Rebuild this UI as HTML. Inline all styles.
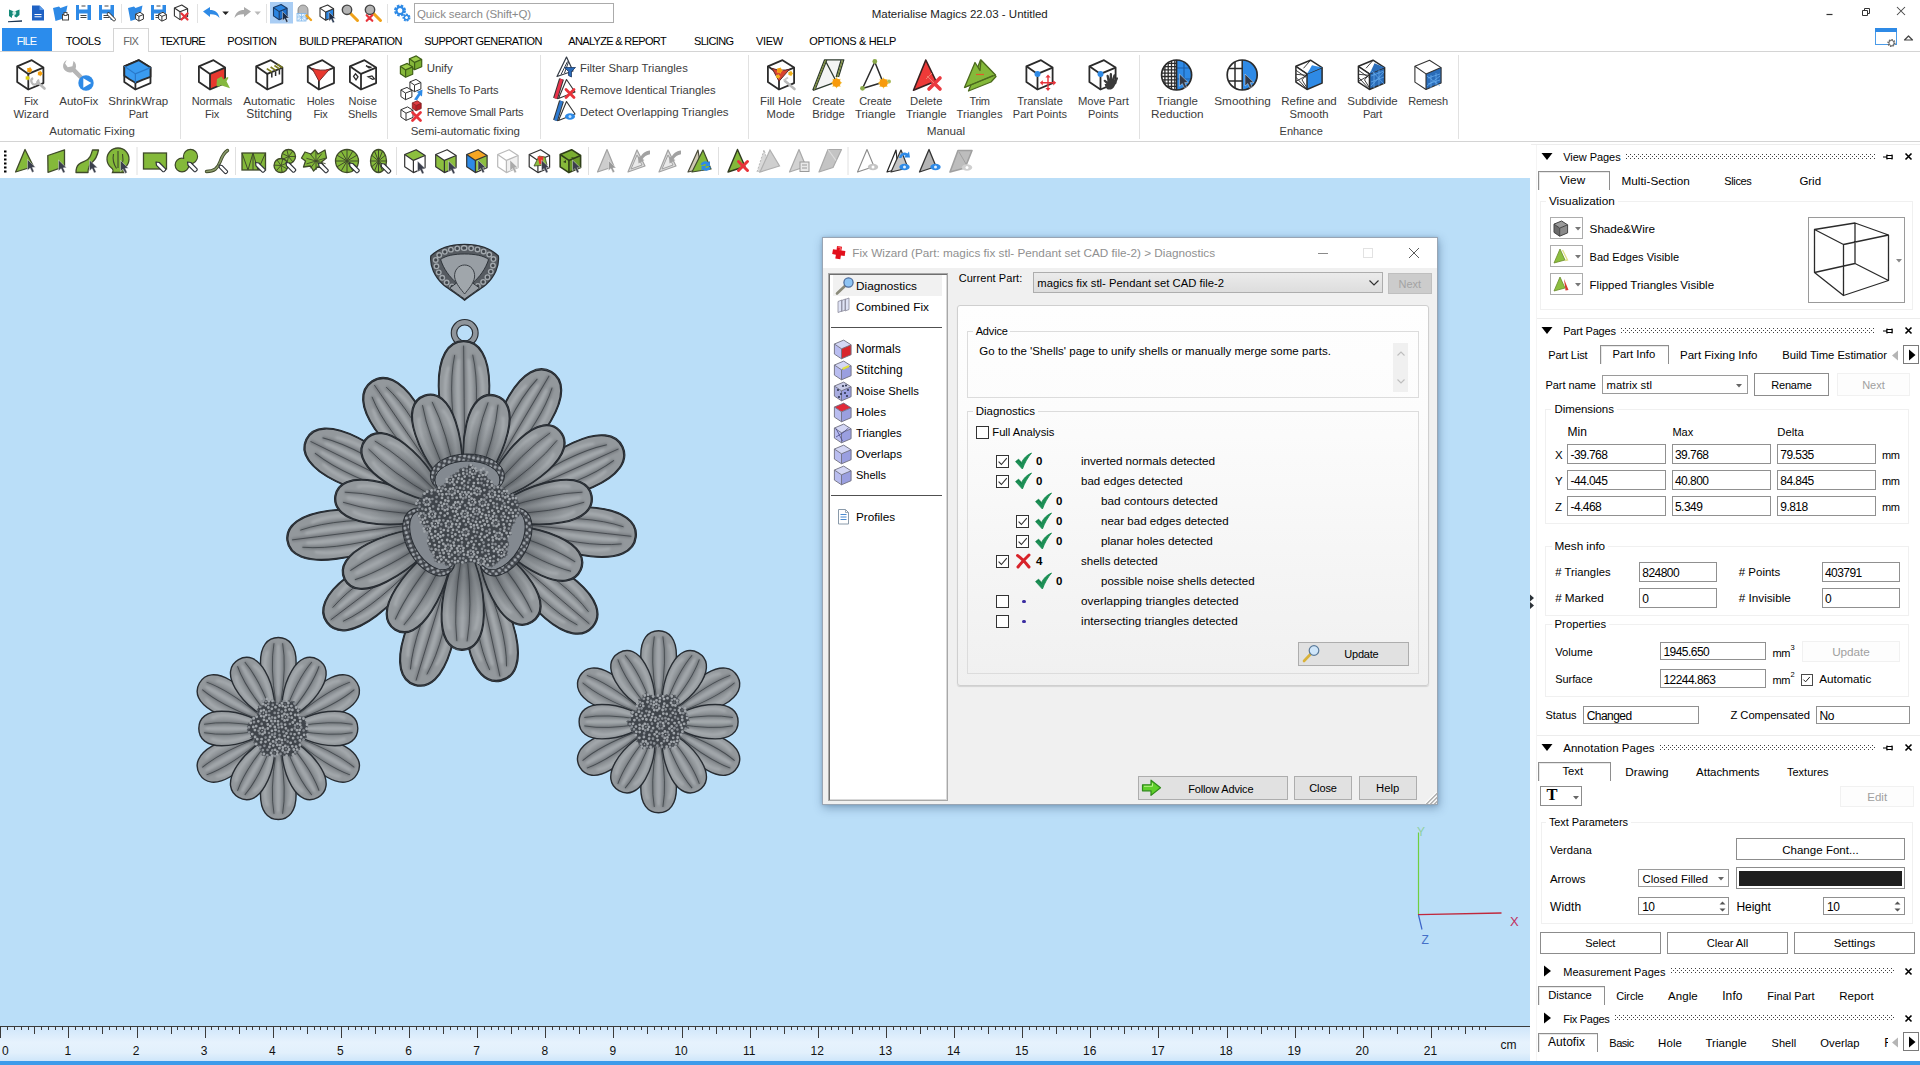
<!DOCTYPE html>
<html><head><meta charset="utf-8"><title>Materialise Magics 22.03 - Untitled</title>
<style>
html,body{margin:0;padding:0;}
body{width:1920px;height:1065px;position:relative;overflow:hidden;background:#fff;font-family:"Liberation Sans",sans-serif;font-size:11.5px;color:#000;}
.b{position:absolute;box-sizing:border-box;}
.t{position:absolute;white-space:nowrap;line-height:16px;height:16px;}
svg{overflow:visible}
</style></head><body>
<div class="b " style="left:0px;top:178px;width:1530px;height:883px;background:#badef8;"></div>
<div class="b " style="left:0px;top:1027px;width:1530px;height:34px;background:linear-gradient(#cfe6fa,#e6f2fd 45%,#e2f0fc 75%,#cfe6fa);"></div>
<div class="b " style="left:0px;top:1061px;width:1920px;height:4px;background:#3d9bea;"></div>
<svg class="b" style="left:0px;top:178px;" width="1530" height="850" viewBox="0 178 1530 850"><defs><filter id="bl" filterUnits="userSpaceOnUse" x="0" y="-40" width="200" height="80"><feGaussianBlur stdDeviation="0.9"/></filter><radialGradient id="cs"><stop offset="0" stop-color="#30353a" stop-opacity=".4"/><stop offset=".6" stop-color="#30353a" stop-opacity=".32"/><stop offset="1" stop-color="#30353a" stop-opacity="0"/></radialGradient><pattern id="st1" width="5.4" height="5.4" patternUnits="userSpaceOnUse" patternTransform="rotate(17)"><rect width="5.4" height="5.4" fill="#3a3f45"/><circle cx="1.4" cy="1.4" r="1.25" fill="#9ba0a6"/><circle cx="4.1" cy="4.1" r="1.25" fill="#92979d"/><circle cx="4.1" cy="1.3" r="1.0" fill="#a5aaaf"/><circle cx="1.3" cy="4.1" r="0.9" fill="#84898f"/></pattern><pattern id="st2" width="13" height="13" patternUnits="userSpaceOnUse" patternTransform="rotate(-31)"><circle cx="4" cy="4" r="2.4" fill="#7d8288" fill-opacity=".5" stroke="#1f2328" stroke-width=".9" stroke-opacity=".75"/><circle cx="10" cy="9" r="2" fill="none" stroke="#1f2328" stroke-width=".8" stroke-opacity=".6"/><circle cx="4" cy="4" r=".8" fill="#c8ccd0"/></pattern><pattern id="bead" width="4.6" height="4.6" patternUnits="userSpaceOnUse" patternTransform="rotate(12)"><rect width="4.6" height="4.6" fill="#3f444a"/><circle cx="2.3" cy="2.3" r="1.95" fill="#9da3a9" stroke="#22262b" stroke-width=".4"/></pattern></defs><g transform="translate(464.6 244)"><path d="M0 0.3C14 0.3 26 4 33.8 12C35 22 30 33 21 41C13 47 5 52 0 56.3C-5 52 -13 47 -21 41C-30 33 -35 22 -33.8 12C-26 4 -14 0.3 0 0.3Z" fill="#565b61" stroke="#272c32" stroke-width="1.2"/><path d="M0 0.3C14 0.3 26 4 33.8 12C35 22 30 33 21 41C13 47 5 52 0 56.3C-5 52 -13 47 -21 41C-30 33 -35 22 -33.8 12C-26 4 -14 0.3 0 0.3Z" transform="translate(0 25) scale(.85) translate(0 -25)" fill="none" stroke="#a2a8ad" stroke-width="7" stroke-dasharray="0 7.6" stroke-linecap="round"/><path d="M0 0.3C14 0.3 26 4 33.8 12C35 22 30 33 21 41C13 47 5 52 0 56.3C-5 52 -13 47 -21 41C-30 33 -35 22 -33.8 12C-26 4 -14 0.3 0 0.3Z" transform="translate(0 25) scale(.85) translate(0 -25)" fill="none" stroke="#41464c" stroke-width="3.8" stroke-dasharray="0 7.6" stroke-linecap="round"/><path d="M0 10C10 10 19 11.5 24 15.5C21 25 15 33 8 39L15 44C10 48 4 52 0 55C-4 52 -10 48 -15 44L-8 39C-15 33 -21 25 -24 15.5C-19 11.5 -10 10 0 10Z" fill="#989ea4" stroke="#272c32" stroke-width=".9"/><path d="M0 21C6 21 10.5 26 10 33C9 40 3 46 0 50C-3 46 -9 40 -10 33C-10.5 26 -6 21 0 21Z" fill="#a0a6ab" stroke="#3a3f45" stroke-width="1"/></g><circle cx="464.7" cy="333" r="10.7" fill="none" stroke="#272c32" stroke-width="6.6"/><circle cx="464.7" cy="333" r="10.7" fill="none" stroke="#8f959b" stroke-width="4.4"/><g transform="translate(465.4 518.0)"><g transform="rotate(-90.6)"><path d="M45.0 0C55.6 -12.9 95.3 -25.8 132.4 -25.8C161.6 -25.8 177.5 -16.0 177.5 0C177.5 16.0 161.6 25.8 132.4 25.8C95.3 25.8 55.6 12.9 45.0 0Z" fill="#50555b" stroke="#272c32" stroke-width="1"/><path d="M45.0 0C55.5 -12.5 94.9 -25.0 131.7 -25.0C160.5 -25.0 176.3 -15.5 176.3 0C176.3 15.5 160.5 25.0 131.7 25.0C94.9 25.0 55.5 12.5 45.0 0Z" fill="#93989c" stroke="#272c32" stroke-width="1.3"/><path d="M73.9 -9.8Q123.8 -24.4 150.3 -15.6M73.9 -3.1Q123.8 -7.8 157.3 -5.0M73.9 3.1Q123.8 7.8 157.3 5.0M73.9 9.8Q123.8 24.4 150.3 15.6" stroke="#abb0b4" stroke-opacity=".75" stroke-width="3.2" stroke-linecap="round" fill="none" filter="url(#bl)"/><path d="M58.1 -5.0Q123.8 -17.5 163.2 -9.0M58.1 0.0Q123.8 0.0 172.4 0.0M58.1 5.0Q123.8 17.5 163.2 9.0" stroke="#62676c" stroke-opacity=".6" stroke-width="3.4" fill="none" filter="url(#bl)"/><path d="M58.1 -5.0Q123.8 -17.5 163.2 -9.0M58.1 0.0Q123.8 0.0 172.4 0.0M58.1 5.0Q123.8 17.5 163.2 9.0" stroke="#33383d" stroke-opacity=".75" stroke-width=".9" fill="none"/></g><g transform="rotate(-59.5)"><path d="M45.0 0C55.0 -12.4 92.5 -24.8 127.5 -24.8C155.0 -24.8 170.0 -15.4 170.0 0C170.0 15.4 155.0 24.8 127.5 24.8C92.5 24.8 55.0 12.4 45.0 0Z" fill="#50555b" stroke="#272c32" stroke-width="1"/><path d="M45.0 0C54.9 -12.0 92.0 -24.0 126.7 -24.0C153.9 -24.0 168.8 -14.9 168.8 0C168.8 14.9 153.9 24.0 126.7 24.0C92.0 24.0 54.9 12.0 45.0 0Z" fill="#93989c" stroke="#272c32" stroke-width="1.3"/><path d="M72.2 -9.4Q119.3 -23.4 144.3 -15.0M72.2 -3.0Q119.3 -7.5 150.8 -4.8M72.2 3.0Q119.3 7.5 150.8 4.8M72.2 9.4Q119.3 23.4 144.3 15.0" stroke="#abb0b4" stroke-opacity=".75" stroke-width="3.2" stroke-linecap="round" fill="none" filter="url(#bl)"/><path d="M57.4 -4.8Q119.3 -16.8 156.4 -8.6M57.4 0.0Q119.3 0.0 165.1 0.0M57.4 4.8Q119.3 16.8 156.4 8.6" stroke="#62676c" stroke-opacity=".6" stroke-width="3.4" fill="none" filter="url(#bl)"/><path d="M57.4 -4.8Q119.3 -16.8 156.4 -8.6M57.4 0.0Q119.3 0.0 165.1 0.0M57.4 4.8Q119.3 16.8 156.4 8.6" stroke="#33383d" stroke-opacity=".75" stroke-width=".9" fill="none"/></g><g transform="rotate(-24.3)"><path d="M45.0 0C55.2 -12.4 93.6 -24.8 129.5 -24.8C157.6 -24.8 173.0 -15.4 173.0 0C173.0 15.4 157.6 24.8 129.5 24.8C93.6 24.8 55.2 12.4 45.0 0Z" fill="#50555b" stroke="#272c32" stroke-width="1"/><path d="M45.0 0C55.1 -12.0 93.2 -24.0 128.7 -24.0C156.6 -24.0 171.8 -14.9 171.8 0C171.8 14.9 156.6 24.0 128.7 24.0C93.2 24.0 55.1 12.0 45.0 0Z" fill="#93989c" stroke="#272c32" stroke-width="1.3"/><path d="M72.9 -9.4Q121.1 -23.4 146.7 -15.0M72.9 -3.0Q121.1 -7.5 153.4 -4.8M72.9 3.0Q121.1 7.5 153.4 4.8M72.9 9.4Q121.1 23.4 146.7 15.0" stroke="#abb0b4" stroke-opacity=".75" stroke-width="3.2" stroke-linecap="round" fill="none" filter="url(#bl)"/><path d="M57.7 -4.8Q121.1 -16.8 159.1 -8.6M57.7 0.0Q121.1 0.0 168.0 0.0M57.7 4.8Q121.1 16.8 159.1 8.6" stroke="#62676c" stroke-opacity=".6" stroke-width="3.4" fill="none" filter="url(#bl)"/><path d="M57.7 -4.8Q121.1 -16.8 159.1 -8.6M57.7 0.0Q121.1 0.0 168.0 0.0M57.7 4.8Q121.1 16.8 159.1 8.6" stroke="#33383d" stroke-opacity=".75" stroke-width=".9" fill="none"/></g><g transform="rotate(6.3)"><path d="M45.0 0C55.2 -12.4 93.3 -24.8 128.8 -24.8C156.8 -24.8 172.0 -15.4 172.0 0C172.0 15.4 156.8 24.8 128.8 24.8C93.3 24.8 55.2 12.4 45.0 0Z" fill="#50555b" stroke="#272c32" stroke-width="1"/><path d="M45.0 0C55.1 -12.0 92.8 -24.0 128.0 -24.0C155.7 -24.0 170.8 -14.9 170.8 0C170.8 14.9 155.7 24.0 128.0 24.0C92.8 24.0 55.1 12.0 45.0 0Z" fill="#93989c" stroke="#272c32" stroke-width="1.3"/><path d="M72.7 -9.4Q120.5 -23.4 145.9 -15.0M72.7 -3.0Q120.5 -7.5 152.6 -4.8M72.7 3.0Q120.5 7.5 152.6 4.8M72.7 9.4Q120.5 23.4 145.9 15.0" stroke="#abb0b4" stroke-opacity=".75" stroke-width="3.2" stroke-linecap="round" fill="none" filter="url(#bl)"/><path d="M57.6 -4.8Q120.5 -16.8 158.2 -8.6M57.6 0.0Q120.5 0.0 167.0 0.0M57.6 4.8Q120.5 16.8 158.2 8.6" stroke="#62676c" stroke-opacity=".6" stroke-width="3.4" fill="none" filter="url(#bl)"/><path d="M57.6 -4.8Q120.5 -16.8 158.2 -8.6M57.6 0.0Q120.5 0.0 167.0 0.0M57.6 4.8Q120.5 16.8 158.2 8.6" stroke="#33383d" stroke-opacity=".75" stroke-width=".9" fill="none"/></g><g transform="rotate(40.5)"><path d="M45.0 0C54.8 -12.4 91.7 -24.8 126.2 -24.8C153.2 -24.8 168.0 -15.4 168.0 0C168.0 15.4 153.2 24.8 126.2 24.8C91.7 24.8 54.8 12.4 45.0 0Z" fill="#50555b" stroke="#272c32" stroke-width="1"/><path d="M45.0 0C54.7 -12.0 91.3 -24.0 125.4 -24.0C152.2 -24.0 166.8 -14.9 166.8 0C166.8 14.9 152.2 24.0 125.4 24.0C91.3 24.0 54.7 12.0 45.0 0Z" fill="#93989c" stroke="#272c32" stroke-width="1.3"/><path d="M71.8 -9.4Q118.1 -23.4 142.7 -15.0M71.8 -3.0Q118.1 -7.5 149.1 -4.8M71.8 3.0Q118.1 7.5 149.1 4.8M71.8 9.4Q118.1 23.4 142.7 15.0" stroke="#abb0b4" stroke-opacity=".75" stroke-width="3.2" stroke-linecap="round" fill="none" filter="url(#bl)"/><path d="M57.2 -4.8Q118.1 -16.8 154.6 -8.6M57.2 0.0Q118.1 0.0 163.1 0.0M57.2 4.8Q118.1 16.8 154.6 8.6" stroke="#62676c" stroke-opacity=".6" stroke-width="3.4" fill="none" filter="url(#bl)"/><path d="M57.2 -4.8Q118.1 -16.8 154.6 -8.6M57.2 0.0Q118.1 0.0 163.1 0.0M57.2 4.8Q118.1 16.8 154.6 8.6" stroke="#33383d" stroke-opacity=".75" stroke-width=".9" fill="none"/></g><g transform="rotate(77.7)"><path d="M45.0 0C54.8 -12.4 91.4 -24.8 125.5 -24.8C152.4 -24.8 167.0 -15.4 167.0 0C167.0 15.4 152.4 24.8 125.5 24.8C91.4 24.8 54.8 12.4 45.0 0Z" fill="#50555b" stroke="#272c32" stroke-width="1"/><path d="M45.0 0C54.7 -12.0 90.9 -24.0 124.7 -24.0C151.3 -24.0 165.8 -14.9 165.8 0C165.8 14.9 151.3 24.0 124.7 24.0C90.9 24.0 54.7 12.0 45.0 0Z" fill="#93989c" stroke="#272c32" stroke-width="1.3"/><path d="M71.6 -9.4Q117.5 -23.4 141.9 -15.0M71.6 -3.0Q117.5 -7.5 148.3 -4.8M71.6 3.0Q117.5 7.5 148.3 4.8M71.6 9.4Q117.5 23.4 141.9 15.0" stroke="#abb0b4" stroke-opacity=".75" stroke-width="3.2" stroke-linecap="round" fill="none" filter="url(#bl)"/><path d="M57.1 -4.8Q117.5 -16.8 153.7 -8.6M57.1 0.0Q117.5 0.0 162.2 0.0M57.1 4.8Q117.5 16.8 153.7 8.6" stroke="#62676c" stroke-opacity=".6" stroke-width="3.4" fill="none" filter="url(#bl)"/><path d="M57.1 -4.8Q117.5 -16.8 153.7 -8.6M57.1 0.0Q117.5 0.0 162.2 0.0M57.1 4.8Q117.5 16.8 153.7 8.6" stroke="#33383d" stroke-opacity=".75" stroke-width=".9" fill="none"/></g><g transform="rotate(106.9)"><path d="M45.0 0C55.4 -12.4 94.4 -24.8 130.8 -24.8C159.4 -24.8 175.0 -15.4 175.0 0C175.0 15.4 159.4 24.8 130.8 24.8C94.4 24.8 55.4 12.4 45.0 0Z" fill="#50555b" stroke="#272c32" stroke-width="1"/><path d="M45.0 0C55.3 -12.0 93.9 -24.0 130.0 -24.0C158.3 -24.0 173.8 -14.9 173.8 0C173.8 14.9 158.3 24.0 130.0 24.0C93.9 24.0 55.3 12.0 45.0 0Z" fill="#93989c" stroke="#272c32" stroke-width="1.3"/><path d="M73.3 -9.4Q122.3 -23.4 148.3 -15.0M73.3 -3.0Q122.3 -7.5 155.1 -4.8M73.3 3.0Q122.3 7.5 155.1 4.8M73.3 9.4Q122.3 23.4 148.3 15.0" stroke="#abb0b4" stroke-opacity=".75" stroke-width="3.2" stroke-linecap="round" fill="none" filter="url(#bl)"/><path d="M57.9 -4.8Q122.3 -16.8 160.9 -8.6M57.9 0.0Q122.3 0.0 169.9 0.0M57.9 4.8Q122.3 16.8 160.9 8.6" stroke="#62676c" stroke-opacity=".6" stroke-width="3.4" fill="none" filter="url(#bl)"/><path d="M57.9 -4.8Q122.3 -16.8 160.9 -8.6M57.9 0.0Q122.3 0.0 169.9 0.0M57.9 4.8Q122.3 16.8 160.9 8.6" stroke="#33383d" stroke-opacity=".75" stroke-width=".9" fill="none"/></g><g transform="rotate(142.9)"><path d="M45.0 0C55.3 -12.4 94.0 -24.8 130.1 -24.8C158.5 -24.8 174.0 -15.4 174.0 0C174.0 15.4 158.5 24.8 130.1 24.8C94.0 24.8 55.3 12.4 45.0 0Z" fill="#50555b" stroke="#272c32" stroke-width="1"/><path d="M45.0 0C55.2 -12.0 93.6 -24.0 129.3 -24.0C157.5 -24.0 172.8 -14.9 172.8 0C172.8 14.9 157.5 24.0 129.3 24.0C93.6 24.0 55.2 12.0 45.0 0Z" fill="#93989c" stroke="#272c32" stroke-width="1.3"/><path d="M73.1 -9.4Q121.7 -23.4 147.5 -15.0M73.1 -3.0Q121.7 -7.5 154.3 -4.8M73.1 3.0Q121.7 7.5 154.3 4.8M73.1 9.4Q121.7 23.4 147.5 15.0" stroke="#abb0b4" stroke-opacity=".75" stroke-width="3.2" stroke-linecap="round" fill="none" filter="url(#bl)"/><path d="M57.8 -4.8Q121.7 -16.8 160.0 -8.6M57.8 0.0Q121.7 0.0 169.0 0.0M57.8 4.8Q121.7 16.8 160.0 8.6" stroke="#62676c" stroke-opacity=".6" stroke-width="3.4" fill="none" filter="url(#bl)"/><path d="M57.8 -4.8Q121.7 -16.8 160.0 -8.6M57.8 0.0Q121.7 0.0 169.0 0.0M57.8 4.8Q121.7 16.8 160.0 8.6" stroke="#33383d" stroke-opacity=".75" stroke-width=".9" fill="none"/></g><g transform="rotate(172.8)"><path d="M45.0 0C55.8 -12.4 96.3 -24.8 134.1 -24.8C163.8 -24.8 180.0 -15.4 180.0 0C180.0 15.4 163.8 24.8 134.1 24.8C96.3 24.8 55.8 12.4 45.0 0Z" fill="#50555b" stroke="#272c32" stroke-width="1"/><path d="M45.0 0C55.7 -12.0 95.8 -24.0 133.3 -24.0C162.7 -24.0 178.8 -14.9 178.8 0C178.8 14.9 162.7 24.0 133.3 24.0C95.8 24.0 55.7 12.0 45.0 0Z" fill="#93989c" stroke="#272c32" stroke-width="1.3"/><path d="M74.4 -9.4Q125.3 -23.4 152.3 -15.0M74.4 -3.0Q125.3 -7.5 159.4 -4.8M74.4 3.0Q125.3 7.5 159.4 4.8M74.4 9.4Q125.3 23.4 152.3 15.0" stroke="#abb0b4" stroke-opacity=".75" stroke-width="3.2" stroke-linecap="round" fill="none" filter="url(#bl)"/><path d="M58.4 -4.8Q125.3 -16.8 165.4 -8.6M58.4 0.0Q125.3 0.0 174.8 0.0M58.4 4.8Q125.3 16.8 165.4 8.6" stroke="#62676c" stroke-opacity=".6" stroke-width="3.4" fill="none" filter="url(#bl)"/><path d="M58.4 -4.8Q125.3 -16.8 165.4 -8.6M58.4 0.0Q125.3 0.0 174.8 0.0M58.4 4.8Q125.3 16.8 165.4 8.6" stroke="#33383d" stroke-opacity=".75" stroke-width=".9" fill="none"/></g><g transform="rotate(-153.7)"><path d="M45.0 0C55.6 -12.4 95.5 -24.8 132.8 -24.8C162.0 -24.8 178.0 -15.4 178.0 0C178.0 15.4 162.0 24.8 132.8 24.8C95.5 24.8 55.6 12.4 45.0 0Z" fill="#50555b" stroke="#272c32" stroke-width="1"/><path d="M45.0 0C55.5 -12.0 95.1 -24.0 132.0 -24.0C161.0 -24.0 176.8 -14.9 176.8 0C176.8 14.9 161.0 24.0 132.0 24.0C95.1 24.0 55.5 12.0 45.0 0Z" fill="#93989c" stroke="#272c32" stroke-width="1.3"/><path d="M74.0 -9.4Q124.1 -23.4 150.7 -15.0M74.0 -3.0Q124.1 -7.5 157.7 -4.8M74.0 3.0Q124.1 7.5 157.7 4.8M74.0 9.4Q124.1 23.4 150.7 15.0" stroke="#abb0b4" stroke-opacity=".75" stroke-width="3.2" stroke-linecap="round" fill="none" filter="url(#bl)"/><path d="M58.2 -4.8Q124.1 -16.8 163.6 -8.6M58.2 0.0Q124.1 0.0 172.8 0.0M58.2 4.8Q124.1 16.8 163.6 8.6" stroke="#62676c" stroke-opacity=".6" stroke-width="3.4" fill="none" filter="url(#bl)"/><path d="M58.2 -4.8Q124.1 -16.8 163.6 -8.6M58.2 0.0Q124.1 0.0 172.8 0.0M58.2 4.8Q124.1 16.8 163.6 8.6" stroke="#33383d" stroke-opacity=".75" stroke-width=".9" fill="none"/></g><g transform="rotate(-124.4)"><path d="M45.0 0C54.7 -12.4 91.0 -24.8 124.9 -24.8C151.5 -24.8 166.0 -15.4 166.0 0C166.0 15.4 151.5 24.8 124.9 24.8C91.0 24.8 54.7 12.4 45.0 0Z" fill="#50555b" stroke="#272c32" stroke-width="1"/><path d="M45.0 0C54.6 -12.0 90.5 -24.0 124.1 -24.0C150.4 -24.0 164.8 -14.9 164.8 0C164.8 14.9 150.4 24.0 124.1 24.0C90.5 24.0 54.6 12.0 45.0 0Z" fill="#93989c" stroke="#272c32" stroke-width="1.3"/><path d="M71.4 -9.4Q116.9 -23.4 141.1 -15.0M71.4 -3.0Q116.9 -7.5 147.4 -4.8M71.4 3.0Q116.9 7.5 147.4 4.8M71.4 9.4Q116.9 23.4 141.1 15.0" stroke="#abb0b4" stroke-opacity=".75" stroke-width="3.2" stroke-linecap="round" fill="none" filter="url(#bl)"/><path d="M57.0 -4.8Q116.9 -16.8 152.8 -8.6M57.0 0.0Q116.9 0.0 161.2 0.0M57.0 4.8Q116.9 16.8 152.8 8.6" stroke="#62676c" stroke-opacity=".6" stroke-width="3.4" fill="none" filter="url(#bl)"/><path d="M57.0 -4.8Q116.9 -16.8 152.8 -8.6M57.0 0.0Q116.9 0.0 161.2 0.0M57.0 4.8Q116.9 16.8 152.8 8.6" stroke="#33383d" stroke-opacity=".75" stroke-width=".9" fill="none"/></g><g transform="rotate(-108.4)"><path d="M28.0 0C36.1 -10.8 66.6 -21.6 95.1 -21.6C117.5 -21.6 129.7 -13.4 129.7 0C129.7 13.4 117.5 21.6 95.1 21.6C66.6 21.6 36.1 10.8 28.0 0Z" fill="#50555b" stroke="#272c32" stroke-width="1"/><path d="M28.0 0C36.0 -10.4 66.2 -20.8 94.3 -20.8C116.4 -20.8 128.5 -12.9 128.5 0C128.5 12.9 116.4 20.8 94.3 20.8C66.2 20.8 36.0 10.4 28.0 0Z" fill="#93989c" stroke="#272c32" stroke-width="1.3"/><path d="M50.1 -8.1Q88.3 -20.2 108.6 -12.9M50.1 0.0Q88.3 0.0 116.4 0.0M50.1 8.1Q88.3 20.2 108.6 12.9" stroke="#abb0b4" stroke-opacity=".75" stroke-width="3.2" stroke-linecap="round" fill="none" filter="url(#bl)"/><path d="M38.0 -2.8Q88.3 -9.9 120.7 -5.1M38.0 2.8Q88.3 9.9 120.7 5.1" stroke="#62676c" stroke-opacity=".6" stroke-width="3.4" fill="none" filter="url(#bl)"/><path d="M38.0 -2.8Q88.3 -9.9 120.7 -5.1M38.0 2.8Q88.3 9.9 120.7 5.1" stroke="#33383d" stroke-opacity=".75" stroke-width=".9" fill="none"/></g><g transform="rotate(-76.4)"><path d="M28.0 0C35.9 -10.8 65.5 -21.6 93.1 -21.6C114.8 -21.6 126.6 -13.4 126.6 0C126.6 13.4 114.8 21.6 93.1 21.6C65.5 21.6 35.9 10.8 28.0 0Z" fill="#50555b" stroke="#272c32" stroke-width="1"/><path d="M28.0 0C35.8 -10.4 65.0 -20.8 92.3 -20.8C113.7 -20.8 125.4 -12.9 125.4 0C125.4 12.9 113.7 20.8 92.3 20.8C65.0 20.8 35.8 10.4 28.0 0Z" fill="#93989c" stroke="#272c32" stroke-width="1.3"/><path d="M49.4 -8.1Q86.4 -20.2 106.1 -12.9M49.4 0.0Q86.4 0.0 113.7 0.0M49.4 8.1Q86.4 20.2 106.1 12.9" stroke="#abb0b4" stroke-opacity=".75" stroke-width="3.2" stroke-linecap="round" fill="none" filter="url(#bl)"/><path d="M37.7 -2.8Q86.4 -9.9 117.8 -5.1M37.7 2.8Q86.4 9.9 117.8 5.1" stroke="#62676c" stroke-opacity=".6" stroke-width="3.4" fill="none" filter="url(#bl)"/><path d="M37.7 -2.8Q86.4 -9.9 117.8 -5.1M37.7 2.8Q86.4 9.9 117.8 5.1" stroke="#33383d" stroke-opacity=".75" stroke-width=".9" fill="none"/></g><g transform="rotate(-42.7)"><path d="M28.0 0C36.1 -10.8 66.4 -21.6 94.7 -21.6C116.9 -21.6 129.0 -13.4 129.0 0C129.0 13.4 116.9 21.6 94.7 21.6C66.4 21.6 36.1 10.8 28.0 0Z" fill="#50555b" stroke="#272c32" stroke-width="1"/><path d="M28.0 0C36.0 -10.4 65.9 -20.8 93.9 -20.8C115.8 -20.8 127.8 -12.9 127.8 0C127.8 12.9 115.8 20.8 93.9 20.8C65.9 20.8 36.0 10.4 28.0 0Z" fill="#93989c" stroke="#272c32" stroke-width="1.3"/><path d="M50.0 -8.1Q87.9 -20.2 108.0 -12.9M50.0 0.0Q87.9 0.0 115.8 0.0M50.0 8.1Q87.9 20.2 108.0 12.9" stroke="#abb0b4" stroke-opacity=".75" stroke-width="3.2" stroke-linecap="round" fill="none" filter="url(#bl)"/><path d="M38.0 -2.8Q87.9 -9.9 120.1 -5.1M38.0 2.8Q87.9 9.9 120.1 5.1" stroke="#62676c" stroke-opacity=".6" stroke-width="3.4" fill="none" filter="url(#bl)"/><path d="M38.0 -2.8Q87.9 -9.9 120.1 -5.1M38.0 2.8Q87.9 9.9 120.1 5.1" stroke="#33383d" stroke-opacity=".75" stroke-width=".9" fill="none"/></g><g transform="rotate(-10.0)"><path d="M28.0 0C36.1 -10.8 66.3 -21.6 94.5 -21.6C116.6 -21.6 128.7 -13.4 128.7 0C128.7 13.4 116.6 21.6 94.5 21.6C66.3 21.6 36.1 10.8 28.0 0Z" fill="#50555b" stroke="#272c32" stroke-width="1"/><path d="M28.0 0C36.0 -10.4 65.8 -20.8 93.7 -20.8C115.6 -20.8 127.5 -12.9 127.5 0C127.5 12.9 115.6 20.8 93.7 20.8C65.8 20.8 36.0 10.4 28.0 0Z" fill="#93989c" stroke="#272c32" stroke-width="1.3"/><path d="M49.9 -8.1Q87.7 -20.2 107.8 -12.9M49.9 0.0Q87.7 0.0 115.6 0.0M49.9 8.1Q87.7 20.2 107.8 12.9" stroke="#abb0b4" stroke-opacity=".75" stroke-width="3.2" stroke-linecap="round" fill="none" filter="url(#bl)"/><path d="M38.0 -2.8Q87.7 -9.9 119.8 -5.1M38.0 2.8Q87.7 9.9 119.8 5.1" stroke="#62676c" stroke-opacity=".6" stroke-width="3.4" fill="none" filter="url(#bl)"/><path d="M38.0 -2.8Q87.7 -9.9 119.8 -5.1M38.0 2.8Q87.7 9.9 119.8 5.1" stroke="#33383d" stroke-opacity=".75" stroke-width=".9" fill="none"/></g><g transform="rotate(24.3)"><path d="M28.0 0C35.9 -10.8 65.6 -21.6 93.3 -21.6C115.1 -21.6 127.0 -13.4 127.0 0C127.0 13.4 115.1 21.6 93.3 21.6C65.6 21.6 35.9 10.8 28.0 0Z" fill="#50555b" stroke="#272c32" stroke-width="1"/><path d="M28.0 0C35.8 -10.4 65.2 -20.8 92.5 -20.8C114.1 -20.8 125.8 -12.9 125.8 0C125.8 12.9 114.1 20.8 92.5 20.8C65.2 20.8 35.8 10.4 28.0 0Z" fill="#93989c" stroke="#272c32" stroke-width="1.3"/><path d="M49.5 -8.1Q86.7 -20.2 106.4 -12.9M49.5 0.0Q86.7 0.0 114.1 0.0M49.5 8.1Q86.7 20.2 106.4 12.9" stroke="#abb0b4" stroke-opacity=".75" stroke-width="3.2" stroke-linecap="round" fill="none" filter="url(#bl)"/><path d="M37.8 -2.8Q86.7 -9.9 118.2 -5.1M37.8 2.8Q86.7 9.9 118.2 5.1" stroke="#62676c" stroke-opacity=".6" stroke-width="3.4" fill="none" filter="url(#bl)"/><path d="M37.8 -2.8Q86.7 -9.9 118.2 -5.1M37.8 2.8Q86.7 9.9 118.2 5.1" stroke="#33383d" stroke-opacity=".75" stroke-width=".9" fill="none"/></g><g transform="rotate(57.3)"><path d="M28.0 0C35.7 -10.8 64.5 -21.6 91.4 -21.6C112.5 -21.6 124.0 -13.4 124.0 0C124.0 13.4 112.5 21.6 91.4 21.6C64.5 21.6 35.7 10.8 28.0 0Z" fill="#50555b" stroke="#272c32" stroke-width="1"/><path d="M28.0 0C35.6 -10.4 64.0 -20.8 90.6 -20.8C111.4 -20.8 122.8 -12.9 122.8 0C122.8 12.9 111.4 20.8 90.6 20.8C64.0 20.8 35.6 10.4 28.0 0Z" fill="#93989c" stroke="#272c32" stroke-width="1.3"/><path d="M48.9 -8.1Q84.9 -20.2 104.0 -12.9M48.9 0.0Q84.9 0.0 111.4 0.0M48.9 8.1Q84.9 20.2 104.0 12.9" stroke="#abb0b4" stroke-opacity=".75" stroke-width="3.2" stroke-linecap="round" fill="none" filter="url(#bl)"/><path d="M37.5 -2.8Q84.9 -9.9 115.4 -5.1M37.5 2.8Q84.9 9.9 115.4 5.1" stroke="#62676c" stroke-opacity=".6" stroke-width="3.4" fill="none" filter="url(#bl)"/><path d="M37.5 -2.8Q84.9 -9.9 115.4 -5.1M37.5 2.8Q84.9 9.9 115.4 5.1" stroke="#33383d" stroke-opacity=".75" stroke-width=".9" fill="none"/></g><g transform="rotate(122.3)"><path d="M28.0 0C36.4 -10.8 67.7 -21.6 97.0 -21.6C120.0 -21.6 132.5 -13.4 132.5 0C132.5 13.4 120.0 21.6 97.0 21.6C67.7 21.6 36.4 10.8 28.0 0Z" fill="#50555b" stroke="#272c32" stroke-width="1"/><path d="M28.0 0C36.3 -10.4 67.3 -20.8 96.2 -20.8C118.9 -20.8 131.3 -12.9 131.3 0C131.3 12.9 118.9 20.8 96.2 20.8C67.3 20.8 36.3 10.4 28.0 0Z" fill="#93989c" stroke="#272c32" stroke-width="1.3"/><path d="M50.7 -8.1Q90.0 -20.2 110.8 -12.9M50.7 0.0Q90.0 0.0 118.9 0.0M50.7 8.1Q90.0 20.2 110.8 12.9" stroke="#abb0b4" stroke-opacity=".75" stroke-width="3.2" stroke-linecap="round" fill="none" filter="url(#bl)"/><path d="M38.3 -2.8Q90.0 -9.9 123.3 -5.1M38.3 2.8Q90.0 9.9 123.3 5.1" stroke="#62676c" stroke-opacity=".6" stroke-width="3.4" fill="none" filter="url(#bl)"/><path d="M38.3 -2.8Q90.0 -9.9 123.3 -5.1M38.3 2.8Q90.0 9.9 123.3 5.1" stroke="#33383d" stroke-opacity=".75" stroke-width=".9" fill="none"/></g><g transform="rotate(91.6)"><path d="M28.0 0C36.4 -10.8 67.7 -21.6 97.0 -21.6C120.0 -21.6 132.5 -13.4 132.5 0C132.5 13.4 120.0 21.6 97.0 21.6C67.7 21.6 36.4 10.8 28.0 0Z" fill="#50555b" stroke="#272c32" stroke-width="1"/><path d="M28.0 0C36.3 -10.4 67.3 -20.8 96.2 -20.8C118.9 -20.8 131.3 -12.9 131.3 0C131.3 12.9 118.9 20.8 96.2 20.8C67.3 20.8 36.3 10.4 28.0 0Z" fill="#93989c" stroke="#272c32" stroke-width="1.3"/><path d="M50.7 -8.1Q90.0 -20.2 110.8 -12.9M50.7 0.0Q90.0 0.0 118.9 0.0M50.7 8.1Q90.0 20.2 110.8 12.9" stroke="#abb0b4" stroke-opacity=".75" stroke-width="3.2" stroke-linecap="round" fill="none" filter="url(#bl)"/><path d="M38.3 -2.8Q90.0 -9.9 123.3 -5.1M38.3 2.8Q90.0 9.9 123.3 5.1" stroke="#62676c" stroke-opacity=".6" stroke-width="3.4" fill="none" filter="url(#bl)"/><path d="M38.3 -2.8Q90.0 -9.9 123.3 -5.1M38.3 2.8Q90.0 9.9 123.3 5.1" stroke="#33383d" stroke-opacity=".75" stroke-width=".9" fill="none"/></g><g transform="rotate(153.1)"><path d="M28.0 0C36.6 -10.8 69.0 -21.6 99.3 -21.6C123.0 -21.6 136.0 -13.4 136.0 0C136.0 13.4 123.0 21.6 99.3 21.6C69.0 21.6 36.6 10.8 28.0 0Z" fill="#50555b" stroke="#272c32" stroke-width="1"/><path d="M28.0 0C36.5 -10.4 68.6 -20.8 98.5 -20.8C122.0 -20.8 134.8 -12.9 134.8 0C134.8 12.9 122.0 20.8 98.5 20.8C68.6 20.8 36.5 10.4 28.0 0Z" fill="#93989c" stroke="#272c32" stroke-width="1.3"/><path d="M51.5 -8.1Q92.1 -20.2 113.7 -12.9M51.5 0.0Q92.1 0.0 122.0 0.0M51.5 8.1Q92.1 20.2 113.7 12.9" stroke="#abb0b4" stroke-opacity=".75" stroke-width="3.2" stroke-linecap="round" fill="none" filter="url(#bl)"/><path d="M38.7 -2.8Q92.1 -9.9 126.5 -5.1M38.7 2.8Q92.1 9.9 126.5 5.1" stroke="#62676c" stroke-opacity=".6" stroke-width="3.4" fill="none" filter="url(#bl)"/><path d="M38.7 -2.8Q92.1 -9.9 126.5 -5.1M38.7 2.8Q92.1 9.9 126.5 5.1" stroke="#33383d" stroke-opacity=".75" stroke-width=".9" fill="none"/></g><g transform="rotate(-170.3)"><path d="M28.0 0C36.4 -10.8 67.7 -21.6 97.0 -21.6C120.0 -21.6 132.5 -13.4 132.5 0C132.5 13.4 120.0 21.6 97.0 21.6C67.7 21.6 36.4 10.8 28.0 0Z" fill="#50555b" stroke="#272c32" stroke-width="1"/><path d="M28.0 0C36.3 -10.4 67.3 -20.8 96.2 -20.8C118.9 -20.8 131.3 -12.9 131.3 0C131.3 12.9 118.9 20.8 96.2 20.8C67.3 20.8 36.3 10.4 28.0 0Z" fill="#93989c" stroke="#272c32" stroke-width="1.3"/><path d="M50.7 -8.1Q90.0 -20.2 110.8 -12.9M50.7 0.0Q90.0 0.0 118.9 0.0M50.7 8.1Q90.0 20.2 110.8 12.9" stroke="#abb0b4" stroke-opacity=".75" stroke-width="3.2" stroke-linecap="round" fill="none" filter="url(#bl)"/><path d="M38.3 -2.8Q90.0 -9.9 123.3 -5.1M38.3 2.8Q90.0 9.9 123.3 5.1" stroke="#62676c" stroke-opacity=".6" stroke-width="3.4" fill="none" filter="url(#bl)"/><path d="M38.3 -2.8Q90.0 -9.9 123.3 -5.1M38.3 2.8Q90.0 9.9 123.3 5.1" stroke="#33383d" stroke-opacity=".75" stroke-width=".9" fill="none"/></g><g transform="rotate(-142.1)"><path d="M28.0 0C36.0 -10.8 65.8 -21.6 93.7 -21.6C115.6 -21.6 127.6 -13.4 127.6 0C127.6 13.4 115.6 21.6 93.7 21.6C65.8 21.6 36.0 10.8 28.0 0Z" fill="#50555b" stroke="#272c32" stroke-width="1"/><path d="M28.0 0C35.9 -10.4 65.4 -20.8 92.9 -20.8C114.6 -20.8 126.4 -12.9 126.4 0C126.4 12.9 114.6 20.8 92.9 20.8C65.4 20.8 35.9 10.4 28.0 0Z" fill="#93989c" stroke="#272c32" stroke-width="1.3"/><path d="M49.6 -8.1Q87.0 -20.2 106.9 -12.9M49.6 0.0Q87.0 0.0 114.6 0.0M49.6 8.1Q87.0 20.2 106.9 12.9" stroke="#abb0b4" stroke-opacity=".75" stroke-width="3.2" stroke-linecap="round" fill="none" filter="url(#bl)"/><path d="M37.8 -2.8Q87.0 -9.9 118.8 -5.1M37.8 2.8Q87.0 9.9 118.8 5.1" stroke="#62676c" stroke-opacity=".6" stroke-width="3.4" fill="none" filter="url(#bl)"/><path d="M37.8 -2.8Q87.0 -9.9 118.8 -5.1M37.8 2.8Q87.0 9.9 118.8 5.1" stroke="#33383d" stroke-opacity=".75" stroke-width=".9" fill="none"/></g><circle cx="2" cy="2" r="98" fill="url(#cs)"/><g transform="translate(2 2) rotate(-90)"><ellipse cx="44" cy="0" rx="22" ry="37" fill="url(#bead)" stroke="#272c32" stroke-width="1"/><ellipse cx="40" cy="0" rx="19" ry="32.5" fill="#838990" stroke="#272c32" stroke-width="1"/></g><g transform="translate(2 2) rotate(-210)"><ellipse cx="44" cy="0" rx="22" ry="37" fill="url(#bead)" stroke="#272c32" stroke-width="1"/><ellipse cx="40" cy="0" rx="19" ry="32.5" fill="#838990" stroke="#272c32" stroke-width="1"/></g><g transform="translate(2 2) rotate(-330)"><ellipse cx="44" cy="0" rx="22" ry="37" fill="url(#bead)" stroke="#272c32" stroke-width="1"/><ellipse cx="40" cy="0" rx="19" ry="32.5" fill="#838990" stroke="#272c32" stroke-width="1"/></g><path d="M49.5 1.0L53.9 -2.6L54.6 -6.3L53.1 -9.6L53.7 -13.5L52.4 -17.0L51.2 -20.5L49.1 -23.5L43.7 -24.4L40.3 -26.1L39.5 -29.7L35.1 -30.0L33.0 -32.4L28.4 -31.5L27.1 -34.7L25.4 -37.7L22.2 -38.4L21.0 -43.6L18.3 -46.2L14.6 -45.3L11.5 -47.4L8.5 -51.0L4.9 -53.5L1.2 -51.2L-2.3 -49.7L-5.8 -49.0L-8.6 -45.3L-11.5 -43.6L-14.3 -41.8L-16.7 -39.4L-18.4 -36.0L-20.6 -34.0L-22.9 -32.2L-26.2 -31.5L-28.7 -29.6L-31.0 -27.6L-36.9 -28.0L-39.3 -25.4L-42.6 -23.3L-43.5 -19.7L-48.4 -17.7L-49.1 -13.9L-46.5 -9.5L-46.9 -6.0L-47.4 -2.5L-45.8 1.0L-45.0 4.4L-41.2 7.2L-41.2 10.4L-39.3 13.1L-36.9 15.5L-37.4 19.0L-38.0 22.8L-37.5 26.3L-35.8 29.2L-35.3 33.1L-32.4 35.2L-31.2 39.0L-30.2 43.5L-26.3 44.4L-22.4 45.0L-19.5 47.1L-15.9 47.8L-12.0 47.3L-8.1 45.5L-4.8 45.0L-1.6 44.6L1.5 45.4L4.5 44.3L7.5 44.2L10.8 45.2L13.8 44.2L17.3 44.9L21.9 47.8L26.2 48.7L29.3 46.5L32.2 44.4L34.7 41.5L37.9 39.8L41.1 37.8L41.9 33.6L42.0 29.3L43.5 26.3L41.7 21.6L43.1 18.9L45.4 16.4L44.9 13.0L45.7 10.1L46.6 7.1L49.4 4.2Z" fill="#40454b" stroke="#5a5f65" stroke-width="1.6" stroke-dasharray="1.6 1.6"/><path d="M-12.2 -38.6h0M-13.0 -35.9h0M-18.2 -36.1h0M-18.7 -38.9h0M20.2 -43.3h0M17.3 -42.9h0M15.6 -47.8h0M18.1 -49.3h0M21.7 -45.7h0M9.8 -15.6h0M5.3 -13.0h0M3.4 -15.1h0M6.2 -19.4h0M8.9 -18.4h0M-40.3 0.2h0M-42.8 1.6h0M-46.3 -2.1h0M-44.7 -4.5h0M-8.3 30.4h0M-6.6 28.1h0M-1.9 30.1h0M-2.4 32.9h0M-7.5 33.2h0M18.0 45.9h0M13.0 44.7h0M13.1 41.8h0M18.1 40.8h0M19.3 43.4h0M38.7 -26.9h0M41.5 -26.8h0M42.4 -21.7h0M39.8 -20.6h0M-13.8 30.4h0M-15.5 32.8h0M-20.3 30.8h0M-19.8 28.0h0M-14.6 27.7h0M-33.6 5.4h0M-29.0 2.9h0M-27.1 5.0h0M-30.2 9.2h0M-32.8 8.1h0M19.6 -13.2h0M16.9 -12.1h0M14.0 -16.4h0M16.0 -18.5h0M9.9 -49.5h0M11.0 -46.9h0M6.9 -43.9h0M4.7 -45.7h0M7.1 -50.3h0M-17.6 3.2h0M-13.2 6.0h0M-14.1 8.7h0M-19.3 8.1h0M-19.6 5.3h0M-4.8 -21.0h0M-5.2 -23.8h0M-0.4 -25.7h0M1.2 -23.4h0M31.1 20.4h0M30.0 17.7h0M34.2 14.8h0M36.4 16.7h0M33.9 21.2h0M7.0 38.8h0M2.2 36.9h0M2.7 34.0h0M7.8 33.7h0M8.7 36.4h0M29.4 -25.7h0M29.7 -22.9h0M24.8 -21.3h0M23.3 -23.8h0M-36.5 -4.2h0M-34.8 -6.5h0M-30.1 -4.3h0M-30.7 -1.5h0M-35.8 -1.4h0M30.8 1.8h0M33.3 6.4h0M31.1 8.2h0M26.9 5.2h0M28.0 2.6h0M7.8 -6.3h0M8.6 -9.1h0M13.7 -8.8h0M14.2 -6.0h0M0.7 17.6h0M-2.1 16.8h0M-1.8 11.7h0M1.0 11.2h0M3.0 16.0h0M37.1 31.7h0M38.6 36.7h0M36.1 38.1h0M32.6 34.2h0M34.3 31.9h0M-17.9 -8.7h0M-20.6 -7.8h0M-23.3 -12.2h0M-21.2 -14.2h0M14.0 -29.3h0M15.3 -26.7h0M11.4 -23.4h0M9.1 -25.1h0M11.2 -29.8h0M-7.2 -15.8h0M-5.6 -10.9h0M-8.1 -9.4h0M-11.7 -13.1h0M-10.1 -15.5h0M-35.1 10.5h0M-35.7 13.3h0M-40.9 13.4h0M-41.6 10.6h0M-38.8 -19.6h0M-36.1 -18.5h0M-36.9 -13.5h0M-39.8 -13.3h0M-41.3 -18.2h0M-0.3 -0.8h0M-4.0 -4.3h0M-2.6 -6.8h0M2.3 -5.2h0M2.1 -2.4h0M-15.3 -29.2h0M-12.5 -29.5h0M-10.7 -24.7h0M-13.2 -23.1h0M-22.2 17.3h0M50.1 -7.8h0M-26.2 -30.3h0M38.1 -4.5h0M28.7 -4.6h0M-30.6 27.1h0M-7.4 43.2h0M26.1 -36.1h0M5.5 41.9h0M-23.0 -23.5h0M-12.4 -6.7h0M11.4 38.9h0M3.0 0.9h0M-3.4 -34.8h0M8.5 26.6h0M-38.1 3.8h0M45.6 -8.2h0M0.5 42.7h0M9.0 42.9h0M-33.1 19.7h0M-26.3 43.8h0M-7.8 -3.7h0M15.6 -1.1h0M-38.2 -26.3h0M22.3 -10.0h0M5.6 -29.1h0M35.9 -9.3h0M22.3 46.9h0M41.2 15.0h0M-19.8 -28.7h0M-17.0 -17.0h0M-49.0 -14.5h0M28.8 13.7h0M-8.7 -20.2h0M27.0 29.5h0M21.7 17.3h0M15.9 16.0h0M26.6 -32.5h0M-33.8 -27.5h0M-0.7 -41.4h0M42.9 18.4h0M-25.1 38.2h0M-19.4 42.1h0M-10.4 44.2h0M26.9 -7.4h0M-18.2 22.0h0M2.5 -31.0h0M-24.3 -27.1h0M-6.1 0.1h0M43.8 -5.1h0M-1.6 2.9h0M5.3 6.1h0M-14.0 -10.5h0M21.7 -33.2h0M-26.1 24.2h0M47.5 -19.8h0M-20.1 -17.6h0M-10.4 40.4h0M28.4 38.3h0M-24.8 -4.9h0M-15.3 46.6h0M28.5 33.0h0M-22.1 26.0h0M12.8 9.8h0M-8.1 2.7h0M-11.3 -33.3h0M-1.3 -36.9h0M-10.6 -1.9h0M47.0 -13.8h0M32.4 -30.8h0M-44.8 4.0h0M-5.5 6.0h0M-35.7 -9.5h0M-39.6 -8.3h0M32.7 41.6h0M-27.5 -26.6h0M33.7 -26.4h0M-11.7 24.6h0M41.3 26.4h0M-7.4 -26.5h0M23.0 32.9h0M-21.6 12.1h0M-3.7 20.5h0M23.2 21.8h0M50.9 -2.0h0M39.2 9.7h0M-13.1 18.5h0M1.9 27.9h0M23.2 26.9h0M6.1 23.6h0M-23.4 -20.1h0M-7.1 22.2h0M-5.4 -30.1h0M-30.1 13.4h0M7.0 19.8h0M-27.3 16.4h0M-26.4 28.4h0M-35.7 25.8h0M-12.4 11.8h0M7.8 -40.7h0M-17.8 -4.5h0M19.0 -27.9h0M14.0 26.3h0M20.3 37.8h0M17.0 11.5h0M-27.2 -9.0h0M3.2 -25.7h0M23.1 7.4h0M-6.3 -43.0h0M-31.9 34.5h0M-10.0 16.5h0M39.2 28.9h0M33.0 -6.5h0M42.7 -0.2h0M-30.3 18.1h0M31.7 -10.0h0M-16.1 38.8h0M34.6 -18.6h0M14.4 18.8h0M-29.8 31.5h0M-7.0 -39.5h0M12.3 34.5h0M4.9 -9.2h0M-17.4 12.7h0M-9.3 6.3h0M-47.8 -17.4h0M27.5 22.4h0M21.1 0.2h0M43.0 -10.5h0M16.3 8.1h0M38.3 6.4h0M25.1 -17.3h0M44.2 6.5h0M-6.3 13.8h0M27.1 19.3h0M23.0 -13.3h0M24.2 15.0h0M22.3 -36.7h0M-8.4 -36.0h0M-24.5 -15.4h0M-20.7 -2.4h0M27.6 -1.5h0M8.5 13.7h0M8.5 -34.9h0M17.9 2.6h0M39.4 -1.4h0M28.0 -14.8h0M5.5 9.1h0M-21.6 39.3h0M-2.1 -44.5h0M-3.2 -16.0h0M5.5 -2.7h0M12.8 -35.1h0M-25.9 2.3h0M-23.4 22.3h0M-22.9 32.1h0M-3.0 44.3h0M21.8 3.5h0M-27.9 39.3h0M5.8 -24.0h0M50.6 -19.8h0M24.6 43.1h0M-24.1 41.6h0M-6.8 8.9h0M19.3 6.5h0M-3.5 -39.1h0M-19.0 -23.9h0M33.6 28.4h0M30.9 31.0h0M33.3 -21.8h0M25.2 0.6h0M-9.8 -42.2h0M-16.8 35.8h0M45.3 2.8h0M12.3 -38.7h0M39.0 20.9h0M47.4 -5.1h0M42.8 -15.9h0M-37.6 22.7h0M10.5 3.8h0M38.8 12.7h0M20.4 -2.8h0M-10.5 34.5h0M14.7 4.1h0M3.8 -21.4h0M44.1 -18.9h0M23.5 -6.1h0M16.8 -4.2h0M3.0 25.0h0M-25.0 18.5h0M13.8 -42.1h0M-41.2 4.7h0M16.3 21.9h0M39.7 -11.2h0M-27.7 20.3h0M2.9 3.9h0M-21.7 35.0h0M37.4 1.9h0M-34.1 16.2h0M5.4 -53.1h0M-2.2 -48.1h0M8.5 7.4h0M24.8 39.8h0M-1.4 36.6h0M44.9 15.1h0M8.0 -31.8h0M7.7 29.7h0M19.3 19.0h0M-40.9 -24.3h0M-11.3 27.6h0M-9.3 -6.5h0M-24.4 14.2h0M47.6 -1.7h0M-16.9 43.8h0M11.7 7.0h0" stroke="#a0a5aa" stroke-width="2.8" stroke-linecap="round" fill="none"/><path d="M-13.9 -41.0h0M-15.6 -34.8h0M-16.8 -41.1h0M15.3 -45.0h0M20.8 -48.4h0M8.2 -13.3h0M3.8 -18.0h0M-39.9 -2.6h0M-45.4 0.6h0M-41.9 -4.7h0M-3.8 27.9h0M-4.9 34.3h0M15.2 46.5h0M15.3 40.1h0M36.8 -24.8h0M43.2 -24.5h0M37.3 -21.9h0M-18.3 32.9h0M-17.3 26.6h0M-31.9 3.0h0M-27.6 7.9h0M20.5 -15.9h0M14.4 -13.6h0M18.9 -18.3h0M9.7 -44.4h0M4.8 -48.6h0M-14.7 3.5h0M-16.8 9.6h0M-2.3 -19.6h0M-3.3 -25.9h0M0.4 -20.6h0M31.4 15.2h0M36.2 19.5h0M4.2 39.0h0M5.2 32.6h0M27.0 -27.3h0M27.6 -20.9h0M24.3 -26.4h0M-31.9 -6.5h0M-33.2 -0.2h0M33.1 3.5h0M28.3 7.7h0M9.5 -4.0h0M11.2 -10.2h0M12.3 -3.8h0M-3.2 14.2h0M3.1 13.1h0M39.1 33.8h0M33.5 37.0h0M-16.9 -11.4h0M-23.0 -9.3h0M-18.4 -13.8h0M14.2 -24.1h0M9.0 -28.0h0M-5.2 -13.8h0M-10.7 -10.4h0M-37.0 8.3h0M-38.3 14.6h0M-39.8 8.4h0M-35.3 -15.8h0M-41.7 -15.4h0M-3.0 -1.6h0M0.2 -7.2h0M-16.8 -26.8h0M-10.4 -27.5h0M-15.9 -24.1h0M50.0 -16.2h0M18.6 28.2h0M51.7 -13.0h0M-33.9 30.9h0M-24.1 6.4h0M-5.4 40.3h0M-15.3 -0.5h0M31.0 -1.6h0M23.4 36.0h0M19.4 -38.9h0M-28.8 -20.9h0M10.1 18.1h0M2.8 -35.3h0M24.2 11.5h0M-21.8 44.8h0M11.7 0.6h0M43.4 10.6h0M8.9 10.6h0M27.7 46.2h0M36.0 -1.5h0M1.3 -50.9h0M48.5 2.6h0M19.0 -22.7h0M28.7 -11.3h0M18.1 24.6h0M-8.8 -30.6h0M36.0 -29.9h0M-29.8 42.1h0M-29.1 -16.3h0M36.3 25.5h0M40.8 -7.6h0M18.5 -32.7h0M-6.9 36.7h0M-33.9 -24.5h0M-26.4 -12.6h0M30.1 26.2h0M27.0 25.9h0M41.5 3.2h0M11.7 14.3h0M17.9 -8.1h0M28.1 43.0h0M16.7 30.8h0M-45.9 -11.3h0M23.5 -2.6h0M-12.9 -20.1h0M10.5 23.0h0M31.6 -13.8h0M-5.5 17.8h0M34.9 11.3h0M37.4 -17.2h0M-31.7 37.5h0M19.9 32.4h0M36.8 -12.2h0M52.6 -4.9h0M1.4 -47.3h0M-0.8 -32.4h0M0.4 6.7h0M16.1 -38.9h0M-20.7 -32.4h0M-36.5 19.5h0M31.5 -18.9h0M-26.1 -1.1h0M-33.0 -19.0h0M4.1 -42.2h0M-17.3 17.1h0M-7.3 -46.8h0M16.1 -34.9h0M-22.0 2.3h0M-13.5 36.9h0M-31.6 22.7h0M-15.2 23.1h0M7.3 2.6h0M-24.8 10.8h0M21.2 -20.6h0M16.9 34.2h0M-43.1 -9.2h0M-13.4 43.0h0M-1.6 -29.3h0M10.6 30.9h0M-25.6 35.1h0M-0.3 -12.6h0M-11.0 1.4h0M-13.5 14.8h0M-26.2 -23.8h0M4.2 -38.0h0M21.1 13.2h0M-32.3 -11.6h0M-22.8 -29.7h0M21.9 41.2h0M-17.4 -20.3h0M1.0 21.2h0M-10.2 21.4h0M53.6 -8.5h0M-3.4 24.4h0M-30.4 -27.9h0M-2.1 40.3h0M28.8 -30.3h0M1.7 -9.9h0M47.1 -22.8h0M1.6 -44.1h0M41.3 31.3h0M-8.5 11.8h0M-26.7 32.2h0M-45.8 -14.9h0M8.0 -0.9h0M24.2 -30.6h0M39.0 -14.6h0" stroke="#898e94" stroke-width="2.7" stroke-linecap="round" fill="none"/><path d="M-15.5 -38.0h0M18.4 -46.1h0M6.5 -16.1h0M-43.1 -1.6h0M-5.0 31.0h0M16.0 43.3h0M40.0 -23.9h0M-17.1 29.9h0M-30.3 5.9h0M17.2 -15.4h0M7.7 -47.0h0M-16.5 6.3h0M-2.1 -22.8h0M33.3 17.9h0M5.4 35.9h0M26.6 -24.1h0M-33.3 -3.5h0M30.2 5.1h0M11.1 -6.9h0M0.1 14.4h0M35.9 34.8h0M-20.2 -11.0h0M12.0 -26.6h0M-8.4 -12.7h0M-38.3 11.3h0M-38.5 -16.3h0M-0.7 -4.0h0M-13.5 -26.4h0" stroke="#5d6268" stroke-width="2.2" stroke-linecap="round" fill="none"/><path d="M-15.2 -38.3h0M6.8 -16.4h0M-4.7 30.7h0M40.3 -24.2h0M-30.0 5.6h0M8.0 -47.3h0M-1.8 -23.1h0M5.7 35.6h0M-33.0 -3.8h0M11.4 -7.2h0M36.2 34.5h0M12.3 -26.9h0M-38.0 11.0h0M-0.4 -4.3h0" stroke="#d5d8db" stroke-width="1" stroke-linecap="round" fill="none"/></g><g transform="translate(278.3 728.5)"><g transform="rotate(-90.0)"><path d="M18.0 0C23.8 -8.9 45.7 -17.8 66.2 -17.8C82.2 -17.8 91.0 -11.0 91.0 0C91.0 11.0 82.2 17.8 66.2 17.8C45.7 17.8 23.8 8.9 18.0 0Z" fill="#93989c" stroke="#272c32" stroke-width="1.4"/><path d="M34.1 -6.9Q61.8 -17.3 76.5 -11.1M34.1 0.0Q61.8 0.0 82.2 0.0M34.1 6.9Q61.8 17.3 76.5 11.1" stroke="#abb0b4" stroke-opacity=".75" stroke-width="3.2" stroke-linecap="round" fill="none" filter="url(#bl)"/><path d="M25.3 -2.4Q61.8 -8.4 85.3 -4.3M25.3 2.4Q61.8 8.4 85.3 4.3" stroke="#62676c" stroke-opacity=".6" stroke-width="3.4" fill="none" filter="url(#bl)"/><path d="M25.3 -2.4Q61.8 -8.4 85.3 -4.3M25.3 2.4Q61.8 8.4 85.3 4.3" stroke="#33383d" stroke-opacity=".75" stroke-width=".9" fill="none"/></g><g transform="rotate(-150.0)"><path d="M18.0 0C23.8 -8.9 45.7 -17.8 66.2 -17.8C82.2 -17.8 91.0 -11.0 91.0 0C91.0 11.0 82.2 17.8 66.2 17.8C45.7 17.8 23.8 8.9 18.0 0Z" fill="#93989c" stroke="#272c32" stroke-width="1.4"/><path d="M34.1 -6.9Q61.8 -17.3 76.5 -11.1M34.1 0.0Q61.8 0.0 82.2 0.0M34.1 6.9Q61.8 17.3 76.5 11.1" stroke="#abb0b4" stroke-opacity=".75" stroke-width="3.2" stroke-linecap="round" fill="none" filter="url(#bl)"/><path d="M25.3 -2.4Q61.8 -8.4 85.3 -4.3M25.3 2.4Q61.8 8.4 85.3 4.3" stroke="#62676c" stroke-opacity=".6" stroke-width="3.4" fill="none" filter="url(#bl)"/><path d="M25.3 -2.4Q61.8 -8.4 85.3 -4.3M25.3 2.4Q61.8 8.4 85.3 4.3" stroke="#33383d" stroke-opacity=".75" stroke-width=".9" fill="none"/></g><g transform="rotate(-210.0)"><path d="M18.0 0C23.8 -8.9 45.7 -17.8 66.2 -17.8C82.2 -17.8 91.0 -11.0 91.0 0C91.0 11.0 82.2 17.8 66.2 17.8C45.7 17.8 23.8 8.9 18.0 0Z" fill="#93989c" stroke="#272c32" stroke-width="1.4"/><path d="M34.1 -6.9Q61.8 -17.3 76.5 -11.1M34.1 0.0Q61.8 0.0 82.2 0.0M34.1 6.9Q61.8 17.3 76.5 11.1" stroke="#abb0b4" stroke-opacity=".75" stroke-width="3.2" stroke-linecap="round" fill="none" filter="url(#bl)"/><path d="M25.3 -2.4Q61.8 -8.4 85.3 -4.3M25.3 2.4Q61.8 8.4 85.3 4.3" stroke="#62676c" stroke-opacity=".6" stroke-width="3.4" fill="none" filter="url(#bl)"/><path d="M25.3 -2.4Q61.8 -8.4 85.3 -4.3M25.3 2.4Q61.8 8.4 85.3 4.3" stroke="#33383d" stroke-opacity=".75" stroke-width=".9" fill="none"/></g><g transform="rotate(-270.0)"><path d="M18.0 0C23.8 -8.9 45.7 -17.8 66.2 -17.8C82.2 -17.8 91.0 -11.0 91.0 0C91.0 11.0 82.2 17.8 66.2 17.8C45.7 17.8 23.8 8.9 18.0 0Z" fill="#93989c" stroke="#272c32" stroke-width="1.4"/><path d="M34.1 -6.9Q61.8 -17.3 76.5 -11.1M34.1 0.0Q61.8 0.0 82.2 0.0M34.1 6.9Q61.8 17.3 76.5 11.1" stroke="#abb0b4" stroke-opacity=".75" stroke-width="3.2" stroke-linecap="round" fill="none" filter="url(#bl)"/><path d="M25.3 -2.4Q61.8 -8.4 85.3 -4.3M25.3 2.4Q61.8 8.4 85.3 4.3" stroke="#62676c" stroke-opacity=".6" stroke-width="3.4" fill="none" filter="url(#bl)"/><path d="M25.3 -2.4Q61.8 -8.4 85.3 -4.3M25.3 2.4Q61.8 8.4 85.3 4.3" stroke="#33383d" stroke-opacity=".75" stroke-width=".9" fill="none"/></g><g transform="rotate(-330.0)"><path d="M18.0 0C23.8 -8.9 45.7 -17.8 66.2 -17.8C82.2 -17.8 91.0 -11.0 91.0 0C91.0 11.0 82.2 17.8 66.2 17.8C45.7 17.8 23.8 8.9 18.0 0Z" fill="#93989c" stroke="#272c32" stroke-width="1.4"/><path d="M34.1 -6.9Q61.8 -17.3 76.5 -11.1M34.1 0.0Q61.8 0.0 82.2 0.0M34.1 6.9Q61.8 17.3 76.5 11.1" stroke="#abb0b4" stroke-opacity=".75" stroke-width="3.2" stroke-linecap="round" fill="none" filter="url(#bl)"/><path d="M25.3 -2.4Q61.8 -8.4 85.3 -4.3M25.3 2.4Q61.8 8.4 85.3 4.3" stroke="#62676c" stroke-opacity=".6" stroke-width="3.4" fill="none" filter="url(#bl)"/><path d="M25.3 -2.4Q61.8 -8.4 85.3 -4.3M25.3 2.4Q61.8 8.4 85.3 4.3" stroke="#33383d" stroke-opacity=".75" stroke-width=".9" fill="none"/></g><g transform="rotate(-390.0)"><path d="M18.0 0C23.8 -8.9 45.7 -17.8 66.2 -17.8C82.2 -17.8 91.0 -11.0 91.0 0C91.0 11.0 82.2 17.8 66.2 17.8C45.7 17.8 23.8 8.9 18.0 0Z" fill="#93989c" stroke="#272c32" stroke-width="1.4"/><path d="M34.1 -6.9Q61.8 -17.3 76.5 -11.1M34.1 0.0Q61.8 0.0 82.2 0.0M34.1 6.9Q61.8 17.3 76.5 11.1" stroke="#abb0b4" stroke-opacity=".75" stroke-width="3.2" stroke-linecap="round" fill="none" filter="url(#bl)"/><path d="M25.3 -2.4Q61.8 -8.4 85.3 -4.3M25.3 2.4Q61.8 8.4 85.3 4.3" stroke="#62676c" stroke-opacity=".6" stroke-width="3.4" fill="none" filter="url(#bl)"/><path d="M25.3 -2.4Q61.8 -8.4 85.3 -4.3M25.3 2.4Q61.8 8.4 85.3 4.3" stroke="#33383d" stroke-opacity=".75" stroke-width=".9" fill="none"/></g><g transform="rotate(-60.0)"><path d="M12.0 0C17.4 -8.6 37.6 -17.2 56.6 -17.2C71.4 -17.2 79.5 -10.7 79.5 0C79.5 10.7 71.4 17.2 56.6 17.2C37.6 17.2 17.4 8.6 12.0 0Z" fill="#93989c" stroke="#272c32" stroke-width="1.4"/><path d="M26.9 -6.7Q52.5 -16.8 66.1 -10.8M26.9 0.0Q52.5 0.0 71.4 0.0M26.9 6.7Q52.5 16.8 66.1 10.8" stroke="#abb0b4" stroke-opacity=".75" stroke-width="3.2" stroke-linecap="round" fill="none" filter="url(#bl)"/><path d="M18.8 -2.3Q52.5 -8.2 74.3 -4.2M18.8 2.3Q52.5 8.2 74.3 4.2" stroke="#62676c" stroke-opacity=".6" stroke-width="3.4" fill="none" filter="url(#bl)"/><path d="M18.8 -2.3Q52.5 -8.2 74.3 -4.2M18.8 2.3Q52.5 8.2 74.3 4.2" stroke="#33383d" stroke-opacity=".75" stroke-width=".9" fill="none"/></g><g transform="rotate(-120.0)"><path d="M12.0 0C17.4 -8.6 37.6 -17.2 56.6 -17.2C71.4 -17.2 79.5 -10.7 79.5 0C79.5 10.7 71.4 17.2 56.6 17.2C37.6 17.2 17.4 8.6 12.0 0Z" fill="#93989c" stroke="#272c32" stroke-width="1.4"/><path d="M26.9 -6.7Q52.5 -16.8 66.1 -10.8M26.9 0.0Q52.5 0.0 71.4 0.0M26.9 6.7Q52.5 16.8 66.1 10.8" stroke="#abb0b4" stroke-opacity=".75" stroke-width="3.2" stroke-linecap="round" fill="none" filter="url(#bl)"/><path d="M18.8 -2.3Q52.5 -8.2 74.3 -4.2M18.8 2.3Q52.5 8.2 74.3 4.2" stroke="#62676c" stroke-opacity=".6" stroke-width="3.4" fill="none" filter="url(#bl)"/><path d="M18.8 -2.3Q52.5 -8.2 74.3 -4.2M18.8 2.3Q52.5 8.2 74.3 4.2" stroke="#33383d" stroke-opacity=".75" stroke-width=".9" fill="none"/></g><g transform="rotate(-180.0)"><path d="M12.0 0C17.4 -8.6 37.6 -17.2 56.6 -17.2C71.4 -17.2 79.5 -10.7 79.5 0C79.5 10.7 71.4 17.2 56.6 17.2C37.6 17.2 17.4 8.6 12.0 0Z" fill="#93989c" stroke="#272c32" stroke-width="1.4"/><path d="M26.9 -6.7Q52.5 -16.8 66.1 -10.8M26.9 0.0Q52.5 0.0 71.4 0.0M26.9 6.7Q52.5 16.8 66.1 10.8" stroke="#abb0b4" stroke-opacity=".75" stroke-width="3.2" stroke-linecap="round" fill="none" filter="url(#bl)"/><path d="M18.8 -2.3Q52.5 -8.2 74.3 -4.2M18.8 2.3Q52.5 8.2 74.3 4.2" stroke="#62676c" stroke-opacity=".6" stroke-width="3.4" fill="none" filter="url(#bl)"/><path d="M18.8 -2.3Q52.5 -8.2 74.3 -4.2M18.8 2.3Q52.5 8.2 74.3 4.2" stroke="#33383d" stroke-opacity=".75" stroke-width=".9" fill="none"/></g><g transform="rotate(-240.0)"><path d="M12.0 0C17.4 -8.6 37.6 -17.2 56.6 -17.2C71.4 -17.2 79.5 -10.7 79.5 0C79.5 10.7 71.4 17.2 56.6 17.2C37.6 17.2 17.4 8.6 12.0 0Z" fill="#93989c" stroke="#272c32" stroke-width="1.4"/><path d="M26.9 -6.7Q52.5 -16.8 66.1 -10.8M26.9 0.0Q52.5 0.0 71.4 0.0M26.9 6.7Q52.5 16.8 66.1 10.8" stroke="#abb0b4" stroke-opacity=".75" stroke-width="3.2" stroke-linecap="round" fill="none" filter="url(#bl)"/><path d="M18.8 -2.3Q52.5 -8.2 74.3 -4.2M18.8 2.3Q52.5 8.2 74.3 4.2" stroke="#62676c" stroke-opacity=".6" stroke-width="3.4" fill="none" filter="url(#bl)"/><path d="M18.8 -2.3Q52.5 -8.2 74.3 -4.2M18.8 2.3Q52.5 8.2 74.3 4.2" stroke="#33383d" stroke-opacity=".75" stroke-width=".9" fill="none"/></g><g transform="rotate(-300.0)"><path d="M12.0 0C17.4 -8.6 37.6 -17.2 56.6 -17.2C71.4 -17.2 79.5 -10.7 79.5 0C79.5 10.7 71.4 17.2 56.6 17.2C37.6 17.2 17.4 8.6 12.0 0Z" fill="#93989c" stroke="#272c32" stroke-width="1.4"/><path d="M26.9 -6.7Q52.5 -16.8 66.1 -10.8M26.9 0.0Q52.5 0.0 71.4 0.0M26.9 6.7Q52.5 16.8 66.1 10.8" stroke="#abb0b4" stroke-opacity=".75" stroke-width="3.2" stroke-linecap="round" fill="none" filter="url(#bl)"/><path d="M18.8 -2.3Q52.5 -8.2 74.3 -4.2M18.8 2.3Q52.5 8.2 74.3 4.2" stroke="#62676c" stroke-opacity=".6" stroke-width="3.4" fill="none" filter="url(#bl)"/><path d="M18.8 -2.3Q52.5 -8.2 74.3 -4.2M18.8 2.3Q52.5 8.2 74.3 4.2" stroke="#33383d" stroke-opacity=".75" stroke-width=".9" fill="none"/></g><g transform="rotate(-360.0)"><path d="M12.0 0C17.4 -8.6 37.6 -17.2 56.6 -17.2C71.4 -17.2 79.5 -10.7 79.5 0C79.5 10.7 71.4 17.2 56.6 17.2C37.6 17.2 17.4 8.6 12.0 0Z" fill="#93989c" stroke="#272c32" stroke-width="1.4"/><path d="M26.9 -6.7Q52.5 -16.8 66.1 -10.8M26.9 0.0Q52.5 0.0 71.4 0.0M26.9 6.7Q52.5 16.8 66.1 10.8" stroke="#abb0b4" stroke-opacity=".75" stroke-width="3.2" stroke-linecap="round" fill="none" filter="url(#bl)"/><path d="M18.8 -2.3Q52.5 -8.2 74.3 -4.2M18.8 2.3Q52.5 8.2 74.3 4.2" stroke="#62676c" stroke-opacity=".6" stroke-width="3.4" fill="none" filter="url(#bl)"/><path d="M18.8 -2.3Q52.5 -8.2 74.3 -4.2M18.8 2.3Q52.5 8.2 74.3 4.2" stroke="#33383d" stroke-opacity=".75" stroke-width=".9" fill="none"/></g><path d="M28.7 0.0L29.4 -3.1L27.4 -5.8L26.5 -8.6L24.8 -11.0L21.4 -12.4L20.1 -14.6L21.3 -19.2L18.5 -20.6L16.7 -23.0L15.7 -27.2L11.9 -26.7L9.2 -28.3L5.7 -26.8L2.8 -27.0L0.0 -25.1L-2.8 -27.0L-6.0 -28.2L-8.8 -27.2L-12.3 -27.6L-15.1 -26.2L-16.3 -22.5L-19.7 -21.9L-20.7 -18.6L-21.0 -15.2L-21.3 -12.3L-25.5 -11.4L-26.0 -8.5L-28.7 -6.1L-30.6 -3.2L-30.5 -0.0L-30.7 3.2L-27.5 5.9L-27.2 8.8L-24.2 10.8L-24.2 13.9L-22.7 16.5L-19.3 17.4L-18.2 20.2L-16.7 22.9L-15.7 27.2L-11.8 26.6L-9.0 27.6L-5.6 26.2L-2.8 26.5L-0.0 25.9L2.7 26.0L5.8 27.2L8.9 27.4L12.5 28.2L15.2 26.3L18.2 25.0L19.9 22.1L21.7 19.6L22.1 16.0L21.7 12.6L25.5 11.4L27.7 9.0L29.3 6.2L29.4 3.1Z" fill="#40454b" stroke="#5a5f65" stroke-width="1.6" stroke-dasharray="1.6 1.6"/><path d="M-18.3 -0.2h0M-15.5 -0.7h0M-13.5 4.0h0M-15.8 5.7h0M4.4 -22.4h0M3.7 -25.2h0M8.2 -27.6h0M10.1 -25.5h0M7.1 -21.3h0M-17.1 -12.4h0M-17.3 -17.5h0M-14.5 -18.3h0M-12.1 -13.7h0M-14.2 -11.9h0M19.1 -4.7h0M21.9 -3.8h0M21.4 1.3h0M18.6 1.7h0M4.6 19.0h0M7.0 17.4h0M10.8 21.0h0M9.3 23.4h0M4.4 21.9h0M3.5 11.7h0M2.0 16.6h0M-0.9 16.4h0M-1.7 11.3h0M1.0 10.3h0M-11.1 -29.5h0M-9.4 -27.2h0M-12.6 -23.2h0M-15.2 -24.5h0M-1.0 23.1h0M-1.0 25.9h0M-6.0 27.1h0M-7.3 24.5h0M-3.2 21.3h0M9.0 -13.9h0M9.1 -8.7h0M6.3 -8.1h0M4.0 -12.7h0M6.2 -14.5h0M-21.6 -11.7h0M15.5 21.0h0M28.3 0.2h0M-26.1 5.6h0M21.5 -10.6h0M-8.0 -2.3h0M-0.2 -3.9h0M12.6 -14.9h0M6.3 7.4h0M-9.5 11.6h0M-11.5 -7.7h0M-8.0 15.3h0M13.5 -10.8h0M-24.6 -10.1h0M-23.4 1.6h0M19.7 -17.9h0M-9.9 -21.0h0M-14.4 -8.7h0M28.7 -3.8h0M-17.3 13.8h0M0.5 -12.0h0M14.1 -18.6h0M25.8 6.3h0M16.4 -8.4h0M17.8 18.2h0M8.2 4.8h0M-20.0 -7.2h0M6.8 -3.9h0M16.9 -13.5h0M-2.8 -21.3h0M-22.1 15.4h0M-7.0 -7.5h0M-21.0 10.7h0M14.8 9.7h0M-16.7 10.7h0M20.6 4.7h0M-9.0 -10.1h0M-5.2 12.9h0M9.9 8.6h0M14.7 26.0h0M7.2 -18.2h0M22.8 8.7h0M-3.2 -10.6h0M12.4 14.3h0M-6.4 2.3h0M14.0 17.8h0M25.2 -10.0h0M-22.1 -2.3h0M-27.6 -5.5h0M-25.0 -1.5h0M16.3 5.8h0M-10.5 -4.0h0M22.0 -7.3h0M-2.8 1.4h0M-14.4 25.3h0M18.8 21.1h0M21.6 16.5h0M-0.2 -7.2h0M21.5 11.9h0M-8.3 8.5h0M14.5 -6.0h0M1.1 19.7h0M-5.0 17.1h0M29.1 6.2h0M13.5 1.2h0M-5.8 -27.6h0M13.1 -22.4h0M-3.5 -1.6h0M3.6 -1.5h0M-3.7 8.3h0M-12.8 13.3h0M-6.5 -19.7h0M-23.2 8.5h0M-8.9 18.5h0M-3.4 -7.4h0M1.3 -23.0h0M11.1 -19.1h0M8.3 27.2h0M17.8 -21.0h0M7.6 -0.2h0M20.0 -13.5h0M-10.5 -0.0h0" stroke="#a0a5aa" stroke-width="2.8" stroke-linecap="round" fill="none"/><path d="M-19.7 2.3h0M-13.4 1.1h0M-18.6 4.9h0M5.4 -27.5h0M9.6 -22.6h0M-18.4 -14.9h0M-12.2 -16.6h0M16.8 -3.1h0M22.9 -1.1h0M16.5 -0.2h0M9.7 18.3h0M6.5 23.9h0M3.9 14.5h0M-2.5 14.1h0M-14.0 -29.5h0M-10.0 -24.4h0M-15.8 -27.3h0M-3.2 27.7h0M-6.0 21.9h0M10.3 -11.3h0M4.0 -9.8h0M-18.0 18.6h0M-10.8 21.4h0M-6.2 6.2h0M5.1 3.3h0M0.6 2.7h0M-3.3 5.2h0M-29.1 3.8h0M-3.6 -15.6h0M-13.9 17.3h0M-5.6 -4.6h0M19.6 9.1h0M-12.7 9.1h0M16.9 23.7h0M-9.0 -17.5h0M11.6 -4.5h0M9.4 13.1h0M-5.5 -23.6h0M0.4 -1.0h0M-29.3 -1.2h0M-9.3 4.5h0M9.8 2.0h0M12.6 5.4h0M-9.1 -13.3h0M3.5 -16.9h0M-1.2 -24.9h0M3.1 -4.6h0M25.3 2.0h0M0.5 -18.6h0M-24.3 -6.3h0M16.1 -24.9h0M1.3 6.7h0M16.9 13.1h0M-11.0 26.5h0M-15.4 21.6h0M25.3 11.1h0M-16.6 -4.6h0M6.8 11.2h0M-18.1 -21.5h0M-0.2 -15.4h0M-6.2 -11.1h0M2.2 25.4h0" stroke="#898e94" stroke-width="2.7" stroke-linecap="round" fill="none"/><path d="M-16.4 2.4h0M6.9 -24.6h0M-15.1 -15.1h0M19.6 -1.4h0M7.5 20.7h0M0.8 13.6h0M-12.6 -26.5h0M-4.0 24.5h0M7.0 -11.3h0" stroke="#5d6268" stroke-width="2.2" stroke-linecap="round" fill="none"/><path d="M-16.1 2.1h0M-14.8 -15.4h0M7.8 20.4h0M-12.3 -26.8h0M7.3 -11.6h0" stroke="#d5d8db" stroke-width="1" stroke-linecap="round" fill="none"/></g><g transform="translate(658.6 721.7)"><g transform="rotate(-90.0)"><path d="M18.0 0C23.8 -8.9 45.7 -17.8 66.2 -17.8C82.2 -17.8 91.0 -11.0 91.0 0C91.0 11.0 82.2 17.8 66.2 17.8C45.7 17.8 23.8 8.9 18.0 0Z" fill="#93989c" stroke="#272c32" stroke-width="1.4"/><path d="M34.1 -6.9Q61.8 -17.3 76.5 -11.1M34.1 0.0Q61.8 0.0 82.2 0.0M34.1 6.9Q61.8 17.3 76.5 11.1" stroke="#abb0b4" stroke-opacity=".75" stroke-width="3.2" stroke-linecap="round" fill="none" filter="url(#bl)"/><path d="M25.3 -2.4Q61.8 -8.4 85.3 -4.3M25.3 2.4Q61.8 8.4 85.3 4.3" stroke="#62676c" stroke-opacity=".6" stroke-width="3.4" fill="none" filter="url(#bl)"/><path d="M25.3 -2.4Q61.8 -8.4 85.3 -4.3M25.3 2.4Q61.8 8.4 85.3 4.3" stroke="#33383d" stroke-opacity=".75" stroke-width=".9" fill="none"/></g><g transform="rotate(-150.0)"><path d="M18.0 0C23.8 -8.9 45.7 -17.8 66.2 -17.8C82.2 -17.8 91.0 -11.0 91.0 0C91.0 11.0 82.2 17.8 66.2 17.8C45.7 17.8 23.8 8.9 18.0 0Z" fill="#93989c" stroke="#272c32" stroke-width="1.4"/><path d="M34.1 -6.9Q61.8 -17.3 76.5 -11.1M34.1 0.0Q61.8 0.0 82.2 0.0M34.1 6.9Q61.8 17.3 76.5 11.1" stroke="#abb0b4" stroke-opacity=".75" stroke-width="3.2" stroke-linecap="round" fill="none" filter="url(#bl)"/><path d="M25.3 -2.4Q61.8 -8.4 85.3 -4.3M25.3 2.4Q61.8 8.4 85.3 4.3" stroke="#62676c" stroke-opacity=".6" stroke-width="3.4" fill="none" filter="url(#bl)"/><path d="M25.3 -2.4Q61.8 -8.4 85.3 -4.3M25.3 2.4Q61.8 8.4 85.3 4.3" stroke="#33383d" stroke-opacity=".75" stroke-width=".9" fill="none"/></g><g transform="rotate(-210.0)"><path d="M18.0 0C23.8 -8.9 45.7 -17.8 66.2 -17.8C82.2 -17.8 91.0 -11.0 91.0 0C91.0 11.0 82.2 17.8 66.2 17.8C45.7 17.8 23.8 8.9 18.0 0Z" fill="#93989c" stroke="#272c32" stroke-width="1.4"/><path d="M34.1 -6.9Q61.8 -17.3 76.5 -11.1M34.1 0.0Q61.8 0.0 82.2 0.0M34.1 6.9Q61.8 17.3 76.5 11.1" stroke="#abb0b4" stroke-opacity=".75" stroke-width="3.2" stroke-linecap="round" fill="none" filter="url(#bl)"/><path d="M25.3 -2.4Q61.8 -8.4 85.3 -4.3M25.3 2.4Q61.8 8.4 85.3 4.3" stroke="#62676c" stroke-opacity=".6" stroke-width="3.4" fill="none" filter="url(#bl)"/><path d="M25.3 -2.4Q61.8 -8.4 85.3 -4.3M25.3 2.4Q61.8 8.4 85.3 4.3" stroke="#33383d" stroke-opacity=".75" stroke-width=".9" fill="none"/></g><g transform="rotate(-270.0)"><path d="M18.0 0C23.8 -8.9 45.7 -17.8 66.2 -17.8C82.2 -17.8 91.0 -11.0 91.0 0C91.0 11.0 82.2 17.8 66.2 17.8C45.7 17.8 23.8 8.9 18.0 0Z" fill="#93989c" stroke="#272c32" stroke-width="1.4"/><path d="M34.1 -6.9Q61.8 -17.3 76.5 -11.1M34.1 0.0Q61.8 0.0 82.2 0.0M34.1 6.9Q61.8 17.3 76.5 11.1" stroke="#abb0b4" stroke-opacity=".75" stroke-width="3.2" stroke-linecap="round" fill="none" filter="url(#bl)"/><path d="M25.3 -2.4Q61.8 -8.4 85.3 -4.3M25.3 2.4Q61.8 8.4 85.3 4.3" stroke="#62676c" stroke-opacity=".6" stroke-width="3.4" fill="none" filter="url(#bl)"/><path d="M25.3 -2.4Q61.8 -8.4 85.3 -4.3M25.3 2.4Q61.8 8.4 85.3 4.3" stroke="#33383d" stroke-opacity=".75" stroke-width=".9" fill="none"/></g><g transform="rotate(-330.0)"><path d="M18.0 0C23.8 -8.9 45.7 -17.8 66.2 -17.8C82.2 -17.8 91.0 -11.0 91.0 0C91.0 11.0 82.2 17.8 66.2 17.8C45.7 17.8 23.8 8.9 18.0 0Z" fill="#93989c" stroke="#272c32" stroke-width="1.4"/><path d="M34.1 -6.9Q61.8 -17.3 76.5 -11.1M34.1 0.0Q61.8 0.0 82.2 0.0M34.1 6.9Q61.8 17.3 76.5 11.1" stroke="#abb0b4" stroke-opacity=".75" stroke-width="3.2" stroke-linecap="round" fill="none" filter="url(#bl)"/><path d="M25.3 -2.4Q61.8 -8.4 85.3 -4.3M25.3 2.4Q61.8 8.4 85.3 4.3" stroke="#62676c" stroke-opacity=".6" stroke-width="3.4" fill="none" filter="url(#bl)"/><path d="M25.3 -2.4Q61.8 -8.4 85.3 -4.3M25.3 2.4Q61.8 8.4 85.3 4.3" stroke="#33383d" stroke-opacity=".75" stroke-width=".9" fill="none"/></g><g transform="rotate(-390.0)"><path d="M18.0 0C23.8 -8.9 45.7 -17.8 66.2 -17.8C82.2 -17.8 91.0 -11.0 91.0 0C91.0 11.0 82.2 17.8 66.2 17.8C45.7 17.8 23.8 8.9 18.0 0Z" fill="#93989c" stroke="#272c32" stroke-width="1.4"/><path d="M34.1 -6.9Q61.8 -17.3 76.5 -11.1M34.1 0.0Q61.8 0.0 82.2 0.0M34.1 6.9Q61.8 17.3 76.5 11.1" stroke="#abb0b4" stroke-opacity=".75" stroke-width="3.2" stroke-linecap="round" fill="none" filter="url(#bl)"/><path d="M25.3 -2.4Q61.8 -8.4 85.3 -4.3M25.3 2.4Q61.8 8.4 85.3 4.3" stroke="#62676c" stroke-opacity=".6" stroke-width="3.4" fill="none" filter="url(#bl)"/><path d="M25.3 -2.4Q61.8 -8.4 85.3 -4.3M25.3 2.4Q61.8 8.4 85.3 4.3" stroke="#33383d" stroke-opacity=".75" stroke-width=".9" fill="none"/></g><g transform="rotate(-60.0)"><path d="M12.0 0C17.4 -8.6 37.6 -17.2 56.6 -17.2C71.4 -17.2 79.5 -10.7 79.5 0C79.5 10.7 71.4 17.2 56.6 17.2C37.6 17.2 17.4 8.6 12.0 0Z" fill="#93989c" stroke="#272c32" stroke-width="1.4"/><path d="M26.9 -6.7Q52.5 -16.8 66.1 -10.8M26.9 0.0Q52.5 0.0 71.4 0.0M26.9 6.7Q52.5 16.8 66.1 10.8" stroke="#abb0b4" stroke-opacity=".75" stroke-width="3.2" stroke-linecap="round" fill="none" filter="url(#bl)"/><path d="M18.8 -2.3Q52.5 -8.2 74.3 -4.2M18.8 2.3Q52.5 8.2 74.3 4.2" stroke="#62676c" stroke-opacity=".6" stroke-width="3.4" fill="none" filter="url(#bl)"/><path d="M18.8 -2.3Q52.5 -8.2 74.3 -4.2M18.8 2.3Q52.5 8.2 74.3 4.2" stroke="#33383d" stroke-opacity=".75" stroke-width=".9" fill="none"/></g><g transform="rotate(-120.0)"><path d="M12.0 0C17.4 -8.6 37.6 -17.2 56.6 -17.2C71.4 -17.2 79.5 -10.7 79.5 0C79.5 10.7 71.4 17.2 56.6 17.2C37.6 17.2 17.4 8.6 12.0 0Z" fill="#93989c" stroke="#272c32" stroke-width="1.4"/><path d="M26.9 -6.7Q52.5 -16.8 66.1 -10.8M26.9 0.0Q52.5 0.0 71.4 0.0M26.9 6.7Q52.5 16.8 66.1 10.8" stroke="#abb0b4" stroke-opacity=".75" stroke-width="3.2" stroke-linecap="round" fill="none" filter="url(#bl)"/><path d="M18.8 -2.3Q52.5 -8.2 74.3 -4.2M18.8 2.3Q52.5 8.2 74.3 4.2" stroke="#62676c" stroke-opacity=".6" stroke-width="3.4" fill="none" filter="url(#bl)"/><path d="M18.8 -2.3Q52.5 -8.2 74.3 -4.2M18.8 2.3Q52.5 8.2 74.3 4.2" stroke="#33383d" stroke-opacity=".75" stroke-width=".9" fill="none"/></g><g transform="rotate(-180.0)"><path d="M12.0 0C17.4 -8.6 37.6 -17.2 56.6 -17.2C71.4 -17.2 79.5 -10.7 79.5 0C79.5 10.7 71.4 17.2 56.6 17.2C37.6 17.2 17.4 8.6 12.0 0Z" fill="#93989c" stroke="#272c32" stroke-width="1.4"/><path d="M26.9 -6.7Q52.5 -16.8 66.1 -10.8M26.9 0.0Q52.5 0.0 71.4 0.0M26.9 6.7Q52.5 16.8 66.1 10.8" stroke="#abb0b4" stroke-opacity=".75" stroke-width="3.2" stroke-linecap="round" fill="none" filter="url(#bl)"/><path d="M18.8 -2.3Q52.5 -8.2 74.3 -4.2M18.8 2.3Q52.5 8.2 74.3 4.2" stroke="#62676c" stroke-opacity=".6" stroke-width="3.4" fill="none" filter="url(#bl)"/><path d="M18.8 -2.3Q52.5 -8.2 74.3 -4.2M18.8 2.3Q52.5 8.2 74.3 4.2" stroke="#33383d" stroke-opacity=".75" stroke-width=".9" fill="none"/></g><g transform="rotate(-240.0)"><path d="M12.0 0C17.4 -8.6 37.6 -17.2 56.6 -17.2C71.4 -17.2 79.5 -10.7 79.5 0C79.5 10.7 71.4 17.2 56.6 17.2C37.6 17.2 17.4 8.6 12.0 0Z" fill="#93989c" stroke="#272c32" stroke-width="1.4"/><path d="M26.9 -6.7Q52.5 -16.8 66.1 -10.8M26.9 0.0Q52.5 0.0 71.4 0.0M26.9 6.7Q52.5 16.8 66.1 10.8" stroke="#abb0b4" stroke-opacity=".75" stroke-width="3.2" stroke-linecap="round" fill="none" filter="url(#bl)"/><path d="M18.8 -2.3Q52.5 -8.2 74.3 -4.2M18.8 2.3Q52.5 8.2 74.3 4.2" stroke="#62676c" stroke-opacity=".6" stroke-width="3.4" fill="none" filter="url(#bl)"/><path d="M18.8 -2.3Q52.5 -8.2 74.3 -4.2M18.8 2.3Q52.5 8.2 74.3 4.2" stroke="#33383d" stroke-opacity=".75" stroke-width=".9" fill="none"/></g><g transform="rotate(-300.0)"><path d="M12.0 0C17.4 -8.6 37.6 -17.2 56.6 -17.2C71.4 -17.2 79.5 -10.7 79.5 0C79.5 10.7 71.4 17.2 56.6 17.2C37.6 17.2 17.4 8.6 12.0 0Z" fill="#93989c" stroke="#272c32" stroke-width="1.4"/><path d="M26.9 -6.7Q52.5 -16.8 66.1 -10.8M26.9 0.0Q52.5 0.0 71.4 0.0M26.9 6.7Q52.5 16.8 66.1 10.8" stroke="#abb0b4" stroke-opacity=".75" stroke-width="3.2" stroke-linecap="round" fill="none" filter="url(#bl)"/><path d="M18.8 -2.3Q52.5 -8.2 74.3 -4.2M18.8 2.3Q52.5 8.2 74.3 4.2" stroke="#62676c" stroke-opacity=".6" stroke-width="3.4" fill="none" filter="url(#bl)"/><path d="M18.8 -2.3Q52.5 -8.2 74.3 -4.2M18.8 2.3Q52.5 8.2 74.3 4.2" stroke="#33383d" stroke-opacity=".75" stroke-width=".9" fill="none"/></g><g transform="rotate(-360.0)"><path d="M12.0 0C17.4 -8.6 37.6 -17.2 56.6 -17.2C71.4 -17.2 79.5 -10.7 79.5 0C79.5 10.7 71.4 17.2 56.6 17.2C37.6 17.2 17.4 8.6 12.0 0Z" fill="#93989c" stroke="#272c32" stroke-width="1.4"/><path d="M26.9 -6.7Q52.5 -16.8 66.1 -10.8M26.9 0.0Q52.5 0.0 71.4 0.0M26.9 6.7Q52.5 16.8 66.1 10.8" stroke="#abb0b4" stroke-opacity=".75" stroke-width="3.2" stroke-linecap="round" fill="none" filter="url(#bl)"/><path d="M18.8 -2.3Q52.5 -8.2 74.3 -4.2M18.8 2.3Q52.5 8.2 74.3 4.2" stroke="#62676c" stroke-opacity=".6" stroke-width="3.4" fill="none" filter="url(#bl)"/><path d="M18.8 -2.3Q52.5 -8.2 74.3 -4.2M18.8 2.3Q52.5 8.2 74.3 4.2" stroke="#33383d" stroke-opacity=".75" stroke-width=".9" fill="none"/></g><path d="M30.1 0.0L30.1 -3.2L28.9 -6.2L27.7 -9.0L25.1 -11.2L24.1 -13.9L20.2 -14.7L20.3 -18.3L20.2 -22.4L17.6 -24.2L15.6 -27.0L11.4 -25.5L8.8 -27.0L5.5 -26.0L2.8 -26.7L0.0 -26.6L-2.6 -24.8L-5.5 -25.9L-8.6 -26.4L-12.6 -28.2L-15.3 -26.5L-16.5 -22.8L-19.8 -22.0L-19.5 -17.5L-21.9 -15.9L-21.6 -12.5L-22.7 -10.1L-27.4 -8.9L-26.9 -5.7L-28.2 -3.0L-31.4 -0.0L-30.5 3.2L-27.2 5.8L-27.7 9.0L-24.5 10.9L-23.3 13.5L-20.7 15.0L-21.6 19.5L-19.5 21.7L-18.2 25.1L-15.5 26.9L-11.6 26.2L-8.7 26.6L-5.5 25.7L-2.7 25.2L-0.0 24.8L2.7 25.8L5.8 27.2L8.3 25.4L12.2 27.4L14.5 25.2L16.9 23.2L19.9 22.0L20.4 18.3L21.0 15.3L22.7 13.1L25.0 11.1L24.6 8.0L29.6 6.3L27.5 2.9Z" fill="#40454b" stroke="#5a5f65" stroke-width="1.6" stroke-dasharray="1.6 1.6"/><path d="M8.9 15.7h0M6.1 16.3h0M4.0 11.6h0M6.3 9.8h0M12.7 20.1h0M15.5 20.1h0M16.7 25.1h0M14.1 26.4h0M10.9 22.4h0M-4.3 -11.7h0M-4.9 -16.8h0M-2.2 -17.8h0M0.6 -13.4h0M-1.4 -11.4h0M-1.1 4.7h0M-0.7 1.9h0M4.5 1.5h0M5.3 4.2h0M-12.8 19.8h0M-11.0 22.0h0M-14.1 26.1h0M-16.8 24.9h0M-15.7 19.8h0M12.4 -18.9h0M16.0 -22.6h0M18.5 -21.1h0M16.8 -16.2h0M14.0 -16.5h0M-21.7 -15.4h0M-21.2 -18.2h0M-16.0 -18.4h0M-15.3 -15.6h0M20.3 -11.2h0M21.2 -13.9h0M26.4 -13.4h0M26.7 -10.5h0M21.8 -8.8h0M-13.8 2.2h0M-9.6 5.1h0M-10.7 7.8h0M-15.7 7.0h0M-15.9 4.1h0M14.6 16.1h0M25.5 2.1h0M-22.3 10.1h0M1.4 -5.6h0M-5.5 -25.1h0M-1.0 18.4h0M-4.7 -19.9h0M-3.5 -1.1h0M-13.5 -5.7h0M-22.4 -7.2h0M-10.6 -23.2h0M-14.7 15.3h0M-1.5 14.6h0M9.9 -2.5h0M-2.0 10.3h0M-5.5 6.5h0M8.6 -16.0h0M10.8 6.9h0M4.9 -15.0h0M-25.6 2.1h0M8.1 -7.7h0M-22.7 4.9h0M-8.0 25.2h0M-2.1 -21.4h0M-9.2 13.2h0M-15.9 -2.9h0M-11.1 -19.7h0M19.0 15.8h0M8.9 -23.5h0M13.2 -25.2h0M-10.0 -6.7h0M23.3 6.2h0M-26.6 -5.9h0M-12.2 -2.2h0M29.5 0.7h0M1.3 -23.5h0M2.8 21.6h0M-9.1 -9.8h0M-3.0 -4.1h0M-19.0 3.1h0M-19.2 16.1h0M-7.9 -1.7h0M9.8 1.6h0M15.3 11.5h0M23.8 10.0h0M5.7 -18.0h0M-24.2 -1.6h0M4.0 -11.7h0M-9.5 16.9h0M28.5 -3.6h0M-0.6 -26.1h0M-26.0 -9.2h0M8.0 25.0h0M4.4 -25.4h0M1.1 -20.4h0M-18.9 10.4h0M-18.1 -5.8h0M-19.7 -10.0h0M-6.5 -4.5h0M-4.0 12.6h0M-13.8 -26.2h0M14.2 -8.9h0M16.0 1.4h0M23.7 -1.7h0M-19.0 6.8h0M-5.7 -7.6h0M-22.9 13.4h0M23.5 -4.9h0M20.4 0.7h0M8.6 18.8h0M22.3 3.3h0M4.7 -8.1h0M-10.5 -27.0h0M22.5 12.9h0M5.4 -22.6h0M13.1 4.8h0M13.5 8.9h0M18.5 19.1h0" stroke="#a0a5aa" stroke-width="2.8" stroke-linecap="round" fill="none"/><path d="M10.2 13.1h0M3.9 14.4h0M9.0 10.5h0M17.3 22.3h0M11.5 25.2h0M-5.8 -14.1h0M0.2 -16.3h0M0.8 6.8h0M1.8 0.4h0M3.7 6.6h0M-11.6 24.8h0M-17.4 22.1h0M13.3 -21.6h0M18.8 -18.3h0M-19.8 -13.2h0M-18.6 -19.5h0M-17.0 -13.3h0M23.9 -14.9h0M24.7 -8.5h0M-11.0 2.6h0M-13.4 8.6h0M17.1 -7.8h0M-12.2 -10.6h0M19.4 -2.9h0M27.0 6.9h0M13.5 -1.6h0M7.2 -0.4h0M11.9 -12.6h0M18.8 7.8h0M-21.6 -3.7h0M-28.8 -2.0h0M-5.6 17.0h0M3.3 25.0h0M6.8 -3.5h0M16.5 -4.4h0M-1.3 24.0h0M-9.6 -15.1h0M-7.7 20.8h0M-28.7 2.3h0M5.4 19.4h0M19.5 12.2h0M-16.6 -8.6h0M11.9 -6.0h0M-14.5 11.6h0M-6.6 2.0h0M-14.7 -22.9h0M-24.6 7.6h0M-4.4 21.7h0M28.4 -6.8h0M15.8 6.5h0M3.6 -3.1h0M7.1 -12.4h0M0.8 12.0h0M-7.6 -20.9h0M18.0 3.9h0M-19.3 -1.5h0M16.2 -11.7h0M-7.1 9.2h0M-26.8 5.0h0M-0.2 -2.5h0M-7.8 -17.8h0" stroke="#898e94" stroke-width="2.7" stroke-linecap="round" fill="none"/><path d="M6.9 13.1h0M14.1 23.1h0M-2.6 -14.5h0M2.0 3.7h0M-14.2 22.8h0M15.7 -19.3h0M-18.5 -16.2h0M23.6 -11.6h0M-12.9 5.3h0" stroke="#5d6268" stroke-width="2.2" stroke-linecap="round" fill="none"/><path d="M7.2 12.8h0M-2.3 -14.8h0M-13.9 22.5h0M-18.2 -16.5h0M-12.6 5.0h0" stroke="#d5d8db" stroke-width="1" stroke-linecap="round" fill="none"/></g></svg>
<svg class="b" style="left:1400px;top:820px;" width="130" height="130" viewBox="0 0 130 130"><path d="M18.5 95V12.5" stroke="#6fcf3f" stroke-width="1.2" fill="none"/><path d="M18 94.6L101.5 93" stroke="#c0283c" stroke-width="1.3" fill="none"/><path d="M18.5 95l3.5 14.5" stroke="#3c64c8" stroke-width="1.2" fill="none"/><text x="17" y="16" font-size="12" fill="#8fd0a0" font-family="Liberation Sans, sans-serif">Y</text><text x="110" y="106" font-size="13" fill="#c03060" font-family="Liberation Sans, sans-serif">X</text><text x="21.5" y="124" font-size="12" fill="#4470c8" font-family="Liberation Sans, sans-serif">Z</text></svg>
<svg class="b" style="left:0px;top:1026px;" width="1530" height="14" viewBox="0 0 1530 14"><path d="M0 0.5H1530M0.5 0v12M7.5 0v4M14.5 0v4M21.5 0v4M28.5 0v4M34.5 0v8M41.5 0v4M48.5 0v4M55.5 0v4M62.5 0v4M68.5 0v12M75.5 0v4M82.5 0v4M89.5 0v4M96.5 0v4M102.5 0v8M109.5 0v4M116.5 0v4M123.5 0v4M130.5 0v4M137.5 0v12M143.5 0v4M150.5 0v4M157.5 0v4M164.5 0v4M171.5 0v8M177.5 0v4M184.5 0v4M191.5 0v4M198.5 0v4M205.5 0v12M211.5 0v4M218.5 0v4M225.5 0v4M232.5 0v4M239.5 0v8M246.5 0v4M252.5 0v4M259.5 0v4M266.5 0v4M273.5 0v12M280.5 0v4M286.5 0v4M293.5 0v4M300.5 0v4M307.5 0v8M314.5 0v4M320.5 0v4M327.5 0v4M334.5 0v4M341.5 0v12M348.5 0v4M355.5 0v4M361.5 0v4M368.5 0v4M375.5 0v8M382.5 0v4M389.5 0v4M395.5 0v4M402.5 0v4M409.5 0v12M416.5 0v4M423.5 0v4M429.5 0v4M436.5 0v4M443.5 0v8M450.5 0v4M457.5 0v4M464.5 0v4M470.5 0v4M477.5 0v12M484.5 0v4M491.5 0v4M498.5 0v4M504.5 0v4M511.5 0v8M518.5 0v4M525.5 0v4M532.5 0v4M538.5 0v4M545.5 0v12M552.5 0v4M559.5 0v4M566.5 0v4M573.5 0v4M579.5 0v8M586.5 0v4M593.5 0v4M600.5 0v4M607.5 0v4M613.5 0v12M620.5 0v4M627.5 0v4M634.5 0v4M641.5 0v4M647.5 0v8M654.5 0v4M661.5 0v4M668.5 0v4M675.5 0v4M682.5 0v12M688.5 0v4M695.5 0v4M702.5 0v4M709.5 0v4M716.5 0v8M722.5 0v4M729.5 0v4M736.5 0v4M743.5 0v4M750.5 0v12M756.5 0v4M763.5 0v4M770.5 0v4M777.5 0v4M784.5 0v8M791.5 0v4M797.5 0v4M804.5 0v4M811.5 0v4M818.5 0v12M825.5 0v4M831.5 0v4M838.5 0v4M845.5 0v4M852.5 0v8M859.5 0v4M865.5 0v4M872.5 0v4M879.5 0v4M886.5 0v12M893.5 0v4M900.5 0v4M906.5 0v4M913.5 0v4M920.5 0v8M927.5 0v4M934.5 0v4M940.5 0v4M947.5 0v4M954.5 0v12M961.5 0v4M968.5 0v4M974.5 0v4M981.5 0v4M988.5 0v8M995.5 0v4M1002.5 0v4M1009.5 0v4M1015.5 0v4M1022.5 0v12M1029.5 0v4M1036.5 0v4M1043.5 0v4M1049.5 0v4M1056.5 0v8M1063.5 0v4M1070.5 0v4M1077.5 0v4M1083.5 0v4M1090.5 0v12M1097.5 0v4M1104.5 0v4M1111.5 0v4M1118.5 0v4M1124.5 0v8M1131.5 0v4M1138.5 0v4M1145.5 0v4M1152.5 0v4M1158.5 0v12M1165.5 0v4M1172.5 0v4M1179.5 0v4M1186.5 0v4M1192.5 0v8M1199.5 0v4M1206.5 0v4M1213.5 0v4M1220.5 0v4M1227.5 0v12M1233.5 0v4M1240.5 0v4M1247.5 0v4M1254.5 0v4M1261.5 0v8M1267.5 0v4M1274.5 0v4M1281.5 0v4M1288.5 0v4M1295.5 0v12M1301.5 0v4M1308.5 0v4M1315.5 0v4M1322.5 0v4M1329.5 0v8M1336.5 0v4M1342.5 0v4M1349.5 0v4M1356.5 0v4M1363.5 0v12M1370.5 0v4M1376.5 0v4M1383.5 0v4M1390.5 0v4M1397.5 0v8M1404.5 0v4M1410.5 0v4M1417.5 0v4M1424.5 0v4M1431.5 0v12M1438.5 0v4M1445.5 0v4M1451.5 0v4M1458.5 0v4M1465.5 0v8M1472.5 0v4M1479.5 0v4M1485.5 0v4" stroke="#3a3a3a" stroke-width="1" fill="none" shape-rendering="crispEdges"/></svg>
<div class="t" style="left:2.0px;top:1043.0px;font-size:12px;color:#111;">0</div>
<div class="t" style="left:64.6px;top:1043.0px;font-size:12px;color:#111;">1</div>
<div class="t" style="left:132.7px;top:1043.0px;font-size:12px;color:#111;">2</div>
<div class="t" style="left:200.8px;top:1043.0px;font-size:12px;color:#111;">3</div>
<div class="t" style="left:269.0px;top:1043.0px;font-size:12px;color:#111;">4</div>
<div class="t" style="left:337.1px;top:1043.0px;font-size:12px;color:#111;">5</div>
<div class="t" style="left:405.2px;top:1043.0px;font-size:12px;color:#111;">6</div>
<div class="t" style="left:473.3px;top:1043.0px;font-size:12px;color:#111;">7</div>
<div class="t" style="left:541.5px;top:1043.0px;font-size:12px;color:#111;">8</div>
<div class="t" style="left:609.6px;top:1043.0px;font-size:12px;color:#111;">9</div>
<div class="t" style="left:674.4px;top:1043.0px;font-size:12px;color:#111;">10</div>
<div class="t" style="left:742.9px;top:1043.0px;font-size:12px;color:#111;">11</div>
<div class="t" style="left:810.6px;top:1043.0px;font-size:12px;color:#111;">12</div>
<div class="t" style="left:878.8px;top:1043.0px;font-size:12px;color:#111;">13</div>
<div class="t" style="left:946.9px;top:1043.0px;font-size:12px;color:#111;">14</div>
<div class="t" style="left:1015.0px;top:1043.0px;font-size:12px;color:#111;">15</div>
<div class="t" style="left:1083.1px;top:1043.0px;font-size:12px;color:#111;">16</div>
<div class="t" style="left:1151.3px;top:1043.0px;font-size:12px;color:#111;">17</div>
<div class="t" style="left:1219.4px;top:1043.0px;font-size:12px;color:#111;">18</div>
<div class="t" style="left:1287.5px;top:1043.0px;font-size:12px;color:#111;">19</div>
<div class="t" style="left:1355.6px;top:1043.0px;font-size:12px;color:#111;">20</div>
<div class="t" style="left:1423.8px;top:1043.0px;font-size:12px;color:#111;">21</div>
<div class="t" style="left:1500.5px;top:1036.5px;font-size:12px;color:#111;">cm</div>
<div class="b " style="left:414px;top:3px;width:200px;height:20px;background:#fff;border:1px solid #ababab;"></div>
<div class="t" style="left:417.0px;top:5.6px;letter-spacing:-0.12px;color:#8a8a8a;">Quick search (Shift+Q)</div>
<div class="t" style="left:871.7px;top:6.0px;letter-spacing:-0.01px;color:#222;">Materialise Magics 22.03 - Untitled</div>
<svg class="b" style="left:1822px;top:4px;" width="90" height="20" viewBox="0 0 90 20"><path d="M4.5 10.5h6" stroke="#333" stroke-width="1.2" fill="none"/><path d="M40.5 6.5h5v5h-5zM42.5 6.5v-2h5v5h-2" stroke="#333" stroke-width="1" fill="none"/><path d="M75 3l8 8M83 3l-8 8" stroke="#444" stroke-width="1.05" fill="none"/></svg>
<svg class="b" style="left:0px;top:0px;" width="414" height="28" viewBox="0 0 414 28"><path d="M9 9.5l5 2v3l-2 1.3v2.2l-3-2zM14.5 11.5l5-2v5.5l-3 2.5-2-1z" fill="#148a78"/><circle cx="14.3" cy="13" r="2" fill="#cfeee8"/><path d="M8 21.3l14-1v1.4l-14 .6z" fill="#1c3550"/><path d="M32 5.5h7.5l4.5 4.5v10.5h-12z" fill="#1f62c4"/><path d="M39.5 5.5l4.5 4.5h-4.500z" fill="#5a9ae8"/><path d="M34.5 14.5h7M34.5 16.800h7" stroke="#fff" stroke-width="1.1"/><path d="M53.0 8.0l6-1.5l1.5 1.5l7-2.5l-2.5 12.5l-9.5 3z" fill="#2e8ae6"/><rect x="62.5" y="14.5" width="6" height="5.5" fill="#fff" stroke="#444" stroke-width="1"/><rect x="64" y="12.5" width="3" height="3" fill="#fff" stroke="#444" stroke-width=".9"/><path d="M76.0 5.0h3v4.5h8.5v-4.5h3.5v15h-3.5v-6.5h-8.5v6.5h-3z" fill="#2e8ae6"/><path d="M81.5 6.0h4M80.5 15.5h6M80.5 17.5h6" stroke="#444" stroke-width="1"/><path d="M99.0 5.0h3v4.5h8.5v-4.5h3.5v15h-3.5v-6.5h-8.5v6.5h-3z" fill="#2e8ae6"/><path d="M104.5 6.0h4M103.5 15.5h6M103.5 17.5h6" stroke="#444" stroke-width="1"/><path d="M108.5 14l5.5 5.5" stroke="#333" stroke-width="3.6" stroke-linecap="round"/><path d="M108.5 14l5.5 5.5" stroke="#fff" stroke-width="2" stroke-linecap="round"/><path d="M128.0 8.0l6-1.5l1.5 1.5l7-2.5l-2.5 12.5l-9.5 3z" fill="#2e8ae6"/><circle cx="139.5" cy="16.5" r="4.3" fill="#fff"/><polygon points="135.6,14.1 140.0,12.3 143.4,14.5 138.9,16.4" fill="#fff"/><polygon points="135.6,14.1 138.9,16.4 138.9,21.1 135.6,18.8" fill="#fff"/><polygon points="138.9,16.4 143.4,14.5 143.4,19.1 138.9,21.1" fill="#fff"/><polygon points="135.6,14.1 140.0,12.3 143.4,14.5 143.4,19.1 138.9,21.1 135.6,18.8" fill="none" stroke="#333" stroke-width="1.00" stroke-linejoin="round"/><polyline points="135.6,14.1 138.9,16.4 143.4,14.5" fill="none" stroke="#333" stroke-width="1.00" stroke-linejoin="round"/><polyline points="138.9,16.4 138.9,21.1" fill="none" stroke="#333" stroke-width="1.00"/><path d="M151.0 5.0h3v4.5h8.5v-4.5h3.5v15h-3.5v-6.5h-8.5v6.5h-3z" fill="#2e8ae6"/><path d="M156.5 6.0h4M155.5 15.5h6M155.5 17.5h6" stroke="#444" stroke-width="1"/><circle cx="162.5" cy="16.5" r="4.3" fill="#fff"/><polygon points="158.6,14.1 163.0,12.3 166.4,14.5 161.9,16.4" fill="#fff"/><polygon points="158.6,14.1 161.9,16.4 161.9,21.1 158.6,18.8" fill="#fff"/><polygon points="161.9,16.4 166.4,14.5 166.4,19.1 161.9,21.1" fill="#fff"/><polygon points="158.6,14.1 163.0,12.3 166.4,14.5 166.4,19.1 161.9,21.1 158.6,18.8" fill="none" stroke="#333" stroke-width="1.00" stroke-linejoin="round"/><polyline points="158.6,14.1 161.9,16.4 166.4,14.5" fill="none" stroke="#333" stroke-width="1.00" stroke-linejoin="round"/><polyline points="161.9,16.4 161.9,21.1" fill="none" stroke="#333" stroke-width="1.00"/><polygon points="174.4,8.0 181.8,5.0 187.6,8.7 180.0,11.8" fill="#fff"/><polygon points="174.4,8.0 180.0,11.8 180.0,19.6 174.4,15.9" fill="#fff"/><polygon points="180.0,11.8 187.6,8.7 187.6,16.4 180.0,19.6" fill="#fff"/><polygon points="174.4,8.0 181.8,5.0 187.6,8.7 187.6,16.4 180.0,19.6 174.4,15.9" fill="none" stroke="#333" stroke-width="1.10" stroke-linejoin="round"/><polyline points="174.4,8.0 180.0,11.8 187.6,8.7" fill="none" stroke="#333" stroke-width="1.10" stroke-linejoin="round"/><polyline points="180.0,11.8 180.0,19.6" fill="none" stroke="#333" stroke-width="1.10"/><path d="M181.5 13.5L187.5 19.5M187.5 13.5L181.5 19.5" stroke="#e8333a" stroke-width="2.2" stroke-linecap="round" fill="none"/><path d="M121.5 4v19M197.5 4v19M266.5 4v19M387.5 4v19" stroke="#e2e2e2" stroke-width="1"/><path d="M203 11.500l7-4.500v3c5 0 8.5 2.5 9.5 8-2.5-3.2-5.5-4-9.5-3.800v2.800z" fill="#2e8ae6"/><path d="M222.3 11.500h6.600l-3.3 3.600z" fill="#222"/><path d="M251 11.500l-7-4.500v3c-5 0-8.5 2.5-9.5 8 2.5-3.2 5.5-4 9.5-3.800v2.800z" fill="#a9a9a9"/><path d="M254.5 11.500h6.400l-3.2 3.500z" fill="#b9b9b9"/><rect x="270" y="2" width="23" height="21.5" fill="#a9cdf4"/><polygon points="273.5,7.6 281.1,4.5 287.1,8.3 279.2,11.6" fill="#2a84e0"/><polygon points="273.5,7.6 279.2,11.6 279.2,19.7 273.5,15.9" fill="#2a84e0"/><polygon points="279.2,11.6 287.1,8.3 287.1,16.4 279.2,19.7" fill="#1f6fca"/><polygon points="273.5,7.6 281.1,4.5 287.1,8.3 287.1,16.4 279.2,19.7 273.5,15.9" fill="none" stroke="#1b3a63" stroke-width="1.10" stroke-linejoin="round"/><polyline points="273.5,7.6 279.2,11.6 287.1,8.3" fill="none" stroke="#1b3a63" stroke-width="1.10" stroke-linejoin="round"/><polyline points="279.2,11.6 279.2,19.7" fill="none" stroke="#1b3a63" stroke-width="1.10"/><polygon points="282.5,11.5 282.5,20.7 284.7,18.7 286.3,22.4 288.1,21.6 286.4,18.1 289.2,18.1" fill="#1c2c46" stroke="#fff" stroke-width=".4"/><path d="M298 10a5 5 0 0 1 10 0v9h-10z" fill="#b9b9b9" stroke="#777" stroke-width=".8"/><rect x="297" y="13.5" width="9" height="7.5" fill="#eaf4fd" stroke="#7ab4ea" stroke-width=".8"/><path d="M297 17h9M301.5 13.500v7.500M298 14.500l7 6M305 14.500l-7 6" stroke="#7ab4ea" stroke-width=".7"/><path d="M306.5 15.500l4.5 4.5" stroke="#f0a219" stroke-width="2.4" stroke-linecap="round"/><polygon points="320.0,8.1 327.6,5.0 333.6,8.8 325.7,12.1" fill="#fff"/><polygon points="320.0,8.1 325.7,12.1 325.7,20.2 320.0,16.4" fill="#fff"/><polygon points="325.7,12.1 333.6,8.8 333.6,16.9 325.7,20.2" fill="#2a84e0"/><polygon points="320.0,8.1 327.6,5.0 333.6,8.8 333.6,16.9 325.7,20.2 320.0,16.4" fill="none" stroke="#333" stroke-width="1.10" stroke-linejoin="round"/><polyline points="320.0,8.1 325.7,12.1 333.6,8.8" fill="none" stroke="#333" stroke-width="1.10" stroke-linejoin="round"/><polyline points="325.7,12.1 325.7,20.2" fill="none" stroke="#333" stroke-width="1.10"/><polygon points="329.0,12.0 329.0,21.2 331.2,19.2 332.8,22.9 334.6,22.1 332.9,18.6 335.7,18.6" fill="#1c2c46" stroke="#fff" stroke-width=".4"/><path d="M350.3 13.2L357.5 20.5" stroke="#f0a219" stroke-width="3.0" stroke-linecap="round"/><circle cx="347.0" cy="9.8" r="4.7" fill="#b4b4b4" stroke="#444" stroke-width="1.4"/><path d="M373.3 13.2L380.5 20.5" stroke="#f0a219" stroke-width="3.0" stroke-linecap="round"/><circle cx="370.0" cy="9.8" r="4.7" fill="#b4b4b4" stroke="#444" stroke-width="1.4"/><path d="M366.7 15.2L372.3 20.8M372.3 15.2L366.7 20.8" stroke="#e8333a" stroke-width="2.2" stroke-linecap="round" fill="none"/><circle cx="400" cy="10.5" r="4.3" fill="none" stroke="#2e8ae6" stroke-width="3.4" stroke-dasharray="2.2 1.2"/><circle cx="400" cy="10.5" r="3.5" fill="none" stroke="#2e8ae6" stroke-width="2"/><circle cx="406.5" cy="17.5" r="2.8" fill="none" stroke="#2e8ae6" stroke-width="2.4" stroke-dasharray="1.6 .9"/><circle cx="406.5" cy="17.5" r="2.2" fill="none" stroke="#2e8ae6" stroke-width="1.4"/></svg>
<div class="b" style="left:0px;top:51px;width:1920px;height:1px;background:#d4d4d4"></div>
<div class="b " style="left:2px;top:28px;width:50px;height:23px;background:#2b8cec;"></div>
<div class="t" style="left:16.7px;top:32.5px;letter-spacing:-0.98px;font-size:11px;color:#fff;">FILE</div>
<div class="b " style="left:113px;top:28px;width:36px;height:24px;background:#fff;border:1px solid #d4d4d4;border-bottom:none;"></div>
<div class="t" style="left:65.7px;top:32.7px;letter-spacing:-0.42px;font-size:11px;">TOOLS</div>
<div class="t" style="left:123.3px;top:32.7px;letter-spacing:-0.80px;font-size:11px;color:#666;">FIX</div>
<div class="t" style="left:160.0px;top:32.7px;letter-spacing:-0.95px;font-size:11px;">TEXTURE</div>
<div class="t" style="left:227.3px;top:32.7px;letter-spacing:-0.40px;font-size:11px;">POSITION</div>
<div class="t" style="left:299.3px;top:32.7px;letter-spacing:-0.60px;font-size:11px;">BUILD PREPARATION</div>
<div class="t" style="left:424.3px;top:32.7px;letter-spacing:-0.57px;font-size:11px;">SUPPORT GENERATION</div>
<div class="t" style="left:568.3px;top:32.7px;letter-spacing:-0.67px;font-size:11px;">ANALYZE &amp; REPORT</div>
<div class="t" style="left:694.0px;top:32.7px;letter-spacing:-0.67px;font-size:11px;">SLICING</div>
<div class="t" style="left:756.0px;top:32.7px;letter-spacing:-0.35px;font-size:11px;">VIEW</div>
<div class="t" style="left:809.3px;top:32.7px;letter-spacing:-0.36px;font-size:11px;">OPTIONS &amp; HELP</div>
<svg class="b" style="left:1875px;top:27.8px;" width="40" height="20" viewBox="0 0 40 20"><rect x="0.5" y="0.5" width="21" height="16" fill="#fff" stroke="#4a9be8" stroke-width="1"/><rect x="0" y="0" width="22" height="4" fill="#2e8ae6"/><circle cx="16.5" cy="15" r="3.3" fill="#fff" stroke="#666" stroke-width="1.6" stroke-dasharray="1.5 1"/><circle cx="16.5" cy="15" r="2.6" fill="#fff" stroke="#666" stroke-width="1"/><path d="M29.5 12l4-4 4 4z" fill="none" stroke="#444" stroke-width="1.2" stroke-linejoin="round"/></svg>
<div class="b" style="left:0px;top:141px;width:1920px;height:1px;background:#d4d4d4"></div>
<div class="b" style="left:180px;top:55px;width:1px;height:84px;background:#e1e1e1"></div>
<div class="b" style="left:387px;top:55px;width:1px;height:84px;background:#e1e1e1"></div>
<div class="b" style="left:540px;top:55px;width:1px;height:84px;background:#e1e1e1"></div>
<div class="b" style="left:748px;top:55px;width:1px;height:84px;background:#e1e1e1"></div>
<div class="b" style="left:1139px;top:55px;width:1px;height:84px;background:#e1e1e1"></div>
<div class="b" style="left:1458px;top:55px;width:1px;height:84px;background:#e1e1e1"></div>
<div class="t" style="left:24.0px;top:92.8px;letter-spacing:-0.22px;font-size:11px;color:#3c3c3c;">Fix</div>
<div class="t" style="left:13.4px;top:106.0px;letter-spacing:0.05px;font-size:11.25px;color:#3c3c3c;">Wizard</div>
<div class="t" style="left:59.3px;top:92.8px;color:#3c3c3c;">AutoFix</div>
<div class="t" style="left:108.3px;top:92.8px;letter-spacing:0.01px;color:#3c3c3c;">ShrinkWrap</div>
<div class="t" style="left:128.8px;top:106.0px;letter-spacing:-0.29px;font-size:11px;color:#3c3c3c;">Part</div>
<div class="t" style="left:191.7px;top:92.8px;letter-spacing:-0.05px;font-size:11px;color:#3c3c3c;">Normals</div>
<div class="t" style="left:205.0px;top:106.0px;letter-spacing:-0.22px;font-size:11px;color:#3c3c3c;">Fix</div>
<div class="t" style="left:243.3px;top:92.8px;letter-spacing:-0.06px;font-size:11.75px;color:#3c3c3c;">Automatic</div>
<div class="t" style="left:246.3px;top:106.0px;letter-spacing:-0.04px;font-size:12px;color:#3c3c3c;">Stitching</div>
<div class="t" style="left:306.7px;top:92.8px;letter-spacing:-0.10px;font-size:11px;color:#3c3c3c;">Holes</div>
<div class="t" style="left:313.5px;top:106.0px;letter-spacing:-0.22px;font-size:11px;color:#3c3c3c;">Fix</div>
<div class="t" style="left:348.4px;top:92.8px;letter-spacing:0.06px;font-size:11px;color:#3c3c3c;">Noise</div>
<div class="t" style="left:348.1px;top:106.0px;letter-spacing:-0.16px;font-size:11px;color:#3c3c3c;">Shells</div>
<div class="t" style="left:759.9px;top:92.8px;letter-spacing:0.02px;color:#3c3c3c;">Fill Hole</div>
<div class="t" style="left:766.6px;top:106.0px;letter-spacing:0.04px;font-size:11.25px;color:#3c3c3c;">Mode</div>
<div class="t" style="left:812.3px;top:92.8px;letter-spacing:-0.10px;font-size:11px;color:#3c3c3c;">Create</div>
<div class="t" style="left:812.3px;top:106.0px;letter-spacing:-0.02px;font-size:11.25px;color:#3c3c3c;">Bridge</div>
<div class="t" style="left:859.2px;top:92.8px;letter-spacing:-0.10px;font-size:11px;color:#3c3c3c;">Create</div>
<div class="t" style="left:855.0px;top:106.0px;letter-spacing:-0.05px;color:#3c3c3c;">Triangle</div>
<div class="t" style="left:910.1px;top:92.8px;letter-spacing:-0.04px;font-size:11.25px;color:#3c3c3c;">Delete</div>
<div class="t" style="left:905.9px;top:106.0px;letter-spacing:-0.05px;color:#3c3c3c;">Triangle</div>
<div class="t" style="left:969.4px;top:92.8px;letter-spacing:-0.32px;font-size:11px;color:#3c3c3c;">Trim</div>
<div class="t" style="left:956.5px;top:106.0px;letter-spacing:0.02px;font-size:11.25px;color:#3c3c3c;">Triangles</div>
<div class="t" style="left:1017.2px;top:92.8px;letter-spacing:0.02px;font-size:11px;color:#3c3c3c;">Translate</div>
<div class="t" style="left:1012.8px;top:106.0px;letter-spacing:0.05px;font-size:11px;color:#3c3c3c;">Part Points</div>
<div class="t" style="left:1078.0px;top:92.8px;letter-spacing:-0.06px;font-size:11.25px;color:#3c3c3c;">Move Part</div>
<div class="t" style="left:1088.0px;top:106.0px;font-size:11px;color:#3c3c3c;">Points</div>
<div class="t" style="left:1156.7px;top:92.8px;letter-spacing:0.01px;color:#3c3c3c;">Triangle</div>
<div class="t" style="left:1151.0px;top:106.0px;letter-spacing:-0.05px;font-size:11.75px;color:#3c3c3c;">Reduction</div>
<div class="t" style="left:1214.2px;top:92.8px;letter-spacing:0.05px;font-size:11.75px;color:#3c3c3c;">Smoothing</div>
<div class="t" style="left:1281.3px;top:92.8px;letter-spacing:-0.02px;color:#3c3c3c;">Refine and</div>
<div class="t" style="left:1289.5px;top:106.0px;letter-spacing:0.06px;font-size:11.25px;color:#3c3c3c;">Smooth</div>
<div class="t" style="left:1347.3px;top:92.8px;letter-spacing:-0.01px;color:#3c3c3c;">Subdivide</div>
<div class="t" style="left:1362.9px;top:106.0px;letter-spacing:-0.24px;font-size:11px;color:#3c3c3c;">Part</div>
<div class="t" style="left:1408.2px;top:92.8px;letter-spacing:-0.23px;font-size:11px;color:#3c3c3c;">Remesh</div>
<div class="t" style="left:49.3px;top:123.0px;letter-spacing:0.04px;color:#3c3c3c;">Automatic Fixing</div>
<div class="t" style="left:410.7px;top:123.0px;letter-spacing:-0.03px;color:#3c3c3c;">Semi-automatic fixing</div>
<div class="t" style="left:926.7px;top:123.0px;letter-spacing:-0.04px;font-size:11.75px;color:#3c3c3c;">Manual</div>
<div class="t" style="left:1279.6px;top:123.0px;letter-spacing:-0.02px;font-size:11px;color:#3c3c3c;">Enhance</div>
<div class="t" style="left:426.7px;top:60.0px;letter-spacing:-0.04px;color:#3c3c3c;">Unify</div>
<div class="t" style="left:426.7px;top:82.0px;letter-spacing:-0.10px;font-size:11px;color:#3c3c3c;">Shells To Parts</div>
<div class="t" style="left:426.7px;top:104.0px;letter-spacing:-0.20px;font-size:11px;color:#3c3c3c;">Remove Small Parts</div>
<div class="t" style="left:580.0px;top:60.0px;letter-spacing:0.04px;font-size:11.25px;color:#3c3c3c;">Filter Sharp Triangles</div>
<div class="t" style="left:580.0px;top:82.0px;font-size:11.25px;color:#3c3c3c;">Remove Identical Triangles</div>
<div class="t" style="left:580.0px;top:104.0px;letter-spacing:0.01px;color:#3c3c3c;">Detect Overlapping Triangles</div>
<svg class="b" style="left:0px;top:0px;" width="1460" height="142" viewBox="0 0 1460 142"><polygon points="17.2,66.3 31.8,60.2 43.4,67.6 28.3,73.9" fill="#fff"/><polygon points="17.2,66.3 28.3,73.9 28.3,89.5 17.2,82.1" fill="#fff"/><polygon points="28.3,73.9 43.4,67.6 43.4,83.1 28.3,89.5" fill="#fff"/><polygon points="17.2,66.3 31.8,60.2 43.4,67.6 43.4,83.1 28.3,89.5 17.2,82.1" fill="none" stroke="#2b2b2b" stroke-width="1.80" stroke-linejoin="round"/><polyline points="17.2,66.3 28.3,73.9 43.4,67.6" fill="none" stroke="#2b2b2b" stroke-width="1.80" stroke-linejoin="round"/><polyline points="28.3,73.9 28.3,89.5" fill="none" stroke="#2b2b2b" stroke-width="1.80"/><polygon points="32.7,70.0 31.1,71.2 30.5,73.0 28.9,71.9 26.9,71.9 27.5,70.0 26.9,68.1 28.9,68.1 30.5,67.0 31.1,68.8" fill="#f2c53d"/><circle cx="29.5" cy="70.0" r="2.2" fill="#f79a0c"/><polygon points="43.0,73.5 41.5,74.6 40.9,76.4 39.4,75.3 37.6,75.3 38.1,73.5 37.6,71.7 39.4,71.7 40.9,70.6 41.5,72.4" fill="#f2c53d"/><circle cx="40.0" cy="73.5" r="2.1" fill="#f79a0c"/><polygon points="30.1,78.0 28.8,78.9 28.3,80.5 27.0,79.5 25.4,79.5 25.9,78.0 25.4,76.5 27.0,76.5 28.3,75.5 28.8,77.1" fill="#f2c53d"/><circle cx="27.5" cy="78.0" r="1.8" fill="#d9d312"/><path d="M33 78a3.5 3.5 0 1 0 5 1.5" stroke="#b9b9b9" stroke-width="2.2" fill="none"/><path d="M37.5 82l7 6.5" stroke="#b9b9b9" stroke-width="2.6" stroke-linecap="round"/><g transform="translate(63.0 59.5) scale(1.05)"><path d="M3.5 0.500C0 2.5 -1 7 1.5 10c2 2.3 5 2.8 7.5 1.800L19 22l3-3L12 8.800c1-2.6 .3-5.5-2-7.300l-1 5-4.5 .8-2.5-3.500z" fill="#b5b5b5"/></g><circle cx="86" cy="83" r="7.7" fill="#2e8ae6"/><path d="M83.3 78.300v9.400l8-4.700z" fill="#fff"/><polygon points="124.3,66.3 138.9,60.2 150.5,67.6 135.4,73.9" fill="#fff"/><polygon points="124.3,66.3 135.4,73.9 135.4,89.5 124.3,82.1" fill="#fff"/><polygon points="135.4,73.9 150.5,67.6 150.5,83.1 135.4,89.5" fill="#fff"/><polygon points="124.3,66.3 138.9,60.2 150.5,67.6 150.5,83.1 135.4,89.5 124.3,82.1" fill="none" stroke="#2b2b2b" stroke-width="1.80" stroke-linejoin="round"/><polyline points="124.3,66.3 135.4,73.9 150.5,67.6" fill="none" stroke="#2b2b2b" stroke-width="1.80" stroke-linejoin="round"/><polyline points="135.4,73.9 135.4,89.5" fill="none" stroke="#2b2b2b" stroke-width="1.80"/><polygon points="124.3,66.3 138.9,60.2 150.5,67.6 150.5,76.8 142.4,79.8 135.4,82.8 129.4,79.3 124.3,75.8" fill="#3a9bf0" stroke="#2b2b2b" stroke-width="1.8" stroke-linejoin="round"/><polyline points="124.3,66.3 135.4,73.9 150.5,67.6" fill="none" stroke="#2a78c8" stroke-width="1.2"/><path d="M135.4 73.9v9" stroke="#2a78c8" stroke-width="1.2"/><polygon points="198.9,66.3 213.5,60.2 225.1,67.6 210.0,73.9" fill="#fff"/><polygon points="198.9,66.3 210.0,73.9 210.0,89.5 198.9,82.1" fill="#fff"/><polygon points="210.0,73.9 225.1,67.6 225.1,83.1 210.0,89.5" fill="#e8382f"/><polygon points="198.9,66.3 213.5,60.2 225.1,67.6 225.1,83.1 210.0,89.5 198.9,82.1" fill="none" stroke="#2b2b2b" stroke-width="1.80" stroke-linejoin="round"/><polyline points="198.9,66.3 210.0,73.9 225.1,67.6" fill="none" stroke="#2b2b2b" stroke-width="1.80" stroke-linejoin="round"/><polyline points="210.0,73.9 210.0,89.5" fill="none" stroke="#2b2b2b" stroke-width="1.80"/><path d="M217 79l4.5-2.5 2 3 4-2.5 1 .800-2 3.5 3.5 7-9-3-3 1.5-1.5-1.500z" fill="#86b83f"/><polygon points="256.2,66.3 270.8,60.2 282.4,67.6 267.3,73.9" fill="#fff"/><polygon points="256.2,66.3 267.3,73.9 267.3,89.5 256.2,82.1" fill="#fff"/><polygon points="267.3,73.9 282.4,67.6 282.4,83.1 267.3,89.5" fill="#fff"/><polygon points="256.2,66.3 270.8,60.2 282.4,67.6 282.4,83.1 267.3,89.5 256.2,82.1" fill="none" stroke="#2b2b2b" stroke-width="1.80" stroke-linejoin="round"/><polyline points="256.2,66.3 267.3,73.9 282.4,67.6" fill="none" stroke="#2b2b2b" stroke-width="1.80" stroke-linejoin="round"/><polyline points="267.3,73.9 267.3,89.5" fill="none" stroke="#2b2b2b" stroke-width="1.80"/><path d="M271.8 72.0l-5 -3.4M275.6 70.4l-5 -3.4M279.4 68.9l-5 -3.4M282.4 67.6l-5 -3.4" stroke="#7d7d1e" stroke-width="1.7" fill="none"/><path d="M271.8 72.8v4.8M275.6 71.2v4.8M279.4 69.7v4.8" stroke="#2b2b2b" stroke-width="1.5" fill="none"/><polygon points="307.8,66.3 322.4,60.2 334.0,67.6 318.9,73.9" fill="#fff"/><polygon points="307.8,66.3 318.9,73.9 318.9,89.5 307.8,82.1" fill="#fff"/><polygon points="318.9,73.9 334.0,67.6 334.0,83.1 318.9,89.5" fill="#fff"/><polygon points="307.8,66.3 322.4,60.2 334.0,67.6 334.0,83.1 318.9,89.5 307.8,82.1" fill="none" stroke="#2b2b2b" stroke-width="1.80" stroke-linejoin="round"/><polyline points="307.8,66.3 318.9,73.9 334.0,67.6" fill="none" stroke="#2b2b2b" stroke-width="1.80" stroke-linejoin="round"/><polyline points="318.9,73.9 318.9,89.5" fill="none" stroke="#2b2b2b" stroke-width="1.80"/><path d="M312 68.3C317 70.3 324 70.8 329.5 69.3L319 81.3Z" fill="#e8382f" stroke="#7a2a2a" stroke-width="1"/><polygon points="349.9,66.3 364.5,60.2 376.1,67.6 361.0,73.9" fill="#fff"/><polygon points="349.9,66.3 361.0,73.9 361.0,89.5 349.9,82.1" fill="#fff"/><polygon points="361.0,73.9 376.1,67.6 376.1,83.1 361.0,89.5" fill="#fff"/><polygon points="349.9,66.3 364.5,60.2 376.1,67.6 376.1,83.1 361.0,89.5 349.9,82.1" fill="none" stroke="#2b2b2b" stroke-width="1.80" stroke-linejoin="round"/><polyline points="349.9,66.3 361.0,73.9 376.1,67.6" fill="none" stroke="#2b2b2b" stroke-width="1.80" stroke-linejoin="round"/><polyline points="361.0,73.9 361.0,89.5" fill="none" stroke="#2b2b2b" stroke-width="1.80"/><path d="M353.5 76.3l2-2.5 2.5 3-2 3z" fill="none" stroke="#2b2b2b" stroke-width="1.3"/><path d="M366 65.8l5.5 1.5-2.5 .5zM368 76.8l4-1 2.5 3-2 .5z" fill="none" stroke="#2b2b2b" stroke-width="1.2"/><polygon points="767.9,66.3 782.5,60.2 794.1,67.6 779.0,73.9" fill="#fff"/><polygon points="767.9,66.3 779.0,73.9 779.0,89.5 767.9,82.1" fill="#fff"/><polygon points="779.0,73.9 794.1,67.6 794.1,83.1 779.0,89.5" fill="#fff"/><polygon points="767.9,66.3 782.5,60.2 794.1,67.6 794.1,83.1 779.0,89.5 767.9,82.1" fill="none" stroke="#2b2b2b" stroke-width="1.80" stroke-linejoin="round"/><polyline points="767.9,66.3 779.0,73.9 794.1,67.6" fill="none" stroke="#2b2b2b" stroke-width="1.80" stroke-linejoin="round"/><polyline points="779.0,73.9 779.0,89.5" fill="none" stroke="#2b2b2b" stroke-width="1.80"/><path d="M772 68.3C777 70.3 784 70.8 789.5 69.3L779 81.3Z" fill="#d9422f" stroke="#5a2a2a" stroke-width="1"/><polygon points="782.9,70.5 781.2,71.7 780.6,73.7 778.8,72.5 776.7,72.5 777.4,70.5 776.7,68.5 778.8,68.5 780.6,67.3 781.2,69.3" fill="#f2c53d"/><circle cx="779.5" cy="70.5" r="2.4" fill="#f79a0c"/><polygon points="780.4,76.5 779.2,77.4 778.7,78.8 777.5,77.9 776.1,77.9 776.5,76.5 776.1,75.1 777.5,75.1 778.7,74.2 779.2,75.6" fill="#f2c53d"/><circle cx="778.0" cy="76.5" r="1.7" fill="#f2b01c"/><polygon points="793.3,73.5 791.9,74.5 791.4,76.2 790.0,75.2 788.2,75.1 788.8,73.5 788.2,71.9 790.0,71.8 791.4,70.8 791.9,72.5" fill="#f2c53d"/><circle cx="790.5" cy="73.5" r="2.0" fill="#f2b01c"/><path d="M785 81l9.5 8" stroke="#b9b9b9" stroke-width="2.6" stroke-linecap="round"/><path d="M783.5 80.500l4.5-3" stroke="#c9c9c9" stroke-width="2"/><path d="M812.5 90.300L824.5 59.800H843.500L836 82.500Z" fill="#f4f4f4"/><path d="M812.8 90.300L824.6 59.800H843.800L838.5 77M815.5 88.500L826.8 60M841 60.500L836.2 77M825 60l11 21M813 90.300l22-8" stroke="#2e3a2e" stroke-width="1.3" fill="none" stroke-linejoin="round"/><path d="M814.2 89.500L825.7 60M842.4 60.300L837.3 77" stroke="#7a8a3a" stroke-width="1.2" fill="none"/><polygon points="842.3,82.8 839.8,84.2 840.6,86.9 837.9,86.1 836.5,88.6 835.1,86.1 832.4,86.9 833.2,84.2 830.7,82.8 833.2,81.4 832.4,78.7 835.1,79.5 836.5,77.0 837.9,79.5 840.6,78.7 839.8,81.4" fill="#f2c53d"/><circle cx="836.5" cy="82.8" r="4.1" fill="#f79a0c"/><path d="M874.8 62L862.5 88.5 883 82.300z" fill="none" stroke="#2b2b2b" stroke-width="1.5" stroke-linejoin="round"/><circle cx="874.8" cy="61.5" r="2.4" fill="#8aaa4a"/><circle cx="862.5" cy="88.3" r="2.4" fill="#8aaa4a"/><circle cx="889" cy="81.5" r="2" fill="#a9b95a"/><polygon points="889.3,83.0 886.8,84.4 887.6,87.1 884.9,86.3 883.5,88.8 882.1,86.3 879.4,87.1 880.2,84.4 877.7,83.0 880.2,81.6 879.4,78.9 882.1,79.7 883.5,77.2 884.9,79.7 887.6,78.9 886.8,81.6" fill="#f2c53d"/><circle cx="883.5" cy="83.0" r="4.1" fill="#f79a0c"/><path d="M925.8 60L913.5 90.3 936 81z" fill="#ee3a38" stroke="#3a2020" stroke-width="1.6" stroke-linejoin="round"/><path d="M929.0 78.0L940.0 89.0M940.0 78.0L929.0 89.0" stroke="#ea3a40" stroke-width="3.6" stroke-linecap="round" fill="none"/><path d="M927 76l7 7M932 73l-6 6" stroke="#f2907a" stroke-width=".8"/><path d="M968.5 91L980.5 60 996 76.5 991 82z" fill="#84b93a" stroke="#4c6a1e" stroke-width="1.3" stroke-linejoin="round"/><path d="M964.5 87.500L975 62.5 980 70.5 981 60 995.5 75z" fill="#84b93a" stroke="#4c6a1e" stroke-width="1.3" stroke-linejoin="round"/><path d="M964.5 87.500L993 75.5" stroke="#4c6a1e" stroke-width="1.3"/><path d="M976 74.500h8" stroke="#e25a2a" stroke-width="1.2"/><polygon points="1026.4,66.3 1041.0,60.2 1052.6,67.6 1037.5,73.9" fill="#fff"/><polygon points="1026.4,66.3 1037.5,73.9 1037.5,89.5 1026.4,82.1" fill="#fff"/><polygon points="1037.5,73.9 1052.6,67.6 1052.6,83.1 1037.5,89.5" fill="#fff"/><polygon points="1026.4,66.3 1041.0,60.2 1052.6,67.6 1052.6,83.1 1037.5,89.5 1026.4,82.1" fill="none" stroke="#2b2b2b" stroke-width="1.80" stroke-linejoin="round"/><polyline points="1026.4,66.3 1037.5,73.9 1052.6,67.6" fill="none" stroke="#2b2b2b" stroke-width="1.80" stroke-linejoin="round"/><polyline points="1037.5,73.9 1037.5,89.5" fill="none" stroke="#2b2b2b" stroke-width="1.80"/><circle cx="1037.5" cy="73.9" r="3" fill="#2e8ae6"/><path d="M1041.5 82.800h13M1048 76.500v13" stroke="#e8333a" stroke-width="1.4"/><path d="M1048 74.500l2.6 3h-5.200zM1048 91l2.6-3h-5.200zM1039.8 82.800l3-2.600v5.200zM1056.2 82.800l-3-2.600v5.200z" fill="#e8333a"/><polygon points="1089.4,66.3 1104.0,60.2 1115.6,67.6 1100.5,73.9" fill="#fff"/><polygon points="1089.4,66.3 1100.5,73.9 1100.5,89.5 1089.4,82.1" fill="#fff"/><polygon points="1100.5,73.9 1115.6,67.6 1115.6,83.1 1100.5,89.5" fill="#fff"/><polygon points="1089.4,66.3 1104.0,60.2 1115.6,67.6 1115.6,83.1 1100.5,89.5 1089.4,82.1" fill="none" stroke="#2b2b2b" stroke-width="1.80" stroke-linejoin="round"/><polyline points="1089.4,66.3 1100.5,73.9 1115.6,67.6" fill="none" stroke="#2b2b2b" stroke-width="1.80" stroke-linejoin="round"/><polyline points="1100.5,73.9 1100.5,89.5" fill="none" stroke="#2b2b2b" stroke-width="1.80"/><circle cx="1100.5" cy="73.9" r="3" fill="#2e8ae6"/><path d="M1106.5 84l-2.5-2.500c-1-1 .3-2.3 1.5-1.500l2 1.6-1-5.600c-.2-1.5 1.8-1.8 2.2-.4l.9 3.4.1-4.800c0-1.5 2.2-1.5 2.3 0l.2 4.7 1.2-3.900c.5-1.4 2.4-.8 2.1 .6l-.9 4.4 1.5-2.200c.8-1.2 2.5-.2 1.8 1.100l-2.6 5.600c-1 2.5-2.3 4.5-4.3 5h-3.200c-1.5-.6-2.3-2.8-3.2-5.500z" fill="#3a3a3a"/><defs><clipPath id="cA"><circle cx="1176.6" cy="75.0" r="15"/></clipPath><clipPath id="cB"><circle cx="1242.2" cy="75" r="15"/></clipPath></defs><g clip-path="url(#cA)"><rect x="1161" y="59" width="16" height="32" fill="#fff"/><rect x="1176.6" y="59" width="16" height="32" fill="#2e8ae6"/><path d="M1164.9 59v32M1168.2 59v32M1171.5 59v32M1174.8 59v32M1161 60.0h16M1161 63.3h16M1161 66.6h16M1161 69.9h16M1161 73.2h16M1161 76.5h16M1161 79.8h16M1161 83.1h16M1161 86.4h16M1161 89.7h16" stroke="#2b2b2b" stroke-width="1.3"/><path d="M1184 59v32M1176 68h17M1176 79h17" stroke="#1c5ea8" stroke-width="1.2"/></g><circle cx="1176.6" cy="75.0" r="15" fill="none" stroke="#2b2b2b" stroke-width="1.7"/><path d="M1176.6 60v30" stroke="#2b2b2b" stroke-width="1.5"/><polygon points="1179.5,74.0 1179.5,86.1 1182.3,83.5 1184.5,88.3 1186.8,87.2 1184.6,82.6 1188.3,82.6" fill="#333a48" stroke="#fff" stroke-width=".4"/><g clip-path="url(#cB)"><rect x="1226" y="59" width="17" height="32" fill="#fff"/><rect x="1242.2" y="59" width="17" height="32" fill="#2e8ae6"/><path d="M1235 59v32M1226 68.500h17M1226 81h17" stroke="#2b2b2b" stroke-width="1.5"/></g><circle cx="1242.2" cy="75" r="15" fill="none" stroke="#2b2b2b" stroke-width="1.7"/><path d="M1242.2 60v30" stroke="#2b2b2b" stroke-width="1.5"/><polygon points="1245.0,74.0 1245.0,86.1 1247.8,83.5 1250.0,88.3 1252.3,87.2 1250.1,82.6 1253.8,82.6" fill="#333a48" stroke="#fff" stroke-width=".4"/><polygon points="1295.9,66.3 1310.5,60.2 1322.1,67.6 1307.0,73.9" fill="#fff"/><polygon points="1295.9,66.3 1307.0,73.9 1307.0,89.5 1295.9,82.1" fill="#fff"/><polygon points="1307.0,73.9 1322.1,67.6 1322.1,83.1 1307.0,89.5" fill="#2e8ae6"/><polygon points="1295.9,66.3 1310.5,60.2 1322.1,67.6 1322.1,83.1 1307.0,89.5 1295.9,82.1" fill="none" stroke="#2b2b2b" stroke-width="1.50" stroke-linejoin="round"/><polyline points="1295.9,66.3 1307.0,73.9 1322.1,67.6" fill="none" stroke="#2b2b2b" stroke-width="1.50" stroke-linejoin="round"/><polyline points="1307.0,73.9 1307.0,89.5" fill="none" stroke="#2b2b2b" stroke-width="1.50"/><path d="M1296.0 66.3l11 7.500M1296.0 81.3l11-6M1296.0 74.3l11 1M1310.5 60.3l-7 8M1307.0 89.3l-11-12M1307.0 73.9l-5 6l5 8M1296.0 70.3l10 7" stroke="#2b2b2b" stroke-width=".9" fill="none"/><polygon points="1307.0,73.9 1312.0,65.3 1322.1,67.6" fill="#2e8ae6"/><polygon points="1358.4,66.3 1373.0,60.2 1384.6,67.6 1369.5,73.9" fill="#fff"/><polygon points="1358.4,66.3 1369.5,73.9 1369.5,89.5 1358.4,82.1" fill="#fff"/><polygon points="1369.5,73.9 1384.6,67.6 1384.6,83.1 1369.5,89.5" fill="#2a6cb8"/><polygon points="1358.4,66.3 1373.0,60.2 1384.6,67.6 1384.6,83.1 1369.5,89.5 1358.4,82.1" fill="none" stroke="#2b2b2b" stroke-width="1.50" stroke-linejoin="round"/><polyline points="1358.4,66.3 1369.5,73.9 1384.6,67.6" fill="none" stroke="#2b2b2b" stroke-width="1.50" stroke-linejoin="round"/><polyline points="1369.5,73.9 1369.5,89.5" fill="none" stroke="#2b2b2b" stroke-width="1.50"/><path d="M1358.5 66.3l11 7.500M1358.5 81.3l11-6M1358.5 74.3l11 1M1373.0 60.3l-7 8M1369.5 89.3l-11-12M1369.5 73.9l-5 6l5 8M1358.5 70.3l10 7" stroke="#2b2b2b" stroke-width=".9" fill="none"/><polygon points="1369.5,73.9 1374.5,63.3 1384.6,67.6" fill="#2a6cb8"/><path d="M1371 76l13-5M1371 82l13-5M1374 72v16M1379 70v16M1371 70l13 14M1384 72l-13 14" stroke="#6ab0f0" stroke-width=".7"/><polygon points="1414.9,66.3 1429.5,60.2 1441.1,67.6 1426.0,73.9" fill="#fff"/><polygon points="1414.9,66.3 1426.0,73.9 1426.0,89.5 1414.9,82.1" fill="#fff"/><polygon points="1426.0,73.9 1441.1,67.6 1441.1,83.1 1426.0,89.5" fill="#2a6cb8"/><polygon points="1414.9,66.3 1429.5,60.2 1441.1,67.6 1441.1,83.1 1426.0,89.5 1414.9,82.1" fill="none" stroke="#333" stroke-width="1.10" stroke-linejoin="round"/><polyline points="1414.9,66.3 1426.0,73.9 1441.1,67.6" fill="none" stroke="#333" stroke-width="1.10" stroke-linejoin="round"/><polyline points="1426.0,73.9 1426.0,89.5" fill="none" stroke="#333" stroke-width="1.10"/><path d="M1428 78l12-4M1428 84l12-4M1431 75v13M1436 73v13M1427 76l13 10M1440 76l-13 10" stroke="#6ab0f0" stroke-width=".7"/><polygon points="409.4,58.8 416.3,55.9 421.7,59.4 414.6,62.4" fill="#9ccc4a"/><polygon points="409.4,58.8 414.6,62.4 414.6,69.7 409.4,66.2" fill="#86b83a"/><polygon points="414.6,62.4 421.7,59.4 421.7,66.7 414.6,69.7" fill="#7aae30"/><polygon points="409.4,58.8 416.3,55.9 421.7,59.4 421.7,66.7 414.6,69.7 409.4,66.2" fill="none" stroke="#3f5f18" stroke-width="1.20" stroke-linejoin="round"/><polyline points="409.4,58.8 414.6,62.4 421.7,59.4" fill="none" stroke="#3f5f18" stroke-width="1.20" stroke-linejoin="round"/><polyline points="414.6,62.4 414.6,69.7" fill="none" stroke="#3f5f18" stroke-width="1.20"/><polygon points="400.4,66.3 407.3,63.4 412.7,66.9 405.6,69.9" fill="#9ccc4a"/><polygon points="400.4,66.3 405.6,69.9 405.6,77.2 400.4,73.7" fill="#86b83a"/><polygon points="405.6,69.9 412.7,66.9 412.7,74.2 405.6,77.2" fill="#7aae30"/><polygon points="400.4,66.3 407.3,63.4 412.7,66.9 412.7,74.2 405.6,77.2 400.4,73.7" fill="none" stroke="#3f5f18" stroke-width="1.20" stroke-linejoin="round"/><polyline points="400.4,66.3 405.6,69.9 412.7,66.9" fill="none" stroke="#3f5f18" stroke-width="1.20" stroke-linejoin="round"/><polyline points="405.6,69.9 405.6,77.2" fill="none" stroke="#3f5f18" stroke-width="1.20"/><polygon points="409.9,81.9 416.0,79.4 420.9,82.5 414.5,85.1" fill="#fff"/><polygon points="409.9,81.9 414.5,85.1 414.5,91.7 409.9,88.6" fill="#fff"/><polygon points="414.5,85.1 420.9,82.5 420.9,89.0 414.5,91.7" fill="#fff"/><polygon points="409.9,81.9 416.0,79.4 420.9,82.5 420.9,89.0 414.5,91.7 409.9,88.6" fill="none" stroke="#333" stroke-width="1.00" stroke-linejoin="round"/><polyline points="409.9,81.9 414.5,85.1 420.9,82.5" fill="none" stroke="#333" stroke-width="1.00" stroke-linejoin="round"/><polyline points="414.5,85.1 414.5,91.7" fill="none" stroke="#333" stroke-width="1.00"/><polygon points="400.9,89.9 407.0,87.4 411.9,90.5 405.5,93.1" fill="#fff"/><polygon points="400.9,89.9 405.5,93.1 405.5,99.7 400.9,96.6" fill="#fff"/><polygon points="405.5,93.1 411.9,90.5 411.9,97.0 405.5,99.7" fill="#fff"/><polygon points="400.9,89.9 407.0,87.4 411.9,90.5 411.9,97.0 405.5,99.7 400.9,96.6" fill="none" stroke="#333" stroke-width="1.00" stroke-linejoin="round"/><polyline points="400.9,89.9 405.5,93.1 411.9,90.5" fill="none" stroke="#333" stroke-width="1.00" stroke-linejoin="round"/><polyline points="405.5,93.1 405.5,99.7" fill="none" stroke="#333" stroke-width="1.00"/><path d="M414 99.500l4.5-6.5-2-1 6-2.5-.5 7-1.8-1.3-3.2 5z" fill="#2e8ae6"/><polygon points="412.3,102.9 417.3,100.8 421.2,103.3 416.1,105.5" fill="#e03a40"/><polygon points="412.3,102.9 416.1,105.5 416.1,110.8 412.3,108.3" fill="#c92a30"/><polygon points="416.1,105.5 421.2,103.3 421.2,108.6 416.1,110.8" fill="#b81c24"/><polygon points="412.3,102.9 417.3,100.8 421.2,103.3 421.2,108.6 416.1,110.8 412.3,108.3" fill="none" stroke="#7a1a1a" stroke-width="0.80" stroke-linejoin="round"/><polyline points="412.3,102.9 416.1,105.5 421.2,103.3" fill="none" stroke="#7a1a1a" stroke-width="0.80" stroke-linejoin="round"/><polyline points="416.1,105.5 416.1,110.8" fill="none" stroke="#7a1a1a" stroke-width="0.80"/><polygon points="400.9,109.7 407.6,106.9 413.0,110.3 406.0,113.2" fill="#fff"/><polygon points="400.9,109.7 406.0,113.2 406.0,120.4 400.9,117.0" fill="#fff"/><polygon points="406.0,113.2 413.0,110.3 413.0,117.4 406.0,120.4" fill="#fff"/><polygon points="400.9,109.7 407.6,106.9 413.0,110.3 413.0,117.4 406.0,120.4 400.9,117.0" fill="none" stroke="#333" stroke-width="1.00" stroke-linejoin="round"/><polyline points="400.9,109.7 406.0,113.2 413.0,110.3" fill="none" stroke="#333" stroke-width="1.00" stroke-linejoin="round"/><polyline points="406.0,113.2 406.0,120.4" fill="none" stroke="#333" stroke-width="1.00"/><path d="M412.5 112.5L420.5 120.5M420.5 112.5L412.5 120.5" stroke="#e8333a" stroke-width="2.8" stroke-linecap="round" fill="none"/><path d="M566.5 57L557 76.5 573 71z" fill="#fff" stroke="#333a44" stroke-width="1.2" stroke-linejoin="round"/><path d="M567.5 61.500L561 74.500M568.5 62l-4 11" stroke="#333a44" stroke-width="1"/><path d="M564.5 67.500h11l-4 4v5.500l-3-1.500v-4z" fill="#2a6ab8" stroke="#1c3a66" stroke-width=".8"/><path d="M561.5 79L555.5 98.5" stroke="#333" stroke-width="5"/><path d="M561.5 79L555.5 98.5" stroke="#e8334a" stroke-width="3"/><path d="M566.5 79.500L558.5 98.5 575 92z" fill="#fff" stroke="#333" stroke-width="1.1" stroke-linejoin="round"/><path d="M566.0 89.5L574.0 97.5M574.0 89.5L566.0 97.5" stroke="#e8333a" stroke-width="2.8" stroke-linecap="round" fill="none"/><path d="M561.5 101L555.5 120.5" stroke="#333" stroke-width="5"/><path d="M561.5 101L555.5 120.5" stroke="#2e7ad0" stroke-width="3"/><path d="M566.5 101.500L558.5 120.5 575 114z" fill="#fff" stroke="#333" stroke-width="1.1" stroke-linejoin="round"/><ellipse cx="570" cy="116.5" rx="5" ry="3.3" fill="#2e8ae6"/><circle cx="570" cy="116.5" r="1.5" fill="#bfe0ff"/></svg>
<svg class="b" style="left:0px;top:0px;" width="980" height="180" viewBox="0 0 980 180"><path d="M4 150.500h2.500v2H4zM4 154.500h2.500v2H4zM4 158.500h2.500v2H4zM4 162.500h2.500v2H4zM4 166.500h2.500v2H4zM4 170.500h2.500v2H4z" fill="#000"/><path d="M137.0 147v28" stroke="#e0e0e0" stroke-width="1"/><path d="M235.5 147v28" stroke="#e0e0e0" stroke-width="1"/><path d="M396.5 147v28" stroke="#e0e0e0" stroke-width="1"/><path d="M588.5 147v28" stroke="#e0e0e0" stroke-width="1"/><path d="M718.5 147v28" stroke="#e0e0e0" stroke-width="1"/><path d="M848.0 147v28" stroke="#e0e0e0" stroke-width="1"/><path d="M25.0 149.500L15.6 172 33.5 166.500z" fill="#84b93a" stroke="#3f4a2a" stroke-width="1.3" stroke-linejoin="round"/><polygon points="27.5,159.5 27.5,170.4 30.1,168.1 32.1,172.4 34.1,171.5 32.2,167.3 35.5,167.3" fill="#3b3f4c" stroke="#fff" stroke-width=".4"/><path d="M47.8 155.500L64.5 149.800V166.500L48 172.300z" fill="#84b93a" stroke="#3f4a2a" stroke-width="1.3" stroke-linejoin="round"/><polygon points="58.5,160.0 58.5,170.9 61.1,168.6 63.1,172.9 65.2,172.0 63.2,167.8 66.5,167.8" fill="#3b3f4c" stroke="#fff" stroke-width=".4"/><path d="M76 172.500c0-8 4-9.5 9-11.5 5-2 6-6 7.5-11h6c-1 5-2.5 9-6 12-3.5 3-4.5 6-4.5 10.500z" fill="#84b93a" stroke="#3f4a2a" stroke-width="1.3" stroke-linejoin="round"/><polygon points="89.5,160.0 89.5,170.9 92.1,168.6 94.1,172.9 96.2,172.0 94.2,167.8 97.5,167.8" fill="#3b3f4c" stroke="#fff" stroke-width=".4"/><path d="M112.5 172.5c1-2 1-3-1.5-5a11 11 0 1 1 14 0c-2.5 2-2.5 3-1.5 5z" fill="#84b93a" stroke="#3f4a2a" stroke-width="1.3"/><path d="M113.5 154c-1 5 0 10 3 14.500M118 151v17M122.5 154c1 5 .5 8-.5 11" stroke="#3f4a2a" stroke-width="1.1" fill="none"/><polygon points="120.5,160.5 120.5,171.4 123.1,169.1 125.1,173.4 127.2,172.5 125.2,168.3 128.5,168.3" fill="#3b3f4c" stroke="#fff" stroke-width=".4"/><rect x="143.5" y="153" width="23" height="16" fill="#84b93a" stroke="#3f4a2a" stroke-width="1.3"/><g transform="translate(156.0 162.0) scale(0.90) rotate(45)"><path d="M0 0L3 -2.2H12.5a1.4 1.4 0 0 1 1.4 1.4V.8A1.4 1.4 0 0 1 12.5 2.2H3Z" fill="#fff" stroke="#2e3238" stroke-width="1.3" stroke-linejoin="round"/></g><circle cx="190.5" cy="156.5" r="7" fill="#84b93a" stroke="#3f4a2a" stroke-width="1.3"/><circle cx="182" cy="165" r="6.8" fill="#84b93a" stroke="#3f4a2a" stroke-width="1.3"/><circle cx="190.5" cy="156.5" r="6.3" fill="#84b93a"/><circle cx="182" cy="165" r="6.1" fill="#84b93a"/><path d="M183.5 159.5l5 4.500" stroke="#84b93a" stroke-width="4"/><g transform="translate(187.5 162.0) scale(0.90) rotate(45)"><path d="M0 0L3 -2.2H12.5a1.4 1.4 0 0 1 1.4 1.4V.8A1.4 1.4 0 0 1 12.5 2.2H3Z" fill="#fff" stroke="#2e3238" stroke-width="1.3" stroke-linejoin="round"/></g><path d="M206.5 171.500c8 0 11-3 13.5-9.5 2-5.5 4-9.5 7.5-11.5" fill="none" stroke="#3f4a2a" stroke-width="3.4" stroke-linecap="round"/><path d="M206.5 171.500c8 0 11-3 13.5-9.5 2-5.5 4-9.5 7.5-11.5" fill="none" stroke="#8a9a6a" stroke-width="1.6" stroke-linecap="round"/><g transform="translate(219.0 165.0) scale(0.80) rotate(45)"><path d="M0 0L3 -2.2H12.5a1.4 1.4 0 0 1 1.4 1.4V.8A1.4 1.4 0 0 1 12.5 2.2H3Z" fill="#fff" stroke="#2e3238" stroke-width="1.3" stroke-linejoin="round"/></g><rect x="242" y="153" width="23.5" height="17" fill="#84b93a" stroke="#3f4a2a" stroke-width="1.3"/><path d="M242 153l6 17 5-17 5 17 7.5-17M253 153v17" stroke="#3f4a2a" stroke-width="1" fill="none"/><g transform="translate(255.5 162.5) scale(0.90) rotate(45)"><path d="M0 0L3 -2.2H12.5a1.4 1.4 0 0 1 1.4 1.4V.8A1.4 1.4 0 0 1 12.5 2.2H3Z" fill="#fff" stroke="#2e3238" stroke-width="1.3" stroke-linejoin="round"/></g><circle cx="288.5" cy="156.5" r="7" fill="#84b93a" stroke="#3f4a2a" stroke-width="1.3"/><circle cx="281" cy="165.5" r="7" fill="#84b93a" stroke="#3f4a2a" stroke-width="1.3"/><path d="M288.5 156.5L295.5 156.5M288.5 156.5L292.9 162.0M288.5 156.5L286.9 163.3M288.5 156.5L282.2 159.5M288.5 156.5L282.2 153.5M288.5 156.5L286.9 149.7M288.5 156.5L292.9 151.0M281.0 165.5L287.1 168.9M281.0 165.5L282.2 172.4M281.0 165.5L276.4 170.7M281.0 165.5L274.0 165.1M281.0 165.5L276.9 159.8M281.0 165.5L282.9 158.8M281.0 165.5L287.5 162.8" stroke="#3f4a2a" stroke-width=".9"/><g transform="translate(286.0 162.5) scale(0.90) rotate(45)"><path d="M0 0L3 -2.2H12.5a1.4 1.4 0 0 1 1.4 1.4V.8A1.4 1.4 0 0 1 12.5 2.2H3Z" fill="#fff" stroke="#2e3238" stroke-width="1.3" stroke-linejoin="round"/></g><path d="M305 152l6 2 4-4 3 4 7-4 1.5 8-5 4 3 6-7-1-4 4-3-5-7 1 2-6-4-3z" fill="#84b93a" stroke="#3f4a2a" stroke-width="1.3" stroke-linejoin="round"/><path d="M316.0 161.0L325.6 163.7M316.0 161.0L322.0 168.2M316.0 161.0L316.1 170.0M316.0 161.0L310.2 168.4M316.0 161.0L306.5 163.9M316.0 161.0L306.4 158.3M316.0 161.0L310.0 153.8M316.0 161.0L315.9 152.0M316.0 161.0L321.8 153.6M316.0 161.0L325.5 158.1" stroke="#3f4a2a" stroke-width=".9"/><g transform="translate(318.5 163.0) scale(0.90) rotate(45)"><path d="M0 0L3 -2.2H12.5a1.4 1.4 0 0 1 1.4 1.4V.8A1.4 1.4 0 0 1 12.5 2.2H3Z" fill="#fff" stroke="#2e3238" stroke-width="1.3" stroke-linejoin="round"/></g><circle cx="347" cy="161" r="11.5" fill="#84b93a" stroke="#3f4a2a" stroke-width="1.3"/><path d="M347.0 161.0L358.5 161.0M347.0 161.0L357.0 166.8M347.0 161.0L352.8 171.0M347.0 161.0L347.0 172.5M347.0 161.0L341.2 171.0M347.0 161.0L337.0 166.8M347.0 161.0L335.5 161.0M347.0 161.0L337.0 155.2M347.0 161.0L341.2 151.0M347.0 161.0L347.0 149.5M347.0 161.0L352.8 151.0M347.0 161.0L357.0 155.2" stroke="#3f4a2a" stroke-width="1"/><g transform="translate(349.5 163.0) scale(0.90) rotate(45)"><path d="M0 0L3 -2.2H12.5a1.4 1.4 0 0 1 1.4 1.4V.8A1.4 1.4 0 0 1 12.5 2.2H3Z" fill="#fff" stroke="#2e3238" stroke-width="1.3" stroke-linejoin="round"/></g><ellipse cx="378.5" cy="161" rx="8" ry="11.5" fill="#84b93a" stroke="#3f4a2a" stroke-width="1.3"/><path d="M378.5 161.0L386.5 161.0M378.5 161.0L385.4 166.8M378.5 161.0L382.5 171.0M378.5 161.0L378.5 172.5M378.5 161.0L374.5 171.0M378.5 161.0L371.6 166.8M378.5 161.0L370.5 161.0M378.5 161.0L371.6 155.2M378.5 161.0L374.5 151.0M378.5 161.0L378.5 149.5M378.5 161.0L382.5 151.0M378.5 161.0L385.4 155.2" stroke="#3f4a2a" stroke-width="1"/><g transform="translate(381.0 163.5) scale(0.90) rotate(45)"><path d="M0 0L3 -2.2H12.5a1.4 1.4 0 0 1 1.4 1.4V.8A1.4 1.4 0 0 1 12.5 2.2H3Z" fill="#fff" stroke="#2e3238" stroke-width="1.3" stroke-linejoin="round"/></g><polygon points="404.7,154.5 416.1,149.7 425.1,155.5 413.4,160.4" fill="#8cbf3f"/><polygon points="404.7,154.5 413.4,160.4 413.4,172.6 404.7,166.8" fill="#fff"/><polygon points="413.4,160.4 425.1,155.5 425.1,167.6 413.4,172.6" fill="#fff"/><polygon points="404.7,154.5 416.1,149.7 425.1,155.5 425.1,167.6 413.4,172.6 404.7,166.8" fill="none" stroke="#333" stroke-width="1.20" stroke-linejoin="round"/><polyline points="404.7,154.5 413.4,160.4 425.1,155.5" fill="none" stroke="#333" stroke-width="1.20" stroke-linejoin="round"/><polyline points="413.4,160.4 413.4,172.6" fill="none" stroke="#333" stroke-width="1.20"/><polygon points="417.5,161.0 417.5,171.9 420.1,169.6 422.1,173.9 424.1,173.0 422.2,168.8 425.5,168.8" fill="#3b3f4c" stroke="#fff" stroke-width=".4"/><polygon points="435.7,154.5 447.1,149.7 456.1,155.5 444.4,160.4" fill="#fff"/><polygon points="435.7,154.5 444.4,160.4 444.4,172.6 435.7,166.8" fill="#8cbf3f"/><polygon points="444.4,160.4 456.1,155.5 456.1,167.6 444.4,172.6" fill="#8cbf3f"/><polygon points="435.7,154.5 447.1,149.7 456.1,155.5 456.1,167.6 444.4,172.6 435.7,166.8" fill="none" stroke="#333" stroke-width="1.20" stroke-linejoin="round"/><polyline points="435.7,154.5 444.4,160.4 456.1,155.5" fill="none" stroke="#333" stroke-width="1.20" stroke-linejoin="round"/><polyline points="444.4,160.4 444.4,172.6" fill="none" stroke="#333" stroke-width="1.20"/><polygon points="448.5,161.0 448.5,171.9 451.1,169.6 453.1,173.9 455.1,173.0 453.2,168.8 456.5,168.8" fill="#3b3f4c" stroke="#fff" stroke-width=".4"/><polygon points="466.7,154.5 478.1,149.7 487.1,155.5 475.4,160.4" fill="#f5a623"/><polygon points="466.7,154.5 475.4,160.4 475.4,172.6 466.7,166.8" fill="#2e8ae6"/><polygon points="475.4,160.4 487.1,155.5 487.1,167.6 475.4,172.6" fill="#8cbf3f"/><polygon points="466.7,154.5 478.1,149.7 487.1,155.5 487.1,167.6 475.4,172.6 466.7,166.8" fill="none" stroke="#333" stroke-width="1.20" stroke-linejoin="round"/><polyline points="466.7,154.5 475.4,160.4 487.1,155.5" fill="none" stroke="#333" stroke-width="1.20" stroke-linejoin="round"/><polyline points="475.4,160.4 475.4,172.6" fill="none" stroke="#333" stroke-width="1.20"/><polygon points="478.0,160.0 478.0,170.9 480.6,168.6 482.6,172.9 484.6,172.0 482.7,167.8 486.0,167.8" fill="#3b3f4c" stroke="#fff" stroke-width=".4"/><polygon points="497.7,154.5 509.1,149.7 518.1,155.5 506.4,160.4" fill="#fff"/><polygon points="497.7,154.5 506.4,160.4 506.4,172.6 497.7,166.8" fill="#fff"/><polygon points="506.4,160.4 518.1,155.5 518.1,167.6 506.4,172.6" fill="#f0f0f0"/><polygon points="497.7,154.5 509.1,149.7 518.1,155.5 518.1,167.6 506.4,172.6 497.7,166.8" fill="none" stroke="#b9b9b9" stroke-width="1.20" stroke-linejoin="round"/><polyline points="497.7,154.5 506.4,160.4 518.1,155.5" fill="none" stroke="#b9b9b9" stroke-width="1.20" stroke-linejoin="round"/><polyline points="506.4,160.4 506.4,172.6" fill="none" stroke="#b9b9b9" stroke-width="1.20"/><polygon points="510.0,160.0 510.0,170.9 512.6,168.6 514.6,172.9 516.6,172.0 514.7,167.8 518.0,167.8" fill="#a9a9a9" stroke="#fff" stroke-width=".4"/><polygon points="529.2,154.5 540.6,149.7 549.6,155.5 537.9,160.4" fill="none"/><polygon points="529.2,154.5 537.9,160.4 537.9,172.6 529.2,166.8" fill="none"/><polygon points="537.9,160.4 549.6,155.5 549.6,167.6 537.9,172.6" fill="none"/><polygon points="529.2,154.5 540.6,149.7 549.6,155.5 549.6,167.6 537.9,172.6 529.2,166.8" fill="none" stroke="#333" stroke-width="1.20" stroke-linejoin="round"/><polyline points="529.2,154.5 537.9,160.4 549.6,155.5" fill="none" stroke="#333" stroke-width="1.20" stroke-linejoin="round"/><polyline points="537.9,160.4 537.9,172.6" fill="none" stroke="#333" stroke-width="1.20"/><path d="M534 166l5-10 6 1 2 8z" fill="#8cbf3f" stroke="#3f4a2a" stroke-width=".8"/><path d="M537.5 156.500h6l-1 7-3 1z" fill="#e8382f"/><polygon points="541.5,160.0 541.5,170.9 544.1,168.6 546.1,172.9 548.1,172.0 546.2,167.8 549.5,167.8" fill="#3b3f4c" stroke="#fff" stroke-width=".4"/><polygon points="560.2,154.5 571.6,149.7 580.6,155.5 568.9,160.4" fill="#7aae30"/><polygon points="560.2,154.5 568.9,160.4 568.9,172.6 560.2,166.8" fill="#86b83a"/><polygon points="568.9,160.4 580.6,155.5 580.6,167.6 568.9,172.6" fill="#6a9a28"/><polygon points="560.2,154.5 571.6,149.7 580.6,155.5 580.6,167.6 568.9,172.6 560.2,166.8" fill="none" stroke="#2f3f18" stroke-width="1.60" stroke-linejoin="round"/><polyline points="560.2,154.5 568.9,160.4 580.6,155.5" fill="none" stroke="#2f3f18" stroke-width="1.60" stroke-linejoin="round"/><polyline points="568.9,160.4 568.9,172.6" fill="none" stroke="#2f3f18" stroke-width="1.60"/><path d="M563 162l3-2v3zM571 157l4 1-2 1z" fill="#2f3f18"/><polygon points="572.5,160.0 572.5,170.9 575.1,168.6 577.1,172.9 579.1,172.0 577.2,167.8 580.5,167.8" fill="#3b3f4c" stroke="#fff" stroke-width=".4"/><path d="M607 149.500L597.5 172 614 166.500z" fill="#cdcdcd" stroke="#a2a2a2" stroke-width="1.2" stroke-linejoin="round"/><polygon points="608.5,160.5 608.5,170.8 610.9,168.6 612.8,172.7 614.8,171.8 612.9,167.9 616.1,167.9" fill="#9a9a9a" stroke="#fff" stroke-width=".4"/><path d="M637.0 150L628.0 172 645.0 166z" fill="#dcdcdc" stroke="#a2a2a2" stroke-width="1.2" stroke-linejoin="round"/><path d="M637.0 155L631.0 169 642.0 165z" fill="#e9e9e9" stroke="#a2a2a2" stroke-width="1"/><path d="M650.0 150.500c-5 .5-8 3-9.5 7l-2.5-1 .5 7 6-3.5-2-.8c1.5-2.5 4-4.5 7.5-5z" fill="#a2a2a2"/><path d="M668.0 150L659.0 172 676.0 166z" fill="#dcdcdc" stroke="#a2a2a2" stroke-width="1.2" stroke-linejoin="round"/><path d="M668.0 155L662.0 169 673.0 165z" fill="#e9e9e9" stroke="#a2a2a2" stroke-width="1"/><path d="M681.0 150.500c-5 .5-8 3-9.5 7l-2.5-1 .5 7 6-3.5-2-.8c1.5-2.5 4-4.5 7.5-5z" fill="#a2a2a2"/><path d="M698 150L688 172 701 169z" fill="#cfc9b4" stroke="#4a4a3a" stroke-width="1.2" stroke-linejoin="round"/><path d="M703 150L692 172 711 169z" fill="#84b93a" stroke="#3f4a2a" stroke-width="1.2" stroke-linejoin="round"/><path d="M700.5 164.500a5 5 0 0 1 8-2l1.5-1.500v5h-5l1.5-1.500a3 3 0 0 0-4 1zM711 167.500a5 5 0 0 1-8 2l-1.5 1.500v-5h5l-1.5 1.500a3 3 0 0 0 4-1z" fill="#2e8ae6"/><path d="M737.5 149.500L728 172 745 166.500z" fill="#84b93a" stroke="#2f3a1f" stroke-width="1.4" stroke-linejoin="round"/><path d="M738.5 161.5L747.5 170.5M747.5 161.5L738.5 170.5" stroke="#e8333a" stroke-width="3.0" stroke-linecap="round" fill="none"/><path d="M764 150L757 172 770 168z" fill="#d9d9d9" stroke="#b9b9b9" stroke-width="1" stroke-dasharray="2 1.5"/><path d="M770 150L760 172 779.5 166z" fill="#cfcfcf" stroke="#b0b0b0" stroke-width="1.2"/><path d="M799 149.500L789.5 172 806 166.500z" fill="#d2d2d2" stroke="#a9a9a9" stroke-width="1.2" stroke-linejoin="round"/><rect x="800" y="162" width="9" height="9.5" fill="#e9e9e9" stroke="#9a9a9a" stroke-width="1"/><path d="M802 165h5M802 168h5" stroke="#9a9a9a" stroke-width="1"/><path d="M828 149.500h13.500L833 167.5 819 172z" fill="#c4c4c4" stroke="#a9a9a9" stroke-width="1.2" stroke-linejoin="round"/><path d="M828 149.500l8 11" stroke="#dcdcdc" stroke-width="1.2"/><path d="M867 149.500L857.5 172 874 166.500z" fill="#fff" stroke="#8a8a8a" stroke-width="1.1" stroke-linejoin="round"/><ellipse cx="873.0" cy="167.0" rx="5.2" ry="3.3" fill="#c4c4c4"/><circle cx="873.0" cy="167.0" r="1.5" fill="#fff"/><path d="M896 150L887 172 898 169z" fill="#fff" stroke="#222" stroke-width="1.2" stroke-linejoin="round"/><path d="M901 150L891 172 908 168z" fill="#c4c4c4" stroke="#333" stroke-width="1.2" stroke-linejoin="round"/><path d="M899 158a5.5 5.5 0 0 1 8.5-4.500l1.5-2 1 6h-6l1.5-2a3 3 0 0 0-4 2.500z" fill="#2e8ae6"/><ellipse cx="904.5" cy="167.0" rx="5.2" ry="3.3" fill="#2e8ae6"/><circle cx="904.5" cy="167.0" r="1.5" fill="#dff0ff"/><path d="M929 149.500L919.5 172 936 166.500z" fill="#b4b4b4" stroke="#333" stroke-width="1.3" stroke-linejoin="round"/><ellipse cx="935.5" cy="167.0" rx="5.2" ry="3.3" fill="#2e8ae6"/><circle cx="935.5" cy="167.0" r="1.5" fill="#dff0ff"/><path d="M958 150.500h14L965 168 950 172z" fill="#bdbdbd" stroke="#a0a0a0" stroke-width="1.6" stroke-linejoin="round"/><path d="M959 152l7 12" stroke="#a0a0a0" stroke-width="1"/><ellipse cx="967.0" cy="167.5" rx="5.2" ry="3.3" fill="#d0d0d0"/><circle cx="967.0" cy="167.5" r="1.5" fill="#fff"/></svg>
<div class="b " style="left:1530px;top:142px;width:390px;height:919px;background:#fff;"></div>
<svg class="b" style="left:1530px;top:594px;" width="5" height="16" viewBox="0 0 5 16"><path d="M0 0.5l4 3.500-4 3.500zM0 8l4 3.500-4 3.500z" fill="#2c3238"/></svg>
<div class="b" style="left:1531px;top:144px;width:389px;height:1px;background:#ededed"></div>
<div class="b" style="left:1536px;top:145px;width:1px;height:916px;background:#f4f4f4"></div>
<svg width="0" height="0" style="position:absolute"><defs><pattern id="grip" width="4" height="4" patternUnits="userSpaceOnUse"><rect x="0" y="0" width="1" height="1" fill="#3e3e3e"/><rect x="2" y="2" width="1" height="1" fill="#3e3e3e"/></pattern></defs></svg>
<svg class="b" style="left:1541px;top:151.5px;" width="12" height="9" viewBox="0 0 12 9"><path d="M0.5 1h11L6 8z" fill="#000"/></svg>
<div class="t" style="left:1563.2px;top:149.0px;letter-spacing:-0.05px;font-size:11px;">View Pages</div>
<svg class="b" style="left:1626px;top:154px" width="249" height="5" shape-rendering="crispEdges"><rect width="249" height="5" fill="url(#grip)"/></svg>
<svg class="b" style="left:1882px;top:151.5px;" width="12" height="10" viewBox="0 0 12 10"><path d="M1 5h4M5 2.5v5M5 3.5h5M5 6.5h5M10 2.5v5" stroke="#000" stroke-width="1.1" fill="none"/><rect x="5" y="3.5" width="5" height="3" fill="#fff" stroke="#000" stroke-width="1"/></svg>
<svg class="b" style="left:1903.5px;top:152px;" width="9" height="9" viewBox="0 0 9 9"><path d="M1.5 1.5l6 6M7.5 1.5l-6 6" stroke="#000" stroke-width="1.6" fill="none"/></svg>
<div class="b" style="left:1538px;top:171px;width:72px;height:19px;background:#fff;border:1px solid #8e8e8e;border-bottom:none;box-shadow:inset 1px 1px 0 #e8e8e8;"></div>
<div class="t" style="left:1559.7px;top:172.3px;letter-spacing:0.06px;font-size:11.75px;">View</div>
<div class="t" style="left:1621.4px;top:173.4px;letter-spacing:0.05px;font-size:11.75px;">Multi-Section</div>
<div class="t" style="left:1724.2px;top:173.4px;letter-spacing:-0.34px;font-size:11px;">Slices</div>
<div class="t" style="left:1799.4px;top:173.4px;letter-spacing:-0.03px;">Grid</div>
<div class="b " style="left:1540px;top:201px;width:373px;height:109px;border:1px solid #f0f0f0;"></div>
<div class="b " style="left:1546px;top:194px;width:72px;height:14px;background:#fff;"></div>
<div class="t" style="left:1549.0px;top:193.0px;font-size:11.75px;">Visualization</div>
<div class="b " style="left:1550px;top:217px;width:33px;height:22px;background:#fff;border:1px solid #adadad;"></div>
<svg class="b" style="left:1574.5px;top:226.8px;" width="6" height="3.5" viewBox="0 0 6 3.5"><path d="M0 0h6L3 3.500z" fill="#777"/></svg>
<div class="t" style="left:1589.6px;top:221.2px;letter-spacing:-0.05px;font-size:11.75px;">Shade&amp;Wire</div>
<div class="b " style="left:1550px;top:245px;width:33px;height:22px;background:#fff;border:1px solid #adadad;"></div>
<svg class="b" style="left:1574.5px;top:254.8px;" width="6" height="3.5" viewBox="0 0 6 3.5"><path d="M0 0h6L3 3.500z" fill="#777"/></svg>
<div class="t" style="left:1589.6px;top:249.2px;letter-spacing:0.02px;font-size:11px;">Bad Edges Visible</div>
<div class="b " style="left:1550px;top:273px;width:33px;height:22px;background:#fff;border:1px solid #adadad;"></div>
<svg class="b" style="left:1574.5px;top:282.8px;" width="6" height="3.5" viewBox="0 0 6 3.5"><path d="M0 0h6L3 3.500z" fill="#777"/></svg>
<div class="t" style="left:1589.6px;top:277.2px;">Flipped Triangles Visible</div>
<svg class="b" style="left:0px;top:0px;" width="1590" height="300" viewBox="0 0 1590 300"><polygon points="1554.0,224.1 1561.6,221.0 1567.6,224.8 1559.7,228.1" fill="#9a9a9a"/><polygon points="1554.0,224.1 1559.7,228.1 1559.7,236.2 1554.0,232.4" fill="#6a6a6a"/><polygon points="1559.7,228.1 1567.6,224.8 1567.6,232.9 1559.7,236.2" fill="#8a8a8a"/><polygon points="1554.0,224.1 1561.6,221.0 1567.6,224.8 1567.6,232.9 1559.7,236.2 1554.0,232.4" fill="none" stroke="#444" stroke-width="1.00" stroke-linejoin="round"/><polyline points="1554.0,224.1 1559.7,228.1 1567.6,224.8" fill="none" stroke="#444" stroke-width="1.00" stroke-linejoin="round"/><polyline points="1559.7,228.1 1559.7,236.2" fill="none" stroke="#444" stroke-width="1.00"/><path d="M1560 249L1554 263 1565 260z" fill="#8cbf3f" stroke="#6a8a2a" stroke-width=".8"/><path d="M1562.5 250l5 10-2.5 .5" fill="none" stroke="#e0e08a" stroke-width="1.3"/><path d="M1564 279l4.5 11-3 .5z" fill="#d8392f"/><path d="M1560 277L1554 291 1565 288z" fill="#8cbf3f" stroke="#6a8a2a" stroke-width=".8"/></svg>
<div class="b " style="left:1808px;top:217px;width:97px;height:86px;background:#fff;border:1px solid #9a9a9a;"></div>
<svg class="b" style="left:1896.4px;top:259.1px;" width="6" height="3.5" viewBox="0 0 6 3.5"><path d="M0 0h6L3 3.500z" fill="#888"/></svg>
<svg class="b" style="left:0px;top:0px;" width="1910" height="310" viewBox="0 0 1910 310"><path d="M1814.5 229.500L1855 223 1888.5 235V280.500L1843.5 295.5 1814.5 272.500Z M1814.5 229.500L1843.5 244.5 1888.5 235M1843.5 244.500V295.500M1855 223V263.500L1814.5 272.500M1855 263.500L1888.5 280.5" fill="none" stroke="#2b2b2b" stroke-width="1.3" stroke-linejoin="round"/></svg>
<div class="b" style="left:1537px;top:318px;width:383px;height:1px;background:#ececec"></div>
<svg class="b" style="left:1541px;top:325.5px;" width="12" height="9" viewBox="0 0 12 9"><path d="M0.5 1h11L6 8z" fill="#000"/></svg>
<div class="t" style="left:1563.2px;top:323.0px;letter-spacing:-0.18px;font-size:11px;">Part Pages</div>
<svg class="b" style="left:1621px;top:328px" width="254" height="5" shape-rendering="crispEdges"><rect width="254" height="5" fill="url(#grip)"/></svg>
<svg class="b" style="left:1882px;top:325.5px;" width="12" height="10" viewBox="0 0 12 10"><path d="M1 5h4M5 2.5v5M5 3.5h5M5 6.5h5M10 2.5v5" stroke="#000" stroke-width="1.1" fill="none"/><rect x="5" y="3.5" width="5" height="3" fill="#fff" stroke="#000" stroke-width="1"/></svg>
<svg class="b" style="left:1903.5px;top:326px;" width="9" height="9" viewBox="0 0 9 9"><path d="M1.5 1.5l6 6M7.5 1.5l-6 6" stroke="#000" stroke-width="1.6" fill="none"/></svg>
<div class="b" style="left:1600px;top:345px;width:69px;height:19px;background:#fff;border:1px solid #8e8e8e;border-bottom:none;box-shadow:inset 1px 1px 0 #e8e8e8;"></div>
<div class="t" style="left:1548.2px;top:346.8px;letter-spacing:-0.11px;font-size:11px;">Part List</div>
<div class="t" style="left:1612.4px;top:345.9px;letter-spacing:0.03px;font-size:11.25px;">Part Info</div>
<div class="t" style="left:1680.0px;top:346.8px;letter-spacing:0.01px;">Part Fixing Info</div>
<div class="t" style="left:1782.3px;top:346.8px;letter-spacing:-0.05px;font-size:11.25px;">Build Time Estimatior</div>
<div class="b " style="left:1888px;top:346px;width:15px;height:18px;background:#fff;"></div>
<svg class="b" style="left:1891px;top:349.5px;" width="8" height="11" viewBox="0 0 8 11"><path d="M7 0.5v10L1 5.5z" fill="#b5b5b5"/></svg>
<div class="b " style="left:1903px;top:345px;width:16px;height:19px;background:#fff;border:1px solid #7a7a7a;"></div>
<svg class="b" style="left:1907.5px;top:348.5px;" width="8" height="12" viewBox="0 0 8 12"><path d="M1 0.5v11L7.5 6z" fill="#000"/></svg>
<div class="t" style="left:1545.4px;top:377.0px;letter-spacing:-0.03px;font-size:11px;">Part name</div>
<div class="b " style="left:1602px;top:375px;width:146px;height:19px;background:#fff;border:1px solid #9a9a9a;"></div>
<div class="t" style="left:1606.5px;top:377.0px;letter-spacing:0.05px;font-size:11.25px;">matrix stl</div>
<svg class="b" style="left:1736.2px;top:383.5px;" width="6" height="3.5" viewBox="0 0 6 3.5"><path d="M0 0h6L3 3.500z" fill="#666"/></svg>
<div class="b " style="left:1754px;top:373px;width:75px;height:23px;background:#fff;border:1px solid #8c8c8c;"></div>
<div class="t" style="left:1771.2px;top:376.9px;letter-spacing:-0.18px;font-size:11px;">Rename</div>
<div class="b " style="left:1837px;top:373px;width:73px;height:23px;background:#fdfdfd;border:1px solid #f1f1f1;"></div>
<div class="t" style="left:1862.2px;top:376.9px;letter-spacing:-0.03px;font-size:11px;color:#a0a0a0;">Next</div>
<div class="b " style="left:1545px;top:409px;width:364px;height:115px;border:1px solid #f0f0f0;"></div>
<div class="b " style="left:1551px;top:402px;width:66px;height:14px;background:#fff;"></div>
<div class="t" style="left:1554.4px;top:401.0px;letter-spacing:-0.06px;">Dimensions</div>
<div class="t" style="left:1567.5px;top:424.0px;letter-spacing:0.05px;font-size:12px;">Min</div>
<div class="t" style="left:1672.4px;top:424.0px;letter-spacing:0.07px;font-size:11px;">Max</div>
<div class="t" style="left:1777.3px;top:424.0px;letter-spacing:0.05px;font-size:11.25px;">Delta</div>
<div class="t" style="left:1555.0px;top:446.8px;">X</div>
<div class="b " style="left:1567px;top:444px;width:99px;height:20px;background:#fff;border:1px solid #909090;"></div>
<div class="t" style="left:1570.5px;top:446.6px;letter-spacing:-0.55px;font-size:12px;">-39.768</div>
<div class="b " style="left:1672px;top:444px;width:99px;height:20px;background:#fff;border:1px solid #909090;"></div>
<div class="t" style="left:1675.0px;top:446.6px;letter-spacing:-0.55px;font-size:12px;">39.768</div>
<div class="b " style="left:1777px;top:444px;width:99px;height:20px;background:#fff;border:1px solid #909090;"></div>
<div class="t" style="left:1780.3px;top:446.6px;letter-spacing:-0.55px;font-size:12px;">79.535</div>
<div class="t" style="left:1882.1px;top:447.0px;letter-spacing:-0.41px;font-size:11px;">mm</div>
<div class="t" style="left:1555.0px;top:472.8px;">Y</div>
<div class="b " style="left:1567px;top:470px;width:99px;height:20px;background:#fff;border:1px solid #909090;"></div>
<div class="t" style="left:1570.5px;top:472.6px;letter-spacing:-0.55px;font-size:12px;">-44.045</div>
<div class="b " style="left:1672px;top:470px;width:99px;height:20px;background:#fff;border:1px solid #909090;"></div>
<div class="t" style="left:1675.0px;top:472.6px;letter-spacing:-0.55px;font-size:12px;">40.800</div>
<div class="b " style="left:1777px;top:470px;width:99px;height:20px;background:#fff;border:1px solid #909090;"></div>
<div class="t" style="left:1780.3px;top:472.6px;letter-spacing:-0.55px;font-size:12px;">84.845</div>
<div class="t" style="left:1882.1px;top:473.0px;letter-spacing:-0.41px;font-size:11px;">mm</div>
<div class="t" style="left:1555.0px;top:498.8px;">Z</div>
<div class="b " style="left:1567px;top:496px;width:99px;height:20px;background:#fff;border:1px solid #909090;"></div>
<div class="t" style="left:1570.5px;top:498.6px;letter-spacing:-0.55px;font-size:12px;">-4.468</div>
<div class="b " style="left:1672px;top:496px;width:99px;height:20px;background:#fff;border:1px solid #909090;"></div>
<div class="t" style="left:1675.0px;top:498.6px;letter-spacing:-0.55px;font-size:12px;">5.349</div>
<div class="b " style="left:1777px;top:496px;width:99px;height:20px;background:#fff;border:1px solid #909090;"></div>
<div class="t" style="left:1780.3px;top:498.6px;letter-spacing:-0.55px;font-size:12px;">9.818</div>
<div class="t" style="left:1882.1px;top:499.0px;letter-spacing:-0.41px;font-size:11px;">mm</div>
<div class="b " style="left:1545px;top:546px;width:364px;height:70px;border:1px solid #f0f0f0;"></div>
<div class="b " style="left:1552px;top:539px;width:56px;height:14px;background:#fff;"></div>
<div class="t" style="left:1554.6px;top:538.0px;letter-spacing:-0.05px;font-size:11.75px;">Mesh info</div>
<div class="t" style="left:1555.2px;top:564.4px;letter-spacing:0.04px;font-size:11.25px;"># Triangles</div>
<div class="b " style="left:1639px;top:562px;width:78px;height:20px;background:#fff;border:1px solid #909090;"></div>
<div class="t" style="left:1642.3px;top:564.6px;letter-spacing:-0.55px;font-size:12px;">824800</div>
<div class="t" style="left:1738.8px;top:564.4px;letter-spacing:-0.01px;"># Points</div>
<div class="b " style="left:1822px;top:562px;width:78px;height:20px;background:#fff;border:1px solid #909090;"></div>
<div class="t" style="left:1825.0px;top:564.6px;letter-spacing:-0.55px;font-size:12px;">403791</div>
<div class="t" style="left:1555.2px;top:590.2px;letter-spacing:-0.06px;font-size:11.75px;"># Marked</div>
<div class="b " style="left:1639px;top:588px;width:78px;height:20px;background:#fff;border:1px solid #909090;"></div>
<div class="t" style="left:1642.3px;top:590.6px;letter-spacing:-0.55px;font-size:12px;">0</div>
<div class="t" style="left:1738.8px;top:590.2px;letter-spacing:-0.02px;font-size:11.75px;"># Invisible</div>
<div class="b " style="left:1822px;top:588px;width:78px;height:20px;background:#fff;border:1px solid #909090;"></div>
<div class="t" style="left:1825.0px;top:590.6px;letter-spacing:-0.55px;font-size:12px;">0</div>
<div class="b " style="left:1545px;top:624px;width:364px;height:73px;border:1px solid #f0f0f0;"></div>
<div class="b " style="left:1552px;top:617px;width:57px;height:14px;background:#fff;"></div>
<div class="t" style="left:1554.6px;top:616.4px;letter-spacing:0.02px;font-size:11.25px;">Properties</div>
<div class="t" style="left:1555.2px;top:644.0px;font-size:11.25px;">Volume</div>
<div class="b " style="left:1660px;top:642px;width:106px;height:18px;background:#fff;border:1px solid #909090;"></div>
<div class="t" style="left:1663.5px;top:643.8px;letter-spacing:-0.55px;font-size:12px;">1945.650</div>
<div class="t" style="left:1772.4px;top:645.0px;letter-spacing:-0.41px;font-size:11px;">mm</div>
<div class="t" style="left:1790.5px;top:640.0px;font-size:7.5px;">3</div>
<div class="b " style="left:1802px;top:641px;width:98px;height:21px;background:#fdfdfd;border:1px solid #f1f1f1;"></div>
<div class="t" style="left:1832.2px;top:643.9px;letter-spacing:-0.06px;font-size:11.75px;color:#a0a0a0;">Update</div>
<div class="t" style="left:1555.2px;top:671.0px;letter-spacing:-0.06px;font-size:11px;">Surface</div>
<div class="b " style="left:1660px;top:669px;width:106px;height:19px;background:#fff;border:1px solid #909090;"></div>
<div class="t" style="left:1663.5px;top:671.5px;letter-spacing:-0.55px;font-size:12px;">12244.863</div>
<div class="t" style="left:1772.4px;top:672.0px;letter-spacing:-0.41px;font-size:11px;">mm</div>
<div class="t" style="left:1790.5px;top:667.0px;font-size:7.5px;">2</div>
<div class="b" style="left:1801.3px;top:674px;width:11.5px;height:11.5px;background:#fff;border:1px solid #4a4a4a;"><svg width="11" height="11" viewBox="0 0 11 11" style="position:absolute;left:-1px;top:-1px"><path d="M2.4 5.6l2.2 2.2L8.8 3" stroke="#222" stroke-width="1" fill="none"/></svg></div>
<div class="t" style="left:1819.3px;top:671.0px;letter-spacing:-0.03px;font-size:11.75px;">Automatic</div>
<div class="t" style="left:1545.5px;top:707.4px;letter-spacing:-0.03px;font-size:11px;">Status</div>
<div class="b " style="left:1583px;top:706px;width:116px;height:18px;background:#fff;border:1px solid #909090;"></div>
<div class="t" style="left:1586.7px;top:707.6px;letter-spacing:-0.55px;font-size:12px;">Changed</div>
<div class="t" style="left:1730.4px;top:707.4px;letter-spacing:-0.04px;font-size:11.25px;">Z Compensated</div>
<div class="b " style="left:1816px;top:706px;width:94px;height:18px;background:#fff;border:1px solid #909090;"></div>
<div class="t" style="left:1819.6px;top:707.6px;letter-spacing:-0.55px;font-size:12px;">No</div>
<div class="b" style="left:1537px;top:734.5px;width:383px;height:1px;background:#ececec"></div>
<svg class="b" style="left:1541px;top:742.5px;" width="12" height="9" viewBox="0 0 12 9"><path d="M0.5 1h11L6 8z" fill="#000"/></svg>
<div class="t" style="left:1563.2px;top:740.0px;letter-spacing:0.04px;">Annotation Pages</div>
<svg class="b" style="left:1660px;top:745px" width="215" height="5" shape-rendering="crispEdges"><rect width="215" height="5" fill="url(#grip)"/></svg>
<svg class="b" style="left:1882px;top:742.5px;" width="12" height="10" viewBox="0 0 12 10"><path d="M1 5h4M5 2.5v5M5 3.5h5M5 6.5h5M10 2.5v5" stroke="#000" stroke-width="1.1" fill="none"/><rect x="5" y="3.5" width="5" height="3" fill="#fff" stroke="#000" stroke-width="1"/></svg>
<svg class="b" style="left:1903.5px;top:743px;" width="9" height="9" viewBox="0 0 9 9"><path d="M1.5 1.5l6 6M7.5 1.5l-6 6" stroke="#000" stroke-width="1.6" fill="none"/></svg>
<div class="b" style="left:1538px;top:762px;width:73px;height:19px;background:#fff;border:1px solid #8e8e8e;border-bottom:none;box-shadow:inset 1px 1px 0 #e8e8e8;"></div>
<div class="t" style="left:1562.5px;top:763.2px;letter-spacing:-0.03px;font-size:11.25px;">Text</div>
<div class="t" style="left:1625.3px;top:764.1px;letter-spacing:0.04px;font-size:11.75px;">Drawing</div>
<div class="t" style="left:1696.1px;top:764.1px;letter-spacing:-0.04px;">Attachments</div>
<div class="t" style="left:1787.0px;top:764.1px;letter-spacing:-0.01px;font-size:11px;">Textures</div>
<div class="b " style="left:1540px;top:786px;width:42px;height:20px;background:#fff;border:1px solid #8c8c8c;"></div>
<div class="t" style="left:1546.5px;top:786px;font-family:'Liberation Serif',serif;font-weight:bold;font-size:16.5px;line-height:18px;height:18px">T</div>
<svg class="b" style="left:1573px;top:795.5px;" width="6" height="3.5" viewBox="0 0 6 3.5"><path d="M0 0h6L3 3.500z" fill="#666"/></svg>
<div class="b " style="left:1840px;top:786px;width:74px;height:21px;background:#fdfdfd;border:1px solid #f1f1f1;"></div>
<div class="t" style="left:1867.2px;top:789.0px;letter-spacing:0.05px;color:#a0a0a0;">Edit</div>
<div class="b " style="left:1541px;top:822px;width:372px;height:102px;border:1px solid #f0f0f0;"></div>
<div class="b " style="left:1546px;top:815px;width:85px;height:14px;background:#fff;"></div>
<div class="t" style="left:1548.9px;top:814.0px;letter-spacing:-0.07px;font-size:11px;">Text Parameters</div>
<div class="t" style="left:1549.9px;top:842.1px;letter-spacing:0.01px;font-size:11.25px;">Verdana</div>
<div class="b " style="left:1736px;top:838px;width:169px;height:22px;background:#fff;border:1px solid #8c8c8c;"></div>
<div class="t" style="left:1782.2px;top:841.8px;letter-spacing:0.03px;">Change Font...</div>
<div class="t" style="left:1549.9px;top:870.7px;letter-spacing:-0.05px;">Arrows</div>
<div class="b " style="left:1638px;top:869px;width:91px;height:18px;background:#fff;border:1px solid #9a9a9a;"></div>
<div class="t" style="left:1642.6px;top:870.5px;letter-spacing:0.04px;font-size:11.25px;">Closed Filled</div>
<svg class="b" style="left:1718.3px;top:877px;" width="6" height="3.5" viewBox="0 0 6 3.5"><path d="M0 0h6L3 3.500z" fill="#666"/></svg>
<div class="b " style="left:1736px;top:867px;width:169px;height:22px;background:#fff;border:1px solid #8c8c8c;"></div>
<div class="b " style="left:1739px;top:871px;width:163px;height:15px;background:#1e1e1e;"></div>
<div class="t" style="left:1549.9px;top:899.0px;letter-spacing:0.17px;font-size:12px;">Width</div>
<div class="b " style="left:1638px;top:897px;width:91px;height:18px;background:#fff;border:1px solid #909090;"></div>
<div class="t" style="left:1642.2px;top:898.6px;letter-spacing:-0.55px;font-size:12px;">10</div>
<svg class="b" style="left:1718.9px;top:898.7px;" width="7" height="15" viewBox="0 0 7 15"><path d="M0.5 5.500L3.500 2.500 6.500 5.500zM0.500 9.500L3.500 12.500 6.500 9.500z" fill="#555"/></svg>
<div class="t" style="left:1736.4px;top:899.0px;letter-spacing:-0.03px;font-size:12px;">Height</div>
<div class="b " style="left:1823px;top:897px;width:82px;height:18px;background:#fff;border:1px solid #909090;"></div>
<div class="t" style="left:1827.1px;top:898.6px;letter-spacing:-0.55px;font-size:12px;">10</div>
<svg class="b" style="left:1894.1px;top:898.7px;" width="7" height="15" viewBox="0 0 7 15"><path d="M0.5 5.500L3.500 2.500 6.500 5.500zM0.500 9.500L3.500 12.500 6.500 9.500z" fill="#555"/></svg>
<div class="b " style="left:1540px;top:932px;width:121px;height:22px;background:#fff;border:1px solid #8c8c8c;"></div>
<div class="t" style="left:1585.3px;top:935.0px;letter-spacing:-0.10px;font-size:11px;">Select</div>
<div class="b " style="left:1667px;top:932px;width:121px;height:22px;background:#fff;border:1px solid #8c8c8c;"></div>
<div class="t" style="left:1706.7px;top:935.0px;letter-spacing:-0.04px;font-size:11.25px;">Clear All</div>
<div class="b " style="left:1794px;top:932px;width:121px;height:22px;background:#fff;border:1px solid #8c8c8c;"></div>
<div class="t" style="left:1833.7px;top:935.0px;letter-spacing:-0.01px;">Settings</div>
<svg class="b" style="left:1543px;top:965px;" width="9" height="12" viewBox="0 0 9 12"><path d="M1 0.5v11L8 6z" fill="#000"/></svg>
<div class="t" style="left:1563.2px;top:963.5px;letter-spacing:0.05px;font-size:11px;">Measurement Pages</div>
<svg class="b" style="left:1671px;top:968px" width="224" height="5" shape-rendering="crispEdges"><rect width="224" height="5" fill="url(#grip)"/></svg>
<svg class="b" style="left:1903.5px;top:966.5px;" width="9" height="9" viewBox="0 0 9 9"><path d="M1.5 1.5l6 6M7.5 1.5l-6 6" stroke="#000" stroke-width="1.6" fill="none"/></svg>
<div class="b" style="left:1538px;top:986px;width:67px;height:19px;background:#fff;border:1px solid #8e8e8e;border-bottom:none;box-shadow:inset 1px 1px 0 #e8e8e8;"></div>
<div class="t" style="left:1548.2px;top:987.1px;letter-spacing:-0.03px;font-size:11.25px;">Distance</div>
<div class="t" style="left:1616.2px;top:988.4px;letter-spacing:-0.12px;font-size:11px;">Circle</div>
<div class="t" style="left:1668.1px;top:988.4px;letter-spacing:0.04px;">Angle</div>
<div class="t" style="left:1722.2px;top:988.4px;letter-spacing:0.10px;font-size:12px;">Info</div>
<div class="t" style="left:1767.2px;top:988.4px;letter-spacing:0.04px;font-size:11px;">Final Part</div>
<div class="t" style="left:1839.2px;top:988.4px;letter-spacing:0.01px;">Report</div>
<svg class="b" style="left:1543px;top:1012px;" width="9" height="12" viewBox="0 0 9 12"><path d="M1 0.5v11L8 6z" fill="#000"/></svg>
<div class="t" style="left:1563.2px;top:1010.5px;letter-spacing:-0.28px;font-size:11px;">Fix Pages</div>
<svg class="b" style="left:1615px;top:1015px" width="280" height="5" shape-rendering="crispEdges"><rect width="280" height="5" fill="url(#grip)"/></svg>
<svg class="b" style="left:1903.5px;top:1013.5px;" width="9" height="9" viewBox="0 0 9 9"><path d="M1.5 1.5l6 6M7.5 1.5l-6 6" stroke="#000" stroke-width="1.6" fill="none"/></svg>
<div class="b" style="left:1538px;top:1033px;width:60px;height:19px;background:#fff;border:1px solid #8e8e8e;border-bottom:none;box-shadow:inset 1px 1px 0 #e8e8e8;"></div>
<div class="t" style="left:1548.0px;top:1034.0px;letter-spacing:0.04px;font-size:12px;">Autofix</div>
<div class="t" style="left:1609.3px;top:1035.2px;letter-spacing:-0.48px;font-size:11px;">Basic</div>
<div class="t" style="left:1658.1px;top:1035.2px;letter-spacing:0.06px;">Hole</div>
<div class="t" style="left:1705.5px;top:1035.2px;letter-spacing:0.01px;">Triangle</div>
<div class="t" style="left:1771.6px;top:1035.2px;letter-spacing:0.01px;font-size:11px;">Shell</div>
<div class="t" style="left:1820.3px;top:1035.2px;letter-spacing:-0.01px;font-size:11.25px;">Overlap</div>
<div class="b" style="left:1884.2px;top:1035px;width:4px;height:16px;overflow:hidden"><div class="t" style="left:0;top:0;font-size:12px">F</div></div>
<svg class="b" style="left:1890.5px;top:1036.5px;" width="8" height="11" viewBox="0 0 8 11"><path d="M7 0.5v10L1 5.5z" fill="#b5b5b5"/></svg>
<div class="b " style="left:1903px;top:1032px;width:16px;height:19px;background:#fff;border:1px solid #7a7a7a;"></div>
<svg class="b" style="left:1907.5px;top:1035.5px;" width="8" height="12" viewBox="0 0 8 12"><path d="M1 0.5v11L7.5 6z" fill="#000"/></svg>
<div class="b " style="left:822px;top:237px;width:616px;height:568px;background:#f0f0f0;border:1px solid rgba(95,115,140,.6);box-shadow:1px 3px 9px rgba(30,60,100,.38),0 0 3px rgba(30,60,100,.18);"></div>
<div class="b " style="left:823px;top:238px;width:614px;height:30px;background:#fff;"></div>
<svg class="b" style="left:832px;top:244.6px;" width="15" height="15" viewBox="0 0 15 15"><path d="M5 1l5 .8-.6 3.7 4 .5-.7 5-3.8-.6-.6 3.8-5-.8 .6-3.7-3.7-.6 .8-4.8 3.6 .5z" fill="#e20f1c"/><path d="M5.5 2l3 .5-.5 3" stroke="#ff6a6a" stroke-width="1" fill="none"/></svg>
<div class="t" style="left:852.3px;top:244.7px;font-size:11.75px;color:#909090;">Fix Wizard (Part: magics fix stl- Pendant set CAD file-2) &gt; Diagnostics</div>
<svg class="b" style="left:1315px;top:245px;" width="110" height="16" viewBox="0 0 110 16"><path d="M3 8.5h10" stroke="#8a8a8a" stroke-width="1"/><rect x="48.5" y="3.5" width="9" height="9" stroke="#e2e2e2" fill="none"/><path d="M94 3l10 10M104 3l-10 10" stroke="#5a5a5a" stroke-width="1" fill="none"/></svg>
<div class="b " style="left:828px;top:273px;width:120px;height:528px;background:#fff;border:1px solid #a8a8a8;box-shadow:inset 1px 1px 0 #6f6f6f, inset -1px -1px 0 #d9d9d9;"></div>
<div class="b " style="left:833px;top:275px;width:109px;height:21px;background:#f1f1f1;"></div>
<div class="b" style="left:831px;top:327px;width:111px;height:1px;background:#505050"></div>
<div class="b" style="left:831px;top:495px;width:111px;height:1px;background:#505050"></div>
<div class="t" style="left:856.0px;top:278.0px;letter-spacing:0.02px;font-size:11.75px;">Diagnostics</div>
<div class="t" style="left:856.0px;top:298.7px;letter-spacing:0.04px;font-size:11.75px;">Combined Fix</div>
<div class="t" style="left:856.0px;top:341.0px;font-size:12px;">Normals</div>
<div class="t" style="left:856.0px;top:362.0px;letter-spacing:0.08px;font-size:12px;">Stitching</div>
<div class="t" style="left:856.0px;top:383.0px;letter-spacing:0.04px;font-size:11.25px;">Noise Shells</div>
<div class="t" style="left:856.0px;top:404.0px;letter-spacing:-0.01px;font-size:11.75px;">Holes</div>
<div class="t" style="left:856.0px;top:425.0px;letter-spacing:-0.02px;font-size:11.25px;">Triangles</div>
<div class="t" style="left:856.0px;top:446.0px;">Overlaps</div>
<div class="t" style="left:856.0px;top:467.0px;letter-spacing:0.01px;font-size:11px;">Shells</div>
<div class="t" style="left:856.0px;top:508.7px;letter-spacing:-0.02px;font-size:11.75px;">Profiles</div>
<svg class="b" style="left:0px;top:0px;" width="860" height="530" viewBox="0 0 860 530"><path d="M845.2 285.7L837.0 293.5" stroke="#8a8a7a" stroke-width="2.6" stroke-linecap="round"/><circle cx="848.5" cy="282.5" r="4.6" fill="#8ec4f4" stroke="#4a6a9a" stroke-width="1.2"/><path d="M838 301.500l4-1.500v11l-4 1.500zM841.5 300.500l4-1.500v11l-4 1.500zM845 299.500l4-1.500v11.500l-4 1.500z" fill="#dfe3f5" stroke="#8a8a9a" stroke-width=".8"/><polygon points="834.4,344.0 843.7,340.1 851.1,344.8 841.5,348.8" fill="#d4d7f5"/><polygon points="834.4,344.0 841.5,348.8 841.5,358.8 834.4,354.1" fill="#b9bdf0"/><polygon points="841.5,348.8 851.1,344.8 851.1,354.7 841.5,358.8" fill="#d8262c"/><polygon points="834.4,344.0 843.7,340.1 851.1,344.8 851.1,354.7 841.5,358.8 834.4,354.1" fill="none" stroke="#6f6f80" stroke-width="0.90" stroke-linejoin="round"/><polyline points="834.4,344.0 841.5,348.8 851.1,344.8" fill="none" stroke="#6f6f80" stroke-width="0.90" stroke-linejoin="round"/><polyline points="841.5,348.8 841.5,358.8" fill="none" stroke="#6f6f80" stroke-width="0.90"/><polygon points="834.4,365.0 843.7,361.1 851.1,365.8 841.5,369.8" fill="#d4d7f5"/><polygon points="834.4,365.0 841.5,369.8 841.5,379.8 834.4,375.1" fill="#b9bdf0"/><polygon points="841.5,369.8 851.1,365.8 851.1,375.7 841.5,379.8" fill="#9a9fe0"/><polygon points="834.4,365.0 843.7,361.1 851.1,365.8 851.1,375.7 841.5,379.8 834.4,375.1" fill="none" stroke="#6f6f80" stroke-width="0.90" stroke-linejoin="round"/><polyline points="834.4,365.0 841.5,369.8 851.1,365.8" fill="none" stroke="#6f6f80" stroke-width="0.90" stroke-linejoin="round"/><polyline points="841.5,369.8 841.5,379.8" fill="none" stroke="#6f6f80" stroke-width="0.90"/><path d="M842.5 369l6.5-3" stroke="#e0e040" stroke-width="2"/><polygon points="834.4,386.0 843.7,382.1 851.1,386.8 841.5,390.8" fill="#c8cbe8"/><polygon points="834.4,386.0 841.5,390.8 841.5,400.8 834.4,396.1" fill="#a9ade0"/><polygon points="841.5,390.8 851.1,386.8 851.1,396.7 841.5,400.8" fill="#9a9fe0"/><polygon points="834.4,386.0 843.7,382.1 851.1,386.8 851.1,396.7 841.5,400.8 834.4,396.1" fill="none" stroke="#6f6f80" stroke-width="0.90" stroke-linejoin="round"/><polyline points="834.4,386.0 841.5,390.8 851.1,386.8" fill="none" stroke="#6f6f80" stroke-width="0.90" stroke-linejoin="round"/><polyline points="841.5,390.8 841.5,400.8" fill="none" stroke="#6f6f80" stroke-width="0.90"/><path d="M838 390h0M841 394h0M839 397h0M845 393h0M848 390h0M847 396h0M843 386h0M846 385.500h0" stroke="#333a55" stroke-width="2.2" stroke-linecap="round"/><polygon points="834.4,407.0 843.7,403.1 851.1,407.8 841.5,411.8" fill="#e02a3a"/><polygon points="834.4,407.0 841.5,411.8 841.5,421.8 834.4,417.1" fill="#b9bdf0"/><polygon points="841.5,411.8 851.1,407.8 851.1,417.7 841.5,421.8" fill="#9a9fe0"/><polygon points="834.4,407.0 843.7,403.1 851.1,407.8 851.1,417.7 841.5,421.8 834.4,417.1" fill="none" stroke="#6f6f80" stroke-width="0.90" stroke-linejoin="round"/><polyline points="834.4,407.0 841.5,411.8 851.1,407.8" fill="none" stroke="#6f6f80" stroke-width="0.90" stroke-linejoin="round"/><polyline points="841.5,411.8 841.5,421.8" fill="none" stroke="#6f6f80" stroke-width="0.90"/><polygon points="834.4,428.0 843.7,424.1 851.1,428.8 841.5,432.8" fill="#d4d7f5"/><polygon points="834.4,428.0 841.5,432.8 841.5,442.8 834.4,438.1" fill="#b9bdf0"/><polygon points="841.5,432.8 851.1,428.8 851.1,438.7 841.5,442.8" fill="#9a9fe0"/><polygon points="834.4,428.0 843.7,424.1 851.1,428.8 851.1,438.7 841.5,442.8 834.4,438.1" fill="none" stroke="#6f6f80" stroke-width="0.90" stroke-linejoin="round"/><polyline points="834.4,428.0 841.5,432.8 851.1,428.8" fill="none" stroke="#6f6f80" stroke-width="0.90" stroke-linejoin="round"/><polyline points="841.5,432.8 841.5,442.8" fill="none" stroke="#6f6f80" stroke-width="0.90"/><path d="M836 428.500l6.5 12.500M842.5 433l6-5M836 437l6.5-4" stroke="#4a4a8a" stroke-width=".8"/><polygon points="834.4,449.0 843.7,445.1 851.1,449.8 841.5,453.8" fill="#d4d7f5"/><polygon points="834.4,449.0 841.5,453.8 841.5,463.8 834.4,459.1" fill="#b9bdf0"/><polygon points="841.5,453.8 851.1,449.8 851.1,459.7 841.5,463.8" fill="#9a9fe0"/><polygon points="834.4,449.0 843.7,445.1 851.1,449.8 851.1,459.7 841.5,463.8 834.4,459.1" fill="none" stroke="#6f6f80" stroke-width="0.90" stroke-linejoin="round"/><polyline points="834.4,449.0 841.5,453.8 851.1,449.8" fill="none" stroke="#6f6f80" stroke-width="0.90" stroke-linejoin="round"/><polyline points="841.5,453.8 841.5,463.8" fill="none" stroke="#6f6f80" stroke-width="0.90"/><polygon points="834.4,470.0 843.7,466.1 851.1,470.8 841.5,474.8" fill="#d4d7f5"/><polygon points="834.4,470.0 841.5,474.8 841.5,484.8 834.4,480.1" fill="#b9bdf0"/><polygon points="841.5,474.8 851.1,470.8 851.1,480.7 841.5,484.8" fill="#9a9fe0"/><polygon points="834.4,470.0 843.7,466.1 851.1,470.8 851.1,480.7 841.5,484.8 834.4,480.1" fill="none" stroke="#6f6f80" stroke-width="0.90" stroke-linejoin="round"/><polyline points="834.4,470.0 841.5,474.8 851.1,470.8" fill="none" stroke="#6f6f80" stroke-width="0.90" stroke-linejoin="round"/><polyline points="841.5,474.8 841.5,484.8" fill="none" stroke="#6f6f80" stroke-width="0.90"/><path d="M838.5 509.500h7l3 3v11.500h-10z" fill="#fff" stroke="#8a9aaa" stroke-width="1"/><path d="M840.5 514.500h6M840.5 517h6M840.5 519.500h6" stroke="#4a8ad0" stroke-width="1"/><path d="M845.5 509.500v3h3" fill="none" stroke="#8a9aaa" stroke-width=".8"/></svg>
<div class="t" style="left:958.7px;top:270.3px;letter-spacing:0.05px;font-size:11px;">Current Part:</div>
<div class="b " style="left:1033px;top:272px;width:350px;height:21px;background:linear-gradient(#ebebeb,#dddddd);border:1px solid #adadad;"></div>
<div class="t" style="left:1037.3px;top:275.3px;letter-spacing:0.03px;font-size:11.25px;">magics fix stl- Pendant set CAD file-2</div>
<svg class="b" style="left:1368px;top:279px;" width="12" height="8" viewBox="0 0 12 8"><path d="M1.5 1.5L6 6l4.5-4.5" stroke="#333" stroke-width="1.2" fill="none"/></svg>
<div class="b " style="left:1388px;top:273px;width:44px;height:21px;background:#cccccc;border:1px solid #bfbfbf;"></div>
<div class="t" style="left:1398.5px;top:276.0px;letter-spacing:-0.03px;font-size:11px;color:#a3a3a3;">Next</div>
<div class="b " style="left:957px;top:305px;width:472px;height:381px;background:linear-gradient(#fefefe,#fcfcfc 28%,#f5f5f5 70%,#f0f0f0);border:1px solid #cfcfcf;border-radius:3px;box-shadow:0 1px 1px rgba(0,0,0,.12);"></div>
<div class="b " style="left:967px;top:331px;width:452px;height:67px;border:1px solid #dcdcdc;"></div>
<div class="b " style="left:973px;top:325px;width:37px;height:13px;background:#fdfdfd;"></div>
<div class="t" style="left:975.7px;top:323.0px;letter-spacing:-0.17px;font-size:11px;">Advice</div>
<div class="t" style="left:979.3px;top:343.0px;letter-spacing:0.03px;">Go to the 'Shells' page to unify shells or manually merge some parts.</div>
<div class="b " style="left:1393px;top:343px;width:15px;height:49px;background:#f0f0f0;"></div>
<svg class="b" style="left:1393px;top:343px;" width="16" height="49" viewBox="0 0 16 49"><path d="M4.5 12.5L8 9l3.5 3.5M4.5 36.5L8 40l3.5-3.5" stroke="#bdbdbd" stroke-width="1.1" fill="none"/></svg>
<div class="b " style="left:967px;top:411px;width:452px;height:263px;border:1px solid #dcdcdc;"></div>
<div class="b " style="left:973px;top:405px;width:65px;height:13px;background:#fcfcfc;"></div>
<div class="t" style="left:975.7px;top:403.0px;letter-spacing:-0.01px;">Diagnostics</div>
<div class="b" style="left:976px;top:425.5px;width:13px;height:13px;background:#fff;border:1px solid #333;"></div>
<div class="t" style="left:992.3px;top:424.0px;letter-spacing:-0.04px;font-size:11.25px;">Full Analysis</div>
<div class="b" style="left:996px;top:454.5px;width:13px;height:13px;background:#fff;border:1px solid #333;"><svg width="13" height="13" viewBox="0 0 13 13" style="position:absolute;left:-1px;top:-1px"><path d="M2.6 6.6l2.8 2.9L10.8 3.2" stroke="#333" stroke-width="1.1" fill="none"/></svg></div>
<svg class="b" style="left:1015px;top:453px;" width="17" height="16" viewBox="0 0 17 16"><path d="M0.6 8.6l3-2.4 3 3.2C8.6 5.4 11.5 2.2 16.5 0 12.8 4.5 9.8 9.5 7.4 16z" fill="#1c8f55" stroke="#1c8f55" stroke-width=".9" stroke-linejoin="round"/><path d="M1.5 8.6l2-1.400 3.200 3.600" stroke="#0a6a3a" stroke-width=".6" fill="none"/></svg>
<div class="t" style="left:1036.0px;top:453.0px;font-weight:bold;">0</div>
<div class="t" style="left:1081.0px;top:453.0px;letter-spacing:-0.05px;font-size:11.75px;">inverted normals detected</div>
<div class="b" style="left:996px;top:474.5px;width:13px;height:13px;background:#fff;border:1px solid #333;"><svg width="13" height="13" viewBox="0 0 13 13" style="position:absolute;left:-1px;top:-1px"><path d="M2.6 6.6l2.8 2.9L10.8 3.2" stroke="#333" stroke-width="1.1" fill="none"/></svg></div>
<svg class="b" style="left:1015px;top:473px;" width="17" height="16" viewBox="0 0 17 16"><path d="M0.6 8.6l3-2.4 3 3.2C8.6 5.4 11.5 2.2 16.5 0 12.8 4.5 9.8 9.5 7.4 16z" fill="#1c8f55" stroke="#1c8f55" stroke-width=".9" stroke-linejoin="round"/><path d="M1.5 8.6l2-1.400 3.200 3.600" stroke="#0a6a3a" stroke-width=".6" fill="none"/></svg>
<div class="t" style="left:1036.0px;top:473.0px;font-weight:bold;">0</div>
<div class="t" style="left:1081.0px;top:473.0px;letter-spacing:0.04px;">bad edges detected</div>
<svg class="b" style="left:1035px;top:493px;" width="17" height="16" viewBox="0 0 17 16"><path d="M0.6 8.6l3-2.4 3 3.2C8.6 5.4 11.5 2.2 16.5 0 12.8 4.5 9.8 9.5 7.4 16z" fill="#1c8f55" stroke="#1c8f55" stroke-width=".9" stroke-linejoin="round"/><path d="M1.5 8.6l2-1.400 3.200 3.600" stroke="#0a6a3a" stroke-width=".6" fill="none"/></svg>
<div class="t" style="left:1056.0px;top:493.0px;font-weight:bold;">0</div>
<div class="t" style="left:1101.0px;top:493.0px;letter-spacing:0.02px;font-size:11.75px;">bad contours detected</div>
<div class="b" style="left:1016px;top:514.5px;width:13px;height:13px;background:#fff;border:1px solid #333;"><svg width="13" height="13" viewBox="0 0 13 13" style="position:absolute;left:-1px;top:-1px"><path d="M2.6 6.6l2.8 2.9L10.8 3.2" stroke="#333" stroke-width="1.1" fill="none"/></svg></div>
<svg class="b" style="left:1035px;top:513px;" width="17" height="16" viewBox="0 0 17 16"><path d="M0.6 8.6l3-2.4 3 3.2C8.6 5.4 11.5 2.2 16.5 0 12.8 4.5 9.8 9.5 7.4 16z" fill="#1c8f55" stroke="#1c8f55" stroke-width=".9" stroke-linejoin="round"/><path d="M1.5 8.6l2-1.400 3.200 3.600" stroke="#0a6a3a" stroke-width=".6" fill="none"/></svg>
<div class="t" style="left:1056.0px;top:513.0px;font-weight:bold;">0</div>
<div class="t" style="left:1101.0px;top:513.0px;letter-spacing:0.02px;">near bad edges detected</div>
<div class="b" style="left:1016px;top:534.5px;width:13px;height:13px;background:#fff;border:1px solid #333;"><svg width="13" height="13" viewBox="0 0 13 13" style="position:absolute;left:-1px;top:-1px"><path d="M2.6 6.6l2.8 2.9L10.8 3.2" stroke="#333" stroke-width="1.1" fill="none"/></svg></div>
<svg class="b" style="left:1035px;top:533px;" width="17" height="16" viewBox="0 0 17 16"><path d="M0.6 8.6l3-2.4 3 3.2C8.6 5.4 11.5 2.2 16.5 0 12.8 4.5 9.8 9.5 7.4 16z" fill="#1c8f55" stroke="#1c8f55" stroke-width=".9" stroke-linejoin="round"/><path d="M1.5 8.6l2-1.400 3.200 3.600" stroke="#0a6a3a" stroke-width=".6" fill="none"/></svg>
<div class="t" style="left:1056.0px;top:533.0px;font-weight:bold;">0</div>
<div class="t" style="left:1101.0px;top:533.0px;letter-spacing:-0.03px;font-size:11.75px;">planar holes detected</div>
<div class="b" style="left:996px;top:554.5px;width:13px;height:13px;background:#fff;border:1px solid #333;"><svg width="13" height="13" viewBox="0 0 13 13" style="position:absolute;left:-1px;top:-1px"><path d="M2.6 6.6l2.8 2.9L10.8 3.2" stroke="#333" stroke-width="1.1" fill="none"/></svg></div>
<svg class="b" style="left:1015px;top:553px;" width="17" height="16" viewBox="0 0 17 16"><path d="M2.5 2.500c3 2 8 7 11.5 11.500M14 2c-3 3-8 8-11 12" stroke="#d8232a" stroke-width="3" fill="none" stroke-linecap="round"/></svg>
<div class="t" style="left:1036.0px;top:553.0px;font-weight:bold;">4</div>
<div class="t" style="left:1081.0px;top:553.0px;">shells detected</div>
<svg class="b" style="left:1035px;top:573px;" width="17" height="16" viewBox="0 0 17 16"><path d="M0.6 8.6l3-2.4 3 3.2C8.6 5.4 11.5 2.2 16.5 0 12.8 4.5 9.8 9.5 7.4 16z" fill="#1c8f55" stroke="#1c8f55" stroke-width=".9" stroke-linejoin="round"/><path d="M1.5 8.6l2-1.400 3.200 3.600" stroke="#0a6a3a" stroke-width=".6" fill="none"/></svg>
<div class="t" style="left:1056.0px;top:573.0px;font-weight:bold;">0</div>
<div class="t" style="left:1101.0px;top:573.0px;letter-spacing:0.03px;">possible noise shells detected</div>
<div class="b" style="left:996px;top:594.5px;width:13px;height:13px;background:#fff;border:1px solid #333;"></div>
<div class="b " style="left:1022px;top:600px;width:4px;height:3px;background:#3a2ca0;border-radius:2px;"></div>
<div class="t" style="left:1081.0px;top:593.0px;letter-spacing:0.03px;font-size:11.75px;">overlapping triangles detected</div>
<div class="b" style="left:996px;top:614.5px;width:13px;height:13px;background:#fff;border:1px solid #333;"></div>
<div class="b " style="left:1022px;top:620px;width:4px;height:3px;background:#3a2ca0;border-radius:2px;"></div>
<div class="t" style="left:1081.0px;top:613.0px;letter-spacing:0.02px;font-size:11.75px;">intersecting triangles detected</div>
<div class="b " style="left:1298px;top:642px;width:111px;height:24px;background:#e1e1e1;border:1px solid #adadad;"></div>
<div class="t" style="left:1344.3px;top:646.0px;letter-spacing:-0.24px;font-size:11px;">Update</div>
<svg class="b" style="left:1301px;top:644px;" width="22" height="20" viewBox="0 0 22 20"><path d="M9.7 10.0L3.0 17.0" stroke="#d9b23a" stroke-width="2.6" stroke-linecap="round"/><circle cx="13.0" cy="6.5" r="4.8" fill="#cfe6fa" stroke="#5a7a9a" stroke-width="1.2"/></svg>
<div class="b " style="left:1138px;top:776px;width:150px;height:24px;background:#e1e1e1;border:1px solid #adadad;"></div>
<div class="t" style="left:1188.3px;top:780.7px;letter-spacing:-0.17px;font-size:11px;">Follow Advice</div>
<svg class="b" style="left:1141px;top:778px;" width="22" height="20" viewBox="0 0 22 20"><path d="M1.5 6.800h8.500V2.200l9.5 7.6-9.5 7.600v-4.600H1.500z" fill="#5fd02a" stroke="#2f8a1a" stroke-width="1.2" stroke-linejoin="round"/><path d="M3 8.300h8.500V5.3" stroke="#b9f08a" stroke-width="1" fill="none"/></svg>
<div class="b " style="left:1294px;top:776px;width:58px;height:24px;background:#e1e1e1;border:1px solid #adadad;"></div>
<div class="t" style="left:1309.3px;top:780.3px;letter-spacing:-0.14px;font-size:11px;">Close</div>
<div class="b " style="left:1359px;top:776px;width:58px;height:24px;background:#e1e1e1;border:1px solid #adadad;"></div>
<div class="t" style="left:1376.0px;top:780.3px;letter-spacing:0.04px;font-size:11.25px;">Help</div>
<svg class="b" style="left:1424.5px;top:792px;" width="13" height="13" viewBox="0 0 13 13"><path d="M12.5 1L1 12.500M12.500 5L5 12.500M12.500 9L9 12.500" stroke="#fff" stroke-width="1.2" fill="none" transform="translate(-.8 -.8)"/><path d="M12.500 1L1 12.500M12.500 5L5 12.500M12.500 9L9 12.500" stroke="#a9a9a9" stroke-width="1.100" fill="none"/></svg>
</body></html>
